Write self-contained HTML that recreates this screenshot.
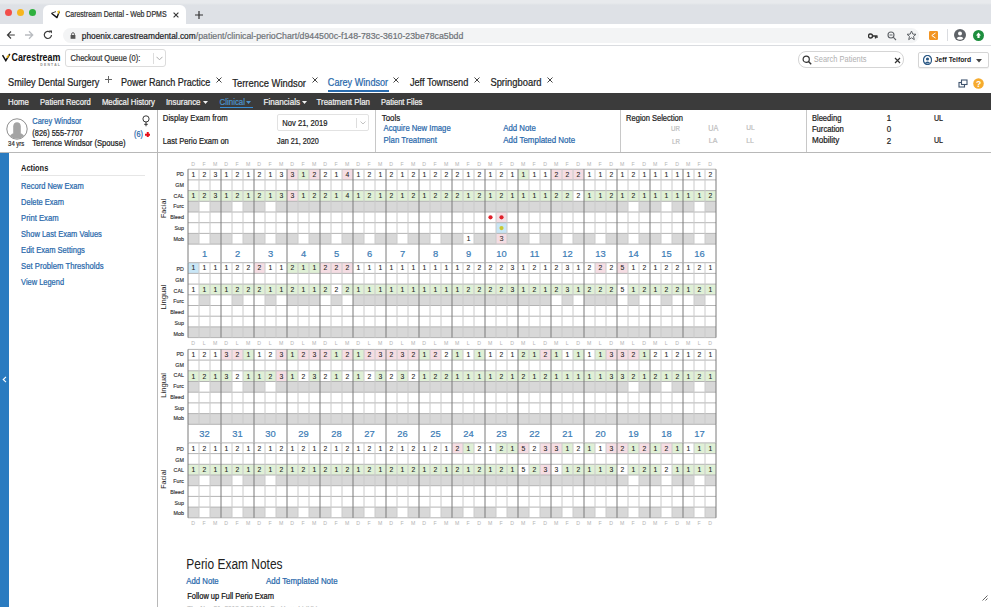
<!DOCTYPE html>
<html><head><meta charset="utf-8">
<style>
*{box-sizing:border-box;margin:0;padding:0}
html,body{width:991px;height:607px;overflow:hidden;background:#fff;font-family:"Liberation Sans",sans-serif;color:#333}
.a{position:absolute;white-space:nowrap}
.t{position:absolute;white-space:nowrap;line-height:1;transform-origin:0 0}
.grid{position:absolute;left:0;top:0}
#tabstrip{position:absolute;left:0;top:0;width:991px;height:24px;background:linear-gradient(#e8eaed 0,#e8eaed 3px,#dee1e6 5px)}
.tl{position:absolute;top:8.5px;width:7px;height:7px;border-radius:50%}
#tab{position:absolute;left:43px;top:5px;width:143px;height:19px;background:#fff;border-radius:6px 6px 0 0}
#toolbar{position:absolute;left:0;top:24px;width:991px;height:22px;background:#fff;border-bottom:1px solid #dadce0}
#omni{position:absolute;left:62.5px;top:3.5px;width:856px;height:15px;background:#f3f4f5;border-radius:7.5px}
#nav{position:absolute;left:0;top:93px;width:991px;height:17px;background:#3b3b3b}
</style></head><body>
<div id="tabstrip">
  <div class="tl" style="left:5px;background:#f24e4a"></div>
  <div class="tl" style="left:16.5px;background:#f6b51e"></div>
  <div class="tl" style="left:28.5px;background:#2eb03e"></div>
  <div id="tab">
    <svg class="a" style="left:7px;top:3.5px" width="11" height="11" viewBox="0 0 11 11"><path d="M1.5 4.2L7 8.6L9.3 2.5" fill="none" stroke="#111" stroke-width="1.4" stroke-linejoin="round"/><path d="M1.5 4.2L6 2.6" fill="none" stroke="#333" stroke-width="0.9"/><path d="M7.2 2.2L9.6 1.2L8.6 5.5z" fill="#f4c20d"/></svg>
    <svg class="a" style="left:129.5px;top:6.5px" width="6" height="6" viewBox="0 0 6 6"><path d="M0.6 0.6L5.4 5.4M5.4 0.6L0.6 5.4" stroke="#333" stroke-width="1.1"/></svg>
  </div>
  <svg class="a" style="left:195px;top:10.5px" width="8" height="8" viewBox="0 0 8 8"><path d="M4 0V8M0 4H8" stroke="#333" stroke-width="1.2"/></svg>
</div>
<div id="toolbar">
  <svg class="a" style="left:5.6px;top:6px" width="10" height="10" viewBox="0 0 10 10"><path d="M8.8 5H1.8M5 1.5L1.5 5L5 8.5" fill="none" stroke="#3c3c3c" stroke-width="1.2"/></svg>
  <svg class="a" style="left:24px;top:6px" width="10" height="10" viewBox="0 0 10 10"><path d="M1 5H8.5M5 1.3L8.7 5L5 8.7" fill="none" stroke="#b9bcc0" stroke-width="1.3"/></svg>
  <svg class="a" style="left:43px;top:6px" width="10" height="10" viewBox="0 0 10 10"><path d="M8.5 5A3.6 3.6 0 1 1 7.4 2.3" fill="none" stroke="#3c3c3c" stroke-width="1.2"/><path d="M6 0.5H9V3.5z" fill="#3c3c3c"/></svg>
  <div id="omni">
    <svg class="a" style="left:7.5px;top:4px" width="6" height="7" viewBox="0 0 6 7"><rect x="0.6" y="3" width="4.8" height="3.8" fill="#555"/><path d="M1.6 3.2V2.1A1.4 1.4 0 0 1 4.4 2.1V3.2" fill="none" stroke="#555" stroke-width="0.9"/></svg>
    <svg class="a" style="left:805px;top:4px" width="10" height="8" viewBox="0 0 10 8"><circle cx="2.5" cy="4" r="2" fill="none" stroke="#333" stroke-width="1.4"/><path d="M4.5 4H9.5M7.5 4V6.5M9 4V6" stroke="#333" stroke-width="1.3" fill="none"/></svg>
    <svg class="a" style="left:824px;top:3px" width="10" height="10" viewBox="0 0 10 10"><circle cx="4" cy="4" r="3" fill="none" stroke="#5f6368" stroke-width="1.1"/><path d="M6.2 6.2L9 9M2.5 4H5.5" stroke="#5f6368" stroke-width="1.1"/></svg>
    <svg class="a" style="left:843px;top:2.5px" width="11" height="11" viewBox="0 0 11 11"><path d="M5.5 1L6.8 4.1L10 4.3L7.5 6.4L8.3 9.6L5.5 7.8L2.7 9.6L3.5 6.4L1 4.3L4.2 4.1z" fill="none" stroke="#5f6368" stroke-width="1"/></svg>
  </div>
  <svg class="a" style="left:929px;top:6.5px" width="9" height="9" viewBox="0 0 9 9"><rect width="9" height="9" rx="1.2" fill="#f29422"/><path d="M6.5 2L2.8 4.5L6.5 7" fill="none" stroke="#fff" stroke-width="1"/></svg>
  <div class="a" style="left:947px;top:5px;width:1px;height:12px;background:#dadce0"></div>
  <svg class="a" style="left:954px;top:5px" width="12" height="12" viewBox="0 0 12 12"><circle cx="6" cy="6" r="6" fill="#5f6368"/><circle cx="6" cy="4.6" r="2" fill="#fff"/><path d="M2.6 9.2A4 3 0 0 1 9.4 9.2A4.6 4.6 0 0 1 2.6 9.2z" fill="#fff"/></svg>
  <svg class="a" style="left:972.5px;top:5.5px" width="11" height="11" viewBox="0 0 11 11"><circle cx="5.5" cy="5.5" r="5.5" fill="#1e8e3e"/><path d="M5.5 2.5L8 5.5H6.6V8H4.4V5.5H3z" fill="#fff"/></svg>
</div>

<!-- app header shapes -->
<svg class="a" style="left:2px;top:53px" width="9" height="9" viewBox="0 0 9 9"><path d="M0.5 2.2L3.8 7.6L7.8 1" fill="none" stroke="#111" stroke-width="1.5"/><path d="M4.5 3.2L7.6 1.6L5.7 5.5z" fill="#f2b400"/></svg>
<div class="a" style="left:64.8px;top:48.8px;width:101.2px;height:17.8px;border:1px solid #dcdcdc;border-radius:3px;background:#fff">
  <div class="a" style="left:87px;top:3px;width:1px;height:11px;background:#ddd"></div>
  <svg class="a" style="left:90px;top:6.3px" width="7" height="5" viewBox="0 0 7 5"><path d="M0.5 0.8L3.5 3.8L6.5 0.8" fill="none" stroke="#aaa" stroke-width="1"/></svg>
</div>
<div class="a" style="left:798px;top:51px;width:106px;height:16.5px;border:1px solid #d5d5d5;border-radius:8px;background:#fff">
  <svg class="a" style="left:3px;top:2.5px" width="10" height="10" viewBox="0 0 10 10"><circle cx="4.2" cy="4.2" r="3.1" fill="none" stroke="#333" stroke-width="1.2"/><path d="M6.5 6.5L9.2 9.2" stroke="#333" stroke-width="1.4"/></svg>
  <svg class="a" style="left:94.5px;top:4.5px" width="7" height="7" viewBox="0 0 7 7"><path d="M1 1L6 6M6 1L1 6" stroke="#333" stroke-width="1.2"/></svg>
</div>
<div class="a" style="left:917.5px;top:51.5px;width:71px;height:16px;border:1px solid #d5d5d5;border-radius:2px;background:#fff;box-shadow:0 1px 1px rgba(0,0,0,.06)">
  <svg class="a" style="left:4px;top:2.5px" width="9" height="10" viewBox="0 0 9 10"><ellipse cx="4.5" cy="5" rx="4" ry="4.6" fill="none" stroke="#2d5a86" stroke-width="1.2"/><circle cx="4.5" cy="4" r="1.6" fill="#2d5a86"/><path d="M1.8 8.6A2.8 2.8 0 0 1 7.2 8.6z" fill="#2d5a86"/></svg>
  <svg class="a" style="left:57px;top:6px" width="6" height="4" viewBox="0 0 6 4"><path d="M0 0H6L3 3.5z" fill="#444"/></svg>
</div>

<!-- patient tabs shapes -->
<svg class="a" style="left:105px;top:75.5px" width="7" height="7" viewBox="0 0 7 7"><path d="M3.5 0V7M0 3.5H7" stroke="#666" stroke-width="1"/></svg>
<svg class="a" style="left:216px;top:76.5px" width="6" height="6" viewBox="0 0 6 6"><path d="M0.5 0.5L5.5 5.5M5.5 0.5L0.5 5.5" stroke="#444" stroke-width="1"/></svg>
<svg class="a" style="left:311.5px;top:76.5px" width="6" height="6" viewBox="0 0 6 6"><path d="M0.5 0.5L5.5 5.5M5.5 0.5L0.5 5.5" stroke="#444" stroke-width="1"/></svg>
<svg class="a" style="left:393px;top:76.5px" width="6" height="6" viewBox="0 0 6 6"><path d="M0.5 0.5L5.5 5.5M5.5 0.5L0.5 5.5" stroke="#444" stroke-width="1"/></svg>
<svg class="a" style="left:474px;top:76.5px" width="6" height="6" viewBox="0 0 6 6"><path d="M0.5 0.5L5.5 5.5M5.5 0.5L0.5 5.5" stroke="#444" stroke-width="1"/></svg>
<svg class="a" style="left:547px;top:76.5px" width="6" height="6" viewBox="0 0 6 6"><path d="M0.5 0.5L5.5 5.5M5.5 0.5L0.5 5.5" stroke="#444" stroke-width="1"/></svg>
<div class="a" style="left:327.8px;top:90px;width:61px;height:1.5px;background:#2a6db0"></div>
<svg class="a" style="left:958px;top:79px" width="10" height="9" viewBox="0 0 10 9"><rect x="1" y="3.5" width="5.5" height="4.5" fill="none" stroke="#3f546e" stroke-width="1.1"/><rect x="3.5" y="1" width="5.5" height="4.5" fill="#fff" stroke="#3f546e" stroke-width="1.1"/></svg>
<svg class="a" style="left:973px;top:78px" width="11" height="11" viewBox="0 0 11 11"><circle cx="5.5" cy="5.5" r="5.3" fill="#f6ab2e"/><text x="5.5" y="8.6" font-size="8.5" font-weight="bold" fill="#fff" text-anchor="middle" font-family="Liberation Sans">?</text></svg>

<!-- nav -->
<div id="nav">
  <svg class="a" style="left:202.5px;top:8px" width="5" height="3" viewBox="0 0 5 3"><path d="M0 0H5L2.5 3z" fill="#f2f2f2"/></svg>
  <svg class="a" style="left:246px;top:8px" width="5" height="3" viewBox="0 0 5 3"><path d="M0 0H5L2.5 3z" fill="#4d93cc"/></svg>
  <svg class="a" style="left:301.5px;top:8px" width="5" height="3" viewBox="0 0 5 3"><path d="M0 0H5L2.5 3z" fill="#f2f2f2"/></svg>
  <div class="a" style="left:219.6px;top:13.5px;width:33.5px;height:1.5px;background:#3a8fd6"></div>
</div>

<!-- patient header -->
<div class="a" style="left:0;top:152px;width:991px;height:1px;background:#b8b8b8"></div>
<div class="a" style="left:157px;top:110px;width:1px;height:497px;background:#b8b8b8"></div>
<div class="a" style="left:375px;top:110px;width:1px;height:42px;background:#c8c8c8"></div>
<div class="a" style="left:620px;top:110px;width:1px;height:42px;background:#c8c8c8"></div>
<div class="a" style="left:806px;top:110px;width:1px;height:42px;background:#c8c8c8"></div>

<svg class="a" style="left:5.5px;top:117.8px" width="22" height="22" viewBox="0 0 22 22"><defs><clipPath id="cc"><circle cx="11" cy="11" r="9.8"/></clipPath></defs><circle cx="11" cy="11" r="10.2" fill="#fff" stroke="#8e8e8e" stroke-width="1"/><g clip-path="url(#cc)" fill="#a4a4a4"><path d="M7.2 15.2V8.5C7.2 5.6 8.8 4.2 11 4.2C13.2 4.2 14.8 5.6 14.8 8.5V15.2z"/><path d="M3 22C3 17.5 5.5 15.6 9 14.8H13C16.5 15.6 19 17.5 19 22z"/></g></svg>
<svg class="a" style="left:141.6px;top:115px" width="8" height="12" viewBox="0 0 8 12"><circle cx="4" cy="3.9" r="3.1" fill="none" stroke="#222" stroke-width="0.9"/><path d="M4 7V11.3M2.2 9.3H5.8" stroke="#222" stroke-width="0.9"/></svg>
<svg class="a" style="left:144.6px;top:131.5px" width="5.5" height="5.5" viewBox="0 0 6 6"><path d="M3 0.3V5.7M0.3 3H5.7" stroke="#e8101a" stroke-width="2.2" stroke-linecap="round"/></svg>

<div class="a" style="left:277.2px;top:114.2px;width:91.6px;height:17.2px;border:1px solid #e2e2e2;border-radius:2px;background:#fff">
  <div class="a" style="left:78.3px;top:3px;width:1px;height:9.5px;background:#ddd"></div>
  <svg class="a" style="left:82px;top:6px" width="6" height="4" viewBox="0 0 6 4"><path d="M0.5 0.5L3 3L5.5 0.5" fill="none" stroke="#bbb" stroke-width="0.9"/></svg>
</div>

<!-- left sidebar -->
<div class="a" style="left:0;top:152.5px;width:9.2px;height:455px;background:#2a7bc0"></div>
<svg class="a" style="left:2px;top:376px" width="5" height="7" viewBox="0 0 5 7"><path d="M4 0.8L1.2 3.5L4 6.2" fill="none" stroke="#fff" stroke-width="1.1"/></svg>
<div class="a" style="left:21px;top:175px;width:124px;height:1px;background:#e6e6e6"></div>

<svg class="grid" width="991" height="607" viewBox="0 0 991 607" font-family="Liberation Sans, sans-serif"><text x="193.10" y="165.90" font-size="5.2" fill="#b4b4b4" text-anchor="middle" font-weight="normal" >D</text><text x="204.10" y="165.90" font-size="5.2" fill="#b4b4b4" text-anchor="middle" font-weight="normal" >F</text><text x="215.10" y="165.90" font-size="5.2" fill="#b4b4b4" text-anchor="middle" font-weight="normal" >M</text><text x="226.10" y="165.90" font-size="5.2" fill="#b4b4b4" text-anchor="middle" font-weight="normal" >D</text><text x="237.10" y="165.90" font-size="5.2" fill="#b4b4b4" text-anchor="middle" font-weight="normal" >F</text><text x="248.10" y="165.90" font-size="5.2" fill="#b4b4b4" text-anchor="middle" font-weight="normal" >M</text><text x="259.10" y="165.90" font-size="5.2" fill="#b4b4b4" text-anchor="middle" font-weight="normal" >D</text><text x="270.10" y="165.90" font-size="5.2" fill="#b4b4b4" text-anchor="middle" font-weight="normal" >F</text><text x="281.10" y="165.90" font-size="5.2" fill="#b4b4b4" text-anchor="middle" font-weight="normal" >M</text><text x="292.10" y="165.90" font-size="5.2" fill="#b4b4b4" text-anchor="middle" font-weight="normal" >D</text><text x="303.10" y="165.90" font-size="5.2" fill="#b4b4b4" text-anchor="middle" font-weight="normal" >F</text><text x="314.10" y="165.90" font-size="5.2" fill="#b4b4b4" text-anchor="middle" font-weight="normal" >M</text><text x="325.10" y="165.90" font-size="5.2" fill="#b4b4b4" text-anchor="middle" font-weight="normal" >D</text><text x="336.10" y="165.90" font-size="5.2" fill="#b4b4b4" text-anchor="middle" font-weight="normal" >F</text><text x="347.10" y="165.90" font-size="5.2" fill="#b4b4b4" text-anchor="middle" font-weight="normal" >M</text><text x="358.10" y="165.90" font-size="5.2" fill="#b4b4b4" text-anchor="middle" font-weight="normal" >D</text><text x="369.10" y="165.90" font-size="5.2" fill="#b4b4b4" text-anchor="middle" font-weight="normal" >F</text><text x="380.10" y="165.90" font-size="5.2" fill="#b4b4b4" text-anchor="middle" font-weight="normal" >M</text><text x="391.10" y="165.90" font-size="5.2" fill="#b4b4b4" text-anchor="middle" font-weight="normal" >D</text><text x="402.10" y="165.90" font-size="5.2" fill="#b4b4b4" text-anchor="middle" font-weight="normal" >F</text><text x="413.10" y="165.90" font-size="5.2" fill="#b4b4b4" text-anchor="middle" font-weight="normal" >M</text><text x="424.10" y="165.90" font-size="5.2" fill="#b4b4b4" text-anchor="middle" font-weight="normal" >D</text><text x="435.10" y="165.90" font-size="5.2" fill="#b4b4b4" text-anchor="middle" font-weight="normal" >F</text><text x="446.10" y="165.90" font-size="5.2" fill="#b4b4b4" text-anchor="middle" font-weight="normal" >M</text><text x="457.10" y="165.90" font-size="5.2" fill="#b4b4b4" text-anchor="middle" font-weight="normal" >M</text><text x="468.10" y="165.90" font-size="5.2" fill="#b4b4b4" text-anchor="middle" font-weight="normal" >F</text><text x="479.10" y="165.90" font-size="5.2" fill="#b4b4b4" text-anchor="middle" font-weight="normal" >D</text><text x="490.10" y="165.90" font-size="5.2" fill="#b4b4b4" text-anchor="middle" font-weight="normal" >M</text><text x="501.10" y="165.90" font-size="5.2" fill="#b4b4b4" text-anchor="middle" font-weight="normal" >F</text><text x="512.10" y="165.90" font-size="5.2" fill="#b4b4b4" text-anchor="middle" font-weight="normal" >D</text><text x="523.10" y="165.90" font-size="5.2" fill="#b4b4b4" text-anchor="middle" font-weight="normal" >M</text><text x="534.10" y="165.90" font-size="5.2" fill="#b4b4b4" text-anchor="middle" font-weight="normal" >F</text><text x="545.10" y="165.90" font-size="5.2" fill="#b4b4b4" text-anchor="middle" font-weight="normal" >D</text><text x="556.10" y="165.90" font-size="5.2" fill="#b4b4b4" text-anchor="middle" font-weight="normal" >M</text><text x="567.10" y="165.90" font-size="5.2" fill="#b4b4b4" text-anchor="middle" font-weight="normal" >F</text><text x="578.10" y="165.90" font-size="5.2" fill="#b4b4b4" text-anchor="middle" font-weight="normal" >D</text><text x="589.10" y="165.90" font-size="5.2" fill="#b4b4b4" text-anchor="middle" font-weight="normal" >M</text><text x="600.10" y="165.90" font-size="5.2" fill="#b4b4b4" text-anchor="middle" font-weight="normal" >F</text><text x="611.10" y="165.90" font-size="5.2" fill="#b4b4b4" text-anchor="middle" font-weight="normal" >D</text><text x="622.10" y="165.90" font-size="5.2" fill="#b4b4b4" text-anchor="middle" font-weight="normal" >M</text><text x="633.10" y="165.90" font-size="5.2" fill="#b4b4b4" text-anchor="middle" font-weight="normal" >F</text><text x="644.10" y="165.90" font-size="5.2" fill="#b4b4b4" text-anchor="middle" font-weight="normal" >D</text><text x="655.10" y="165.90" font-size="5.2" fill="#b4b4b4" text-anchor="middle" font-weight="normal" >M</text><text x="666.10" y="165.90" font-size="5.2" fill="#b4b4b4" text-anchor="middle" font-weight="normal" >F</text><text x="677.10" y="165.90" font-size="5.2" fill="#b4b4b4" text-anchor="middle" font-weight="normal" >D</text><text x="688.10" y="165.90" font-size="5.2" fill="#b4b4b4" text-anchor="middle" font-weight="normal" >M</text><text x="699.10" y="165.90" font-size="5.2" fill="#b4b4b4" text-anchor="middle" font-weight="normal" >F</text><text x="710.10" y="165.90" font-size="5.2" fill="#b4b4b4" text-anchor="middle" font-weight="normal" >D</text><rect x="188.00" y="169.20" width="11.00" height="10.70" fill="#ffffff"/><rect x="188.00" y="190.60" width="11.00" height="10.70" fill="#e0f0d6"/><rect x="188.00" y="201.30" width="11.00" height="10.70" fill="#d8d8d8"/><rect x="188.00" y="233.40" width="11.00" height="10.70" fill="#d8d8d8"/><rect x="199.00" y="169.20" width="11.00" height="10.70" fill="#ffffff"/><rect x="199.00" y="190.60" width="11.00" height="10.70" fill="#e0f0d6"/><rect x="210.00" y="169.20" width="11.00" height="10.70" fill="#ffffff"/><rect x="210.00" y="190.60" width="11.00" height="10.70" fill="#e0f0d6"/><rect x="210.00" y="201.30" width="11.00" height="10.70" fill="#d8d8d8"/><rect x="210.00" y="233.40" width="11.00" height="10.70" fill="#d8d8d8"/><rect x="221.00" y="169.20" width="11.00" height="10.70" fill="#ffffff"/><rect x="221.00" y="190.60" width="11.00" height="10.70" fill="#e0f0d6"/><rect x="221.00" y="201.30" width="11.00" height="10.70" fill="#d8d8d8"/><rect x="221.00" y="233.40" width="11.00" height="10.70" fill="#d8d8d8"/><rect x="232.00" y="169.20" width="11.00" height="10.70" fill="#ffffff"/><rect x="232.00" y="190.60" width="11.00" height="10.70" fill="#e0f0d6"/><rect x="243.00" y="169.20" width="11.00" height="10.70" fill="#ffffff"/><rect x="243.00" y="190.60" width="11.00" height="10.70" fill="#e0f0d6"/><rect x="243.00" y="201.30" width="11.00" height="10.70" fill="#d8d8d8"/><rect x="243.00" y="233.40" width="11.00" height="10.70" fill="#d8d8d8"/><rect x="254.00" y="169.20" width="11.00" height="10.70" fill="#ffffff"/><rect x="254.00" y="190.60" width="11.00" height="10.70" fill="#e0f0d6"/><rect x="254.00" y="201.30" width="11.00" height="10.70" fill="#d8d8d8"/><rect x="254.00" y="233.40" width="11.00" height="10.70" fill="#d8d8d8"/><rect x="265.00" y="169.20" width="11.00" height="10.70" fill="#ffffff"/><rect x="265.00" y="190.60" width="11.00" height="10.70" fill="#e0f0d6"/><rect x="276.00" y="169.20" width="11.00" height="10.70" fill="#ffffff"/><rect x="276.00" y="190.60" width="11.00" height="10.70" fill="#e0f0d6"/><rect x="276.00" y="201.30" width="11.00" height="10.70" fill="#d8d8d8"/><rect x="276.00" y="233.40" width="11.00" height="10.70" fill="#d8d8d8"/><rect x="287.00" y="169.20" width="11.00" height="10.70" fill="#f5dde3"/><rect x="287.00" y="190.60" width="11.00" height="10.70" fill="#f5dde3"/><rect x="287.00" y="201.30" width="11.00" height="10.70" fill="#d8d8d8"/><rect x="287.00" y="233.40" width="11.00" height="10.70" fill="#d8d8d8"/><rect x="298.00" y="169.20" width="11.00" height="10.70" fill="#e0f0d6"/><rect x="298.00" y="190.60" width="11.00" height="10.70" fill="#e0f0d6"/><rect x="298.00" y="201.30" width="11.00" height="10.70" fill="#d8d8d8"/><rect x="309.00" y="169.20" width="11.00" height="10.70" fill="#f5dde3"/><rect x="309.00" y="190.60" width="11.00" height="10.70" fill="#e0f0d6"/><rect x="309.00" y="201.30" width="11.00" height="10.70" fill="#d8d8d8"/><rect x="309.00" y="233.40" width="11.00" height="10.70" fill="#d8d8d8"/><rect x="320.00" y="169.20" width="11.00" height="10.70" fill="#ffffff"/><rect x="320.00" y="190.60" width="11.00" height="10.70" fill="#e0f0d6"/><rect x="320.00" y="201.30" width="11.00" height="10.70" fill="#d8d8d8"/><rect x="320.00" y="233.40" width="11.00" height="10.70" fill="#d8d8d8"/><rect x="331.00" y="169.20" width="11.00" height="10.70" fill="#ffffff"/><rect x="331.00" y="190.60" width="11.00" height="10.70" fill="#e0f0d6"/><rect x="331.00" y="201.30" width="11.00" height="10.70" fill="#d8d8d8"/><rect x="342.00" y="169.20" width="11.00" height="10.70" fill="#f5dde3"/><rect x="342.00" y="190.60" width="11.00" height="10.70" fill="#e0f0d6"/><rect x="342.00" y="201.30" width="11.00" height="10.70" fill="#d8d8d8"/><rect x="342.00" y="233.40" width="11.00" height="10.70" fill="#d8d8d8"/><rect x="353.00" y="169.20" width="11.00" height="10.70" fill="#ffffff"/><rect x="353.00" y="190.60" width="11.00" height="10.70" fill="#e0f0d6"/><rect x="353.00" y="201.30" width="11.00" height="10.70" fill="#d8d8d8"/><rect x="353.00" y="233.40" width="11.00" height="10.70" fill="#d8d8d8"/><rect x="364.00" y="169.20" width="11.00" height="10.70" fill="#ffffff"/><rect x="364.00" y="190.60" width="11.00" height="10.70" fill="#e0f0d6"/><rect x="364.00" y="201.30" width="11.00" height="10.70" fill="#d8d8d8"/><rect x="375.00" y="169.20" width="11.00" height="10.70" fill="#ffffff"/><rect x="375.00" y="190.60" width="11.00" height="10.70" fill="#e0f0d6"/><rect x="375.00" y="201.30" width="11.00" height="10.70" fill="#d8d8d8"/><rect x="375.00" y="233.40" width="11.00" height="10.70" fill="#d8d8d8"/><rect x="386.00" y="169.20" width="11.00" height="10.70" fill="#ffffff"/><rect x="386.00" y="190.60" width="11.00" height="10.70" fill="#e0f0d6"/><rect x="386.00" y="201.30" width="11.00" height="10.70" fill="#d8d8d8"/><rect x="386.00" y="233.40" width="11.00" height="10.70" fill="#d8d8d8"/><rect x="397.00" y="169.20" width="11.00" height="10.70" fill="#ffffff"/><rect x="397.00" y="190.60" width="11.00" height="10.70" fill="#e0f0d6"/><rect x="397.00" y="201.30" width="11.00" height="10.70" fill="#d8d8d8"/><rect x="408.00" y="169.20" width="11.00" height="10.70" fill="#ffffff"/><rect x="408.00" y="190.60" width="11.00" height="10.70" fill="#e0f0d6"/><rect x="408.00" y="201.30" width="11.00" height="10.70" fill="#d8d8d8"/><rect x="408.00" y="233.40" width="11.00" height="10.70" fill="#d8d8d8"/><rect x="419.00" y="169.20" width="11.00" height="10.70" fill="#ffffff"/><rect x="419.00" y="190.60" width="11.00" height="10.70" fill="#e0f0d6"/><rect x="419.00" y="201.30" width="11.00" height="10.70" fill="#d8d8d8"/><rect x="419.00" y="233.40" width="11.00" height="10.70" fill="#d8d8d8"/><rect x="430.00" y="169.20" width="11.00" height="10.70" fill="#ffffff"/><rect x="430.00" y="190.60" width="11.00" height="10.70" fill="#e0f0d6"/><rect x="430.00" y="201.30" width="11.00" height="10.70" fill="#d8d8d8"/><rect x="441.00" y="169.20" width="11.00" height="10.70" fill="#ffffff"/><rect x="441.00" y="190.60" width="11.00" height="10.70" fill="#e0f0d6"/><rect x="441.00" y="201.30" width="11.00" height="10.70" fill="#d8d8d8"/><rect x="441.00" y="233.40" width="11.00" height="10.70" fill="#d8d8d8"/><rect x="452.00" y="169.20" width="11.00" height="10.70" fill="#ffffff"/><rect x="452.00" y="190.60" width="11.00" height="10.70" fill="#e0f0d6"/><rect x="452.00" y="201.30" width="11.00" height="10.70" fill="#d8d8d8"/><rect x="452.00" y="233.40" width="11.00" height="10.70" fill="#d8d8d8"/><rect x="463.00" y="169.20" width="11.00" height="10.70" fill="#ffffff"/><rect x="463.00" y="190.60" width="11.00" height="10.70" fill="#e0f0d6"/><rect x="463.00" y="201.30" width="11.00" height="10.70" fill="#d8d8d8"/><rect x="474.00" y="169.20" width="11.00" height="10.70" fill="#ffffff"/><rect x="474.00" y="190.60" width="11.00" height="10.70" fill="#e0f0d6"/><rect x="474.00" y="201.30" width="11.00" height="10.70" fill="#d8d8d8"/><rect x="474.00" y="233.40" width="11.00" height="10.70" fill="#d8d8d8"/><rect x="485.00" y="169.20" width="11.00" height="10.70" fill="#ffffff"/><rect x="485.00" y="190.60" width="11.00" height="10.70" fill="#e0f0d6"/><rect x="485.00" y="201.30" width="11.00" height="10.70" fill="#d8d8d8"/><rect x="485.00" y="233.40" width="11.00" height="10.70" fill="#d8d8d8"/><rect x="496.00" y="169.20" width="11.00" height="10.70" fill="#ffffff"/><rect x="496.00" y="190.60" width="11.00" height="10.70" fill="#e0f0d6"/><rect x="496.00" y="201.30" width="11.00" height="10.70" fill="#d8d8d8"/><rect x="507.00" y="169.20" width="11.00" height="10.70" fill="#ffffff"/><rect x="507.00" y="190.60" width="11.00" height="10.70" fill="#e0f0d6"/><rect x="507.00" y="201.30" width="11.00" height="10.70" fill="#d8d8d8"/><rect x="507.00" y="233.40" width="11.00" height="10.70" fill="#d8d8d8"/><rect x="518.00" y="169.20" width="11.00" height="10.70" fill="#e0f0d6"/><rect x="518.00" y="190.60" width="11.00" height="10.70" fill="#e0f0d6"/><rect x="518.00" y="201.30" width="11.00" height="10.70" fill="#d8d8d8"/><rect x="518.00" y="233.40" width="11.00" height="10.70" fill="#d8d8d8"/><rect x="529.00" y="169.20" width="11.00" height="10.70" fill="#ffffff"/><rect x="529.00" y="190.60" width="11.00" height="10.70" fill="#e0f0d6"/><rect x="529.00" y="201.30" width="11.00" height="10.70" fill="#d8d8d8"/><rect x="540.00" y="169.20" width="11.00" height="10.70" fill="#ffffff"/><rect x="540.00" y="190.60" width="11.00" height="10.70" fill="#e0f0d6"/><rect x="540.00" y="201.30" width="11.00" height="10.70" fill="#d8d8d8"/><rect x="540.00" y="233.40" width="11.00" height="10.70" fill="#d8d8d8"/><rect x="551.00" y="169.20" width="11.00" height="10.70" fill="#f5dde3"/><rect x="551.00" y="190.60" width="11.00" height="10.70" fill="#e0f0d6"/><rect x="551.00" y="201.30" width="11.00" height="10.70" fill="#d8d8d8"/><rect x="551.00" y="233.40" width="11.00" height="10.70" fill="#d8d8d8"/><rect x="562.00" y="169.20" width="11.00" height="10.70" fill="#f5dde3"/><rect x="562.00" y="190.60" width="11.00" height="10.70" fill="#e0f0d6"/><rect x="562.00" y="201.30" width="11.00" height="10.70" fill="#d8d8d8"/><rect x="573.00" y="169.20" width="11.00" height="10.70" fill="#f5dde3"/><rect x="573.00" y="190.60" width="11.00" height="10.70" fill="#ffffff"/><rect x="573.00" y="201.30" width="11.00" height="10.70" fill="#d8d8d8"/><rect x="573.00" y="233.40" width="11.00" height="10.70" fill="#d8d8d8"/><rect x="584.00" y="169.20" width="11.00" height="10.70" fill="#ffffff"/><rect x="584.00" y="190.60" width="11.00" height="10.70" fill="#e0f0d6"/><rect x="584.00" y="201.30" width="11.00" height="10.70" fill="#d8d8d8"/><rect x="584.00" y="233.40" width="11.00" height="10.70" fill="#d8d8d8"/><rect x="595.00" y="169.20" width="11.00" height="10.70" fill="#ffffff"/><rect x="595.00" y="190.60" width="11.00" height="10.70" fill="#e0f0d6"/><rect x="595.00" y="201.30" width="11.00" height="10.70" fill="#d8d8d8"/><rect x="606.00" y="169.20" width="11.00" height="10.70" fill="#ffffff"/><rect x="606.00" y="190.60" width="11.00" height="10.70" fill="#e0f0d6"/><rect x="606.00" y="201.30" width="11.00" height="10.70" fill="#d8d8d8"/><rect x="606.00" y="233.40" width="11.00" height="10.70" fill="#d8d8d8"/><rect x="617.00" y="169.20" width="11.00" height="10.70" fill="#ffffff"/><rect x="617.00" y="190.60" width="11.00" height="10.70" fill="#e0f0d6"/><rect x="617.00" y="201.30" width="11.00" height="10.70" fill="#d8d8d8"/><rect x="617.00" y="233.40" width="11.00" height="10.70" fill="#d8d8d8"/><rect x="628.00" y="169.20" width="11.00" height="10.70" fill="#ffffff"/><rect x="628.00" y="190.60" width="11.00" height="10.70" fill="#e0f0d6"/><rect x="639.00" y="169.20" width="11.00" height="10.70" fill="#ffffff"/><rect x="639.00" y="190.60" width="11.00" height="10.70" fill="#e0f0d6"/><rect x="639.00" y="201.30" width="11.00" height="10.70" fill="#d8d8d8"/><rect x="639.00" y="233.40" width="11.00" height="10.70" fill="#d8d8d8"/><rect x="650.00" y="169.20" width="11.00" height="10.70" fill="#ffffff"/><rect x="650.00" y="190.60" width="11.00" height="10.70" fill="#e0f0d6"/><rect x="650.00" y="201.30" width="11.00" height="10.70" fill="#d8d8d8"/><rect x="650.00" y="233.40" width="11.00" height="10.70" fill="#d8d8d8"/><rect x="661.00" y="169.20" width="11.00" height="10.70" fill="#ffffff"/><rect x="661.00" y="190.60" width="11.00" height="10.70" fill="#e0f0d6"/><rect x="672.00" y="169.20" width="11.00" height="10.70" fill="#ffffff"/><rect x="672.00" y="190.60" width="11.00" height="10.70" fill="#e0f0d6"/><rect x="672.00" y="201.30" width="11.00" height="10.70" fill="#d8d8d8"/><rect x="672.00" y="233.40" width="11.00" height="10.70" fill="#d8d8d8"/><rect x="683.00" y="169.20" width="11.00" height="10.70" fill="#ffffff"/><rect x="683.00" y="190.60" width="11.00" height="10.70" fill="#e0f0d6"/><rect x="683.00" y="201.30" width="11.00" height="10.70" fill="#d8d8d8"/><rect x="683.00" y="233.40" width="11.00" height="10.70" fill="#d8d8d8"/><rect x="694.00" y="169.20" width="11.00" height="10.70" fill="#ffffff"/><rect x="694.00" y="190.60" width="11.00" height="10.70" fill="#e0f0d6"/><rect x="705.00" y="169.20" width="11.00" height="10.70" fill="#ffffff"/><rect x="705.00" y="190.60" width="11.00" height="10.70" fill="#e0f0d6"/><rect x="705.00" y="201.30" width="11.00" height="10.70" fill="#d8d8d8"/><rect x="705.00" y="233.40" width="11.00" height="10.70" fill="#d8d8d8"/><rect x="496.00" y="212.00" width="11.00" height="10.70" fill="#f5dde3"/><rect x="496.00" y="222.70" width="11.00" height="10.70" fill="#c9e6f6"/><rect x="496.00" y="233.40" width="11.00" height="10.70" fill="#f5dde3"/><line x1="188.00" y1="169.20" x2="716.00" y2="169.20" stroke="#b4b4b4" stroke-width="1"/><line x1="188.00" y1="179.90" x2="716.00" y2="179.90" stroke="#b4b4b4" stroke-width="1"/><line x1="188.00" y1="190.60" x2="716.00" y2="190.60" stroke="#b4b4b4" stroke-width="1"/><line x1="188.00" y1="201.30" x2="716.00" y2="201.30" stroke="#b4b4b4" stroke-width="1"/><line x1="188.00" y1="212.00" x2="716.00" y2="212.00" stroke="#b4b4b4" stroke-width="1"/><line x1="188.00" y1="222.70" x2="716.00" y2="222.70" stroke="#b4b4b4" stroke-width="1"/><line x1="188.00" y1="233.40" x2="716.00" y2="233.40" stroke="#b4b4b4" stroke-width="1"/><line x1="188.00" y1="244.10" x2="716.00" y2="244.10" stroke="#b4b4b4" stroke-width="1"/><line x1="188.00" y1="169.20" x2="188.00" y2="244.10" stroke="#7a7a7a" stroke-width="1"/><line x1="199.00" y1="169.20" x2="199.00" y2="244.10" stroke="#cacaca" stroke-width="1"/><line x1="210.00" y1="169.20" x2="210.00" y2="244.10" stroke="#cacaca" stroke-width="1"/><line x1="221.00" y1="169.20" x2="221.00" y2="244.10" stroke="#7a7a7a" stroke-width="1"/><line x1="232.00" y1="169.20" x2="232.00" y2="244.10" stroke="#cacaca" stroke-width="1"/><line x1="243.00" y1="169.20" x2="243.00" y2="244.10" stroke="#cacaca" stroke-width="1"/><line x1="254.00" y1="169.20" x2="254.00" y2="244.10" stroke="#7a7a7a" stroke-width="1"/><line x1="265.00" y1="169.20" x2="265.00" y2="244.10" stroke="#cacaca" stroke-width="1"/><line x1="276.00" y1="169.20" x2="276.00" y2="244.10" stroke="#cacaca" stroke-width="1"/><line x1="287.00" y1="169.20" x2="287.00" y2="244.10" stroke="#7a7a7a" stroke-width="1"/><line x1="298.00" y1="169.20" x2="298.00" y2="244.10" stroke="#cacaca" stroke-width="1"/><line x1="309.00" y1="169.20" x2="309.00" y2="244.10" stroke="#cacaca" stroke-width="1"/><line x1="320.00" y1="169.20" x2="320.00" y2="244.10" stroke="#7a7a7a" stroke-width="1"/><line x1="331.00" y1="169.20" x2="331.00" y2="244.10" stroke="#cacaca" stroke-width="1"/><line x1="342.00" y1="169.20" x2="342.00" y2="244.10" stroke="#cacaca" stroke-width="1"/><line x1="353.00" y1="169.20" x2="353.00" y2="244.10" stroke="#7a7a7a" stroke-width="1"/><line x1="364.00" y1="169.20" x2="364.00" y2="244.10" stroke="#cacaca" stroke-width="1"/><line x1="375.00" y1="169.20" x2="375.00" y2="244.10" stroke="#cacaca" stroke-width="1"/><line x1="386.00" y1="169.20" x2="386.00" y2="244.10" stroke="#7a7a7a" stroke-width="1"/><line x1="397.00" y1="169.20" x2="397.00" y2="244.10" stroke="#cacaca" stroke-width="1"/><line x1="408.00" y1="169.20" x2="408.00" y2="244.10" stroke="#cacaca" stroke-width="1"/><line x1="419.00" y1="169.20" x2="419.00" y2="244.10" stroke="#7a7a7a" stroke-width="1"/><line x1="430.00" y1="169.20" x2="430.00" y2="244.10" stroke="#cacaca" stroke-width="1"/><line x1="441.00" y1="169.20" x2="441.00" y2="244.10" stroke="#cacaca" stroke-width="1"/><line x1="452.00" y1="169.20" x2="452.00" y2="244.10" stroke="#7a7a7a" stroke-width="1"/><line x1="463.00" y1="169.20" x2="463.00" y2="244.10" stroke="#cacaca" stroke-width="1"/><line x1="474.00" y1="169.20" x2="474.00" y2="244.10" stroke="#cacaca" stroke-width="1"/><line x1="485.00" y1="169.20" x2="485.00" y2="244.10" stroke="#7a7a7a" stroke-width="1"/><line x1="496.00" y1="169.20" x2="496.00" y2="244.10" stroke="#cacaca" stroke-width="1"/><line x1="507.00" y1="169.20" x2="507.00" y2="244.10" stroke="#cacaca" stroke-width="1"/><line x1="518.00" y1="169.20" x2="518.00" y2="244.10" stroke="#7a7a7a" stroke-width="1"/><line x1="529.00" y1="169.20" x2="529.00" y2="244.10" stroke="#cacaca" stroke-width="1"/><line x1="540.00" y1="169.20" x2="540.00" y2="244.10" stroke="#cacaca" stroke-width="1"/><line x1="551.00" y1="169.20" x2="551.00" y2="244.10" stroke="#7a7a7a" stroke-width="1"/><line x1="562.00" y1="169.20" x2="562.00" y2="244.10" stroke="#cacaca" stroke-width="1"/><line x1="573.00" y1="169.20" x2="573.00" y2="244.10" stroke="#cacaca" stroke-width="1"/><line x1="584.00" y1="169.20" x2="584.00" y2="244.10" stroke="#7a7a7a" stroke-width="1"/><line x1="595.00" y1="169.20" x2="595.00" y2="244.10" stroke="#cacaca" stroke-width="1"/><line x1="606.00" y1="169.20" x2="606.00" y2="244.10" stroke="#cacaca" stroke-width="1"/><line x1="617.00" y1="169.20" x2="617.00" y2="244.10" stroke="#7a7a7a" stroke-width="1"/><line x1="628.00" y1="169.20" x2="628.00" y2="244.10" stroke="#cacaca" stroke-width="1"/><line x1="639.00" y1="169.20" x2="639.00" y2="244.10" stroke="#cacaca" stroke-width="1"/><line x1="650.00" y1="169.20" x2="650.00" y2="244.10" stroke="#7a7a7a" stroke-width="1"/><line x1="661.00" y1="169.20" x2="661.00" y2="244.10" stroke="#cacaca" stroke-width="1"/><line x1="672.00" y1="169.20" x2="672.00" y2="244.10" stroke="#cacaca" stroke-width="1"/><line x1="683.00" y1="169.20" x2="683.00" y2="244.10" stroke="#7a7a7a" stroke-width="1"/><line x1="694.00" y1="169.20" x2="694.00" y2="244.10" stroke="#cacaca" stroke-width="1"/><line x1="705.00" y1="169.20" x2="705.00" y2="244.10" stroke="#cacaca" stroke-width="1"/><line x1="716.00" y1="169.20" x2="716.00" y2="244.10" stroke="#7a7a7a" stroke-width="1"/><text x="193.30" y="176.95" font-size="6.8" fill="#222" text-anchor="middle" font-weight="normal" stroke="#222" stroke-width="0.08">1</text><text x="193.30" y="198.35" font-size="6.8" fill="#222" text-anchor="middle" font-weight="normal" stroke="#222" stroke-width="0.08">1</text><text x="204.30" y="176.95" font-size="6.8" fill="#222" text-anchor="middle" font-weight="normal" stroke="#222" stroke-width="0.08">2</text><text x="204.30" y="198.35" font-size="6.8" fill="#222" text-anchor="middle" font-weight="normal" stroke="#222" stroke-width="0.08">2</text><text x="215.30" y="176.95" font-size="6.8" fill="#222" text-anchor="middle" font-weight="normal" stroke="#222" stroke-width="0.08">3</text><text x="215.30" y="198.35" font-size="6.8" fill="#222" text-anchor="middle" font-weight="normal" stroke="#222" stroke-width="0.08">3</text><text x="226.30" y="176.95" font-size="6.8" fill="#222" text-anchor="middle" font-weight="normal" stroke="#222" stroke-width="0.08">1</text><text x="226.30" y="198.35" font-size="6.8" fill="#222" text-anchor="middle" font-weight="normal" stroke="#222" stroke-width="0.08">1</text><text x="237.30" y="176.95" font-size="6.8" fill="#222" text-anchor="middle" font-weight="normal" stroke="#222" stroke-width="0.08">2</text><text x="237.30" y="198.35" font-size="6.8" fill="#222" text-anchor="middle" font-weight="normal" stroke="#222" stroke-width="0.08">2</text><text x="248.30" y="176.95" font-size="6.8" fill="#222" text-anchor="middle" font-weight="normal" stroke="#222" stroke-width="0.08">1</text><text x="248.30" y="198.35" font-size="6.8" fill="#222" text-anchor="middle" font-weight="normal" stroke="#222" stroke-width="0.08">1</text><text x="259.30" y="176.95" font-size="6.8" fill="#222" text-anchor="middle" font-weight="normal" stroke="#222" stroke-width="0.08">2</text><text x="259.30" y="198.35" font-size="6.8" fill="#222" text-anchor="middle" font-weight="normal" stroke="#222" stroke-width="0.08">2</text><text x="270.30" y="176.95" font-size="6.8" fill="#222" text-anchor="middle" font-weight="normal" stroke="#222" stroke-width="0.08">1</text><text x="270.30" y="198.35" font-size="6.8" fill="#222" text-anchor="middle" font-weight="normal" stroke="#222" stroke-width="0.08">1</text><text x="281.30" y="176.95" font-size="6.8" fill="#222" text-anchor="middle" font-weight="normal" stroke="#222" stroke-width="0.08">3</text><text x="281.30" y="198.35" font-size="6.8" fill="#222" text-anchor="middle" font-weight="normal" stroke="#222" stroke-width="0.08">3</text><text x="292.30" y="176.95" font-size="6.8" fill="#222" text-anchor="middle" font-weight="normal" stroke="#222" stroke-width="0.08">3</text><text x="292.30" y="198.35" font-size="6.8" fill="#222" text-anchor="middle" font-weight="normal" stroke="#222" stroke-width="0.08">3</text><text x="303.30" y="176.95" font-size="6.8" fill="#222" text-anchor="middle" font-weight="normal" stroke="#222" stroke-width="0.08">1</text><text x="303.30" y="198.35" font-size="6.8" fill="#222" text-anchor="middle" font-weight="normal" stroke="#222" stroke-width="0.08">1</text><text x="314.30" y="176.95" font-size="6.8" fill="#222" text-anchor="middle" font-weight="normal" stroke="#222" stroke-width="0.08">2</text><text x="314.30" y="198.35" font-size="6.8" fill="#222" text-anchor="middle" font-weight="normal" stroke="#222" stroke-width="0.08">2</text><text x="325.30" y="176.95" font-size="6.8" fill="#222" text-anchor="middle" font-weight="normal" stroke="#222" stroke-width="0.08">2</text><text x="325.30" y="198.35" font-size="6.8" fill="#222" text-anchor="middle" font-weight="normal" stroke="#222" stroke-width="0.08">2</text><text x="336.30" y="176.95" font-size="6.8" fill="#222" text-anchor="middle" font-weight="normal" stroke="#222" stroke-width="0.08">1</text><text x="336.30" y="198.35" font-size="6.8" fill="#222" text-anchor="middle" font-weight="normal" stroke="#222" stroke-width="0.08">1</text><text x="347.30" y="176.95" font-size="6.8" fill="#222" text-anchor="middle" font-weight="normal" stroke="#222" stroke-width="0.08">4</text><text x="347.30" y="198.35" font-size="6.8" fill="#222" text-anchor="middle" font-weight="normal" stroke="#222" stroke-width="0.08">4</text><text x="358.30" y="176.95" font-size="6.8" fill="#222" text-anchor="middle" font-weight="normal" stroke="#222" stroke-width="0.08">1</text><text x="358.30" y="198.35" font-size="6.8" fill="#222" text-anchor="middle" font-weight="normal" stroke="#222" stroke-width="0.08">1</text><text x="369.30" y="176.95" font-size="6.8" fill="#222" text-anchor="middle" font-weight="normal" stroke="#222" stroke-width="0.08">2</text><text x="369.30" y="198.35" font-size="6.8" fill="#222" text-anchor="middle" font-weight="normal" stroke="#222" stroke-width="0.08">2</text><text x="380.30" y="176.95" font-size="6.8" fill="#222" text-anchor="middle" font-weight="normal" stroke="#222" stroke-width="0.08">1</text><text x="380.30" y="198.35" font-size="6.8" fill="#222" text-anchor="middle" font-weight="normal" stroke="#222" stroke-width="0.08">1</text><text x="391.30" y="176.95" font-size="6.8" fill="#222" text-anchor="middle" font-weight="normal" stroke="#222" stroke-width="0.08">2</text><text x="391.30" y="198.35" font-size="6.8" fill="#222" text-anchor="middle" font-weight="normal" stroke="#222" stroke-width="0.08">2</text><text x="402.30" y="176.95" font-size="6.8" fill="#222" text-anchor="middle" font-weight="normal" stroke="#222" stroke-width="0.08">1</text><text x="402.30" y="198.35" font-size="6.8" fill="#222" text-anchor="middle" font-weight="normal" stroke="#222" stroke-width="0.08">1</text><text x="413.30" y="176.95" font-size="6.8" fill="#222" text-anchor="middle" font-weight="normal" stroke="#222" stroke-width="0.08">2</text><text x="413.30" y="198.35" font-size="6.8" fill="#222" text-anchor="middle" font-weight="normal" stroke="#222" stroke-width="0.08">2</text><text x="424.30" y="176.95" font-size="6.8" fill="#222" text-anchor="middle" font-weight="normal" stroke="#222" stroke-width="0.08">1</text><text x="424.30" y="198.35" font-size="6.8" fill="#222" text-anchor="middle" font-weight="normal" stroke="#222" stroke-width="0.08">1</text><text x="435.30" y="176.95" font-size="6.8" fill="#222" text-anchor="middle" font-weight="normal" stroke="#222" stroke-width="0.08">2</text><text x="435.30" y="198.35" font-size="6.8" fill="#222" text-anchor="middle" font-weight="normal" stroke="#222" stroke-width="0.08">2</text><text x="446.30" y="176.95" font-size="6.8" fill="#222" text-anchor="middle" font-weight="normal" stroke="#222" stroke-width="0.08">2</text><text x="446.30" y="198.35" font-size="6.8" fill="#222" text-anchor="middle" font-weight="normal" stroke="#222" stroke-width="0.08">2</text><text x="457.30" y="176.95" font-size="6.8" fill="#222" text-anchor="middle" font-weight="normal" stroke="#222" stroke-width="0.08">2</text><text x="457.30" y="198.35" font-size="6.8" fill="#222" text-anchor="middle" font-weight="normal" stroke="#222" stroke-width="0.08">2</text><text x="468.30" y="176.95" font-size="6.8" fill="#222" text-anchor="middle" font-weight="normal" stroke="#222" stroke-width="0.08">1</text><text x="468.30" y="198.35" font-size="6.8" fill="#222" text-anchor="middle" font-weight="normal" stroke="#222" stroke-width="0.08">1</text><text x="479.30" y="176.95" font-size="6.8" fill="#222" text-anchor="middle" font-weight="normal" stroke="#222" stroke-width="0.08">2</text><text x="479.30" y="198.35" font-size="6.8" fill="#222" text-anchor="middle" font-weight="normal" stroke="#222" stroke-width="0.08">2</text><text x="490.30" y="176.95" font-size="6.8" fill="#222" text-anchor="middle" font-weight="normal" stroke="#222" stroke-width="0.08">1</text><text x="490.30" y="198.35" font-size="6.8" fill="#222" text-anchor="middle" font-weight="normal" stroke="#222" stroke-width="0.08">1</text><text x="501.30" y="176.95" font-size="6.8" fill="#222" text-anchor="middle" font-weight="normal" stroke="#222" stroke-width="0.08">2</text><text x="501.30" y="198.35" font-size="6.8" fill="#222" text-anchor="middle" font-weight="normal" stroke="#222" stroke-width="0.08">2</text><text x="512.30" y="176.95" font-size="6.8" fill="#222" text-anchor="middle" font-weight="normal" stroke="#222" stroke-width="0.08">1</text><text x="512.30" y="198.35" font-size="6.8" fill="#222" text-anchor="middle" font-weight="normal" stroke="#222" stroke-width="0.08">1</text><text x="523.30" y="176.95" font-size="6.8" fill="#222" text-anchor="middle" font-weight="normal" stroke="#222" stroke-width="0.08">1</text><text x="523.30" y="198.35" font-size="6.8" fill="#222" text-anchor="middle" font-weight="normal" stroke="#222" stroke-width="0.08">1</text><text x="534.30" y="176.95" font-size="6.8" fill="#222" text-anchor="middle" font-weight="normal" stroke="#222" stroke-width="0.08">1</text><text x="534.30" y="198.35" font-size="6.8" fill="#222" text-anchor="middle" font-weight="normal" stroke="#222" stroke-width="0.08">1</text><text x="545.30" y="176.95" font-size="6.8" fill="#222" text-anchor="middle" font-weight="normal" stroke="#222" stroke-width="0.08">1</text><text x="545.30" y="198.35" font-size="6.8" fill="#222" text-anchor="middle" font-weight="normal" stroke="#222" stroke-width="0.08">1</text><text x="556.30" y="176.95" font-size="6.8" fill="#222" text-anchor="middle" font-weight="normal" stroke="#222" stroke-width="0.08">2</text><text x="556.30" y="198.35" font-size="6.8" fill="#222" text-anchor="middle" font-weight="normal" stroke="#222" stroke-width="0.08">2</text><text x="567.30" y="176.95" font-size="6.8" fill="#222" text-anchor="middle" font-weight="normal" stroke="#222" stroke-width="0.08">2</text><text x="567.30" y="198.35" font-size="6.8" fill="#222" text-anchor="middle" font-weight="normal" stroke="#222" stroke-width="0.08">2</text><text x="578.30" y="176.95" font-size="6.8" fill="#222" text-anchor="middle" font-weight="normal" stroke="#222" stroke-width="0.08">2</text><text x="578.30" y="198.35" font-size="6.8" fill="#222" text-anchor="middle" font-weight="normal" stroke="#222" stroke-width="0.08">2</text><text x="589.30" y="176.95" font-size="6.8" fill="#222" text-anchor="middle" font-weight="normal" stroke="#222" stroke-width="0.08">1</text><text x="589.30" y="198.35" font-size="6.8" fill="#222" text-anchor="middle" font-weight="normal" stroke="#222" stroke-width="0.08">1</text><text x="600.30" y="176.95" font-size="6.8" fill="#222" text-anchor="middle" font-weight="normal" stroke="#222" stroke-width="0.08">1</text><text x="600.30" y="198.35" font-size="6.8" fill="#222" text-anchor="middle" font-weight="normal" stroke="#222" stroke-width="0.08">1</text><text x="611.30" y="176.95" font-size="6.8" fill="#222" text-anchor="middle" font-weight="normal" stroke="#222" stroke-width="0.08">2</text><text x="611.30" y="198.35" font-size="6.8" fill="#222" text-anchor="middle" font-weight="normal" stroke="#222" stroke-width="0.08">2</text><text x="622.30" y="176.95" font-size="6.8" fill="#222" text-anchor="middle" font-weight="normal" stroke="#222" stroke-width="0.08">1</text><text x="622.30" y="198.35" font-size="6.8" fill="#222" text-anchor="middle" font-weight="normal" stroke="#222" stroke-width="0.08">1</text><text x="633.30" y="176.95" font-size="6.8" fill="#222" text-anchor="middle" font-weight="normal" stroke="#222" stroke-width="0.08">2</text><text x="633.30" y="198.35" font-size="6.8" fill="#222" text-anchor="middle" font-weight="normal" stroke="#222" stroke-width="0.08">2</text><text x="644.30" y="176.95" font-size="6.8" fill="#222" text-anchor="middle" font-weight="normal" stroke="#222" stroke-width="0.08">1</text><text x="644.30" y="198.35" font-size="6.8" fill="#222" text-anchor="middle" font-weight="normal" stroke="#222" stroke-width="0.08">1</text><text x="655.30" y="176.95" font-size="6.8" fill="#222" text-anchor="middle" font-weight="normal" stroke="#222" stroke-width="0.08">1</text><text x="655.30" y="198.35" font-size="6.8" fill="#222" text-anchor="middle" font-weight="normal" stroke="#222" stroke-width="0.08">1</text><text x="666.30" y="176.95" font-size="6.8" fill="#222" text-anchor="middle" font-weight="normal" stroke="#222" stroke-width="0.08">1</text><text x="666.30" y="198.35" font-size="6.8" fill="#222" text-anchor="middle" font-weight="normal" stroke="#222" stroke-width="0.08">1</text><text x="677.30" y="176.95" font-size="6.8" fill="#222" text-anchor="middle" font-weight="normal" stroke="#222" stroke-width="0.08">1</text><text x="677.30" y="198.35" font-size="6.8" fill="#222" text-anchor="middle" font-weight="normal" stroke="#222" stroke-width="0.08">1</text><text x="688.30" y="176.95" font-size="6.8" fill="#222" text-anchor="middle" font-weight="normal" stroke="#222" stroke-width="0.08">1</text><text x="688.30" y="198.35" font-size="6.8" fill="#222" text-anchor="middle" font-weight="normal" stroke="#222" stroke-width="0.08">1</text><text x="699.30" y="176.95" font-size="6.8" fill="#222" text-anchor="middle" font-weight="normal" stroke="#222" stroke-width="0.08">1</text><text x="699.30" y="198.35" font-size="6.8" fill="#222" text-anchor="middle" font-weight="normal" stroke="#222" stroke-width="0.08">1</text><text x="710.30" y="176.95" font-size="6.8" fill="#222" text-anchor="middle" font-weight="normal" stroke="#222" stroke-width="0.08">2</text><text x="710.30" y="198.35" font-size="6.8" fill="#222" text-anchor="middle" font-weight="normal" stroke="#222" stroke-width="0.08">2</text><text x="183.90" y="176.35" font-size="5.3" fill="#333" text-anchor="end" font-weight="normal" stroke="#333" stroke-width="0.15">PD</text><text x="183.90" y="187.05" font-size="5.3" fill="#333" text-anchor="end" font-weight="normal" stroke="#333" stroke-width="0.15">GM</text><text x="183.90" y="197.75" font-size="5.3" fill="#333" text-anchor="end" font-weight="normal" stroke="#333" stroke-width="0.15">CAL</text><text x="183.90" y="208.45" font-size="5.3" fill="#333" text-anchor="end" font-weight="normal" stroke="#333" stroke-width="0.15">Furc</text><text x="183.90" y="219.15" font-size="5.3" fill="#333" text-anchor="end" font-weight="normal" stroke="#333" stroke-width="0.15">Bleed</text><text x="183.90" y="229.85" font-size="5.3" fill="#333" text-anchor="end" font-weight="normal" stroke="#333" stroke-width="0.15">Sup</text><text x="183.90" y="240.55" font-size="5.3" fill="#333" text-anchor="end" font-weight="normal" stroke="#333" stroke-width="0.15">Mob</text><line x1="188.00" y1="244.10" x2="188.00" y2="262.70" stroke="#7a7a7a" stroke-width="1"/><line x1="221.00" y1="244.10" x2="221.00" y2="262.70" stroke="#7a7a7a" stroke-width="1"/><text x="204.50" y="256.80" font-size="9.4" fill="#3a7bb5" text-anchor="middle" font-weight="normal" stroke="#3a7bb5" stroke-width="0.2">1</text><line x1="254.00" y1="244.10" x2="254.00" y2="262.70" stroke="#7a7a7a" stroke-width="1"/><text x="237.50" y="256.80" font-size="9.4" fill="#3a7bb5" text-anchor="middle" font-weight="normal" stroke="#3a7bb5" stroke-width="0.2">2</text><line x1="287.00" y1="244.10" x2="287.00" y2="262.70" stroke="#7a7a7a" stroke-width="1"/><text x="270.50" y="256.80" font-size="9.4" fill="#3a7bb5" text-anchor="middle" font-weight="normal" stroke="#3a7bb5" stroke-width="0.2">3</text><line x1="320.00" y1="244.10" x2="320.00" y2="262.70" stroke="#7a7a7a" stroke-width="1"/><text x="303.50" y="256.80" font-size="9.4" fill="#3a7bb5" text-anchor="middle" font-weight="normal" stroke="#3a7bb5" stroke-width="0.2">4</text><line x1="353.00" y1="244.10" x2="353.00" y2="262.70" stroke="#7a7a7a" stroke-width="1"/><text x="336.50" y="256.80" font-size="9.4" fill="#3a7bb5" text-anchor="middle" font-weight="normal" stroke="#3a7bb5" stroke-width="0.2">5</text><line x1="386.00" y1="244.10" x2="386.00" y2="262.70" stroke="#7a7a7a" stroke-width="1"/><text x="369.50" y="256.80" font-size="9.4" fill="#3a7bb5" text-anchor="middle" font-weight="normal" stroke="#3a7bb5" stroke-width="0.2">6</text><line x1="419.00" y1="244.10" x2="419.00" y2="262.70" stroke="#7a7a7a" stroke-width="1"/><text x="402.50" y="256.80" font-size="9.4" fill="#3a7bb5" text-anchor="middle" font-weight="normal" stroke="#3a7bb5" stroke-width="0.2">7</text><line x1="452.00" y1="244.10" x2="452.00" y2="262.70" stroke="#7a7a7a" stroke-width="1"/><text x="435.50" y="256.80" font-size="9.4" fill="#3a7bb5" text-anchor="middle" font-weight="normal" stroke="#3a7bb5" stroke-width="0.2">8</text><line x1="485.00" y1="244.10" x2="485.00" y2="262.70" stroke="#7a7a7a" stroke-width="1"/><text x="468.50" y="256.80" font-size="9.4" fill="#3a7bb5" text-anchor="middle" font-weight="normal" stroke="#3a7bb5" stroke-width="0.2">9</text><line x1="518.00" y1="244.10" x2="518.00" y2="262.70" stroke="#7a7a7a" stroke-width="1"/><text x="501.50" y="256.80" font-size="9.4" fill="#3a7bb5" text-anchor="middle" font-weight="normal" stroke="#3a7bb5" stroke-width="0.2">10</text><line x1="551.00" y1="244.10" x2="551.00" y2="262.70" stroke="#7a7a7a" stroke-width="1"/><text x="534.50" y="256.80" font-size="9.4" fill="#3a7bb5" text-anchor="middle" font-weight="normal" stroke="#3a7bb5" stroke-width="0.2">11</text><line x1="584.00" y1="244.10" x2="584.00" y2="262.70" stroke="#7a7a7a" stroke-width="1"/><text x="567.50" y="256.80" font-size="9.4" fill="#3a7bb5" text-anchor="middle" font-weight="normal" stroke="#3a7bb5" stroke-width="0.2">12</text><line x1="617.00" y1="244.10" x2="617.00" y2="262.70" stroke="#7a7a7a" stroke-width="1"/><text x="600.50" y="256.80" font-size="9.4" fill="#3a7bb5" text-anchor="middle" font-weight="normal" stroke="#3a7bb5" stroke-width="0.2">13</text><line x1="650.00" y1="244.10" x2="650.00" y2="262.70" stroke="#7a7a7a" stroke-width="1"/><text x="633.50" y="256.80" font-size="9.4" fill="#3a7bb5" text-anchor="middle" font-weight="normal" stroke="#3a7bb5" stroke-width="0.2">14</text><line x1="683.00" y1="244.10" x2="683.00" y2="262.70" stroke="#7a7a7a" stroke-width="1"/><text x="666.50" y="256.80" font-size="9.4" fill="#3a7bb5" text-anchor="middle" font-weight="normal" stroke="#3a7bb5" stroke-width="0.2">15</text><line x1="716.00" y1="244.10" x2="716.00" y2="262.70" stroke="#7a7a7a" stroke-width="1"/><text x="699.50" y="256.80" font-size="9.4" fill="#3a7bb5" text-anchor="middle" font-weight="normal" stroke="#3a7bb5" stroke-width="0.2">16</text><rect x="188.00" y="262.70" width="11.00" height="10.70" fill="#c9e6f6"/><rect x="188.00" y="284.10" width="11.00" height="10.70" fill="#ffffff"/><rect x="188.00" y="326.90" width="11.00" height="10.70" fill="#d8d8d8"/><rect x="199.00" y="262.70" width="11.00" height="10.70" fill="#ffffff"/><rect x="199.00" y="284.10" width="11.00" height="10.70" fill="#e0f0d6"/><rect x="199.00" y="294.80" width="11.00" height="10.70" fill="#d8d8d8"/><rect x="199.00" y="326.90" width="11.00" height="10.70" fill="#d8d8d8"/><rect x="210.00" y="262.70" width="11.00" height="10.70" fill="#ffffff"/><rect x="210.00" y="284.10" width="11.00" height="10.70" fill="#e0f0d6"/><rect x="210.00" y="326.90" width="11.00" height="10.70" fill="#d8d8d8"/><rect x="221.00" y="262.70" width="11.00" height="10.70" fill="#ffffff"/><rect x="221.00" y="284.10" width="11.00" height="10.70" fill="#e0f0d6"/><rect x="221.00" y="326.90" width="11.00" height="10.70" fill="#d8d8d8"/><rect x="232.00" y="262.70" width="11.00" height="10.70" fill="#ffffff"/><rect x="232.00" y="284.10" width="11.00" height="10.70" fill="#e0f0d6"/><rect x="232.00" y="294.80" width="11.00" height="10.70" fill="#d8d8d8"/><rect x="232.00" y="326.90" width="11.00" height="10.70" fill="#d8d8d8"/><rect x="243.00" y="262.70" width="11.00" height="10.70" fill="#ffffff"/><rect x="243.00" y="284.10" width="11.00" height="10.70" fill="#e0f0d6"/><rect x="243.00" y="326.90" width="11.00" height="10.70" fill="#d8d8d8"/><rect x="254.00" y="262.70" width="11.00" height="10.70" fill="#f5dde3"/><rect x="254.00" y="284.10" width="11.00" height="10.70" fill="#e0f0d6"/><rect x="254.00" y="326.90" width="11.00" height="10.70" fill="#d8d8d8"/><rect x="265.00" y="262.70" width="11.00" height="10.70" fill="#ffffff"/><rect x="265.00" y="284.10" width="11.00" height="10.70" fill="#e0f0d6"/><rect x="265.00" y="294.80" width="11.00" height="10.70" fill="#d8d8d8"/><rect x="265.00" y="326.90" width="11.00" height="10.70" fill="#d8d8d8"/><rect x="276.00" y="262.70" width="11.00" height="10.70" fill="#ffffff"/><rect x="276.00" y="284.10" width="11.00" height="10.70" fill="#e0f0d6"/><rect x="276.00" y="326.90" width="11.00" height="10.70" fill="#d8d8d8"/><rect x="287.00" y="262.70" width="11.00" height="10.70" fill="#e0f0d6"/><rect x="287.00" y="284.10" width="11.00" height="10.70" fill="#e0f0d6"/><rect x="287.00" y="294.80" width="11.00" height="10.70" fill="#d8d8d8"/><rect x="287.00" y="326.90" width="11.00" height="10.70" fill="#d8d8d8"/><rect x="298.00" y="262.70" width="11.00" height="10.70" fill="#e0f0d6"/><rect x="298.00" y="284.10" width="11.00" height="10.70" fill="#e0f0d6"/><rect x="298.00" y="294.80" width="11.00" height="10.70" fill="#d8d8d8"/><rect x="298.00" y="326.90" width="11.00" height="10.70" fill="#d8d8d8"/><rect x="309.00" y="262.70" width="11.00" height="10.70" fill="#e0f0d6"/><rect x="309.00" y="284.10" width="11.00" height="10.70" fill="#e0f0d6"/><rect x="309.00" y="294.80" width="11.00" height="10.70" fill="#d8d8d8"/><rect x="309.00" y="326.90" width="11.00" height="10.70" fill="#d8d8d8"/><rect x="320.00" y="262.70" width="11.00" height="10.70" fill="#f5dde3"/><rect x="320.00" y="284.10" width="11.00" height="10.70" fill="#e0f0d6"/><rect x="320.00" y="326.90" width="11.00" height="10.70" fill="#d8d8d8"/><rect x="331.00" y="262.70" width="11.00" height="10.70" fill="#f5dde3"/><rect x="331.00" y="284.10" width="11.00" height="10.70" fill="#ffffff"/><rect x="331.00" y="294.80" width="11.00" height="10.70" fill="#d8d8d8"/><rect x="331.00" y="326.90" width="11.00" height="10.70" fill="#d8d8d8"/><rect x="342.00" y="262.70" width="11.00" height="10.70" fill="#f5dde3"/><rect x="342.00" y="284.10" width="11.00" height="10.70" fill="#e0f0d6"/><rect x="342.00" y="326.90" width="11.00" height="10.70" fill="#d8d8d8"/><rect x="353.00" y="262.70" width="11.00" height="10.70" fill="#ffffff"/><rect x="353.00" y="284.10" width="11.00" height="10.70" fill="#e0f0d6"/><rect x="353.00" y="294.80" width="11.00" height="10.70" fill="#d8d8d8"/><rect x="353.00" y="326.90" width="11.00" height="10.70" fill="#d8d8d8"/><rect x="364.00" y="262.70" width="11.00" height="10.70" fill="#ffffff"/><rect x="364.00" y="284.10" width="11.00" height="10.70" fill="#e0f0d6"/><rect x="364.00" y="294.80" width="11.00" height="10.70" fill="#d8d8d8"/><rect x="364.00" y="326.90" width="11.00" height="10.70" fill="#d8d8d8"/><rect x="375.00" y="262.70" width="11.00" height="10.70" fill="#ffffff"/><rect x="375.00" y="284.10" width="11.00" height="10.70" fill="#e0f0d6"/><rect x="375.00" y="294.80" width="11.00" height="10.70" fill="#d8d8d8"/><rect x="375.00" y="326.90" width="11.00" height="10.70" fill="#d8d8d8"/><rect x="386.00" y="262.70" width="11.00" height="10.70" fill="#ffffff"/><rect x="386.00" y="284.10" width="11.00" height="10.70" fill="#e0f0d6"/><rect x="386.00" y="294.80" width="11.00" height="10.70" fill="#d8d8d8"/><rect x="386.00" y="326.90" width="11.00" height="10.70" fill="#d8d8d8"/><rect x="397.00" y="262.70" width="11.00" height="10.70" fill="#ffffff"/><rect x="397.00" y="284.10" width="11.00" height="10.70" fill="#e0f0d6"/><rect x="397.00" y="294.80" width="11.00" height="10.70" fill="#d8d8d8"/><rect x="397.00" y="326.90" width="11.00" height="10.70" fill="#d8d8d8"/><rect x="408.00" y="262.70" width="11.00" height="10.70" fill="#ffffff"/><rect x="408.00" y="284.10" width="11.00" height="10.70" fill="#e0f0d6"/><rect x="408.00" y="294.80" width="11.00" height="10.70" fill="#d8d8d8"/><rect x="408.00" y="326.90" width="11.00" height="10.70" fill="#d8d8d8"/><rect x="419.00" y="262.70" width="11.00" height="10.70" fill="#ffffff"/><rect x="419.00" y="284.10" width="11.00" height="10.70" fill="#e0f0d6"/><rect x="419.00" y="294.80" width="11.00" height="10.70" fill="#d8d8d8"/><rect x="419.00" y="326.90" width="11.00" height="10.70" fill="#d8d8d8"/><rect x="430.00" y="262.70" width="11.00" height="10.70" fill="#ffffff"/><rect x="430.00" y="284.10" width="11.00" height="10.70" fill="#e0f0d6"/><rect x="430.00" y="294.80" width="11.00" height="10.70" fill="#d8d8d8"/><rect x="430.00" y="326.90" width="11.00" height="10.70" fill="#d8d8d8"/><rect x="441.00" y="262.70" width="11.00" height="10.70" fill="#ffffff"/><rect x="441.00" y="284.10" width="11.00" height="10.70" fill="#e0f0d6"/><rect x="441.00" y="294.80" width="11.00" height="10.70" fill="#d8d8d8"/><rect x="441.00" y="326.90" width="11.00" height="10.70" fill="#d8d8d8"/><rect x="452.00" y="262.70" width="11.00" height="10.70" fill="#ffffff"/><rect x="452.00" y="284.10" width="11.00" height="10.70" fill="#e0f0d6"/><rect x="452.00" y="294.80" width="11.00" height="10.70" fill="#d8d8d8"/><rect x="452.00" y="326.90" width="11.00" height="10.70" fill="#d8d8d8"/><rect x="463.00" y="262.70" width="11.00" height="10.70" fill="#ffffff"/><rect x="463.00" y="284.10" width="11.00" height="10.70" fill="#e0f0d6"/><rect x="463.00" y="294.80" width="11.00" height="10.70" fill="#d8d8d8"/><rect x="463.00" y="326.90" width="11.00" height="10.70" fill="#d8d8d8"/><rect x="474.00" y="262.70" width="11.00" height="10.70" fill="#ffffff"/><rect x="474.00" y="284.10" width="11.00" height="10.70" fill="#e0f0d6"/><rect x="474.00" y="294.80" width="11.00" height="10.70" fill="#d8d8d8"/><rect x="474.00" y="326.90" width="11.00" height="10.70" fill="#d8d8d8"/><rect x="485.00" y="262.70" width="11.00" height="10.70" fill="#ffffff"/><rect x="485.00" y="284.10" width="11.00" height="10.70" fill="#e0f0d6"/><rect x="485.00" y="294.80" width="11.00" height="10.70" fill="#d8d8d8"/><rect x="485.00" y="326.90" width="11.00" height="10.70" fill="#d8d8d8"/><rect x="496.00" y="262.70" width="11.00" height="10.70" fill="#ffffff"/><rect x="496.00" y="284.10" width="11.00" height="10.70" fill="#e0f0d6"/><rect x="496.00" y="294.80" width="11.00" height="10.70" fill="#d8d8d8"/><rect x="496.00" y="326.90" width="11.00" height="10.70" fill="#d8d8d8"/><rect x="507.00" y="262.70" width="11.00" height="10.70" fill="#ffffff"/><rect x="507.00" y="284.10" width="11.00" height="10.70" fill="#e0f0d6"/><rect x="507.00" y="294.80" width="11.00" height="10.70" fill="#d8d8d8"/><rect x="507.00" y="326.90" width="11.00" height="10.70" fill="#d8d8d8"/><rect x="518.00" y="262.70" width="11.00" height="10.70" fill="#ffffff"/><rect x="518.00" y="284.10" width="11.00" height="10.70" fill="#e0f0d6"/><rect x="518.00" y="294.80" width="11.00" height="10.70" fill="#d8d8d8"/><rect x="518.00" y="326.90" width="11.00" height="10.70" fill="#d8d8d8"/><rect x="529.00" y="262.70" width="11.00" height="10.70" fill="#ffffff"/><rect x="529.00" y="284.10" width="11.00" height="10.70" fill="#e0f0d6"/><rect x="529.00" y="294.80" width="11.00" height="10.70" fill="#d8d8d8"/><rect x="529.00" y="326.90" width="11.00" height="10.70" fill="#d8d8d8"/><rect x="540.00" y="262.70" width="11.00" height="10.70" fill="#ffffff"/><rect x="540.00" y="284.10" width="11.00" height="10.70" fill="#e0f0d6"/><rect x="540.00" y="294.80" width="11.00" height="10.70" fill="#d8d8d8"/><rect x="540.00" y="326.90" width="11.00" height="10.70" fill="#d8d8d8"/><rect x="551.00" y="262.70" width="11.00" height="10.70" fill="#ffffff"/><rect x="551.00" y="284.10" width="11.00" height="10.70" fill="#e0f0d6"/><rect x="551.00" y="326.90" width="11.00" height="10.70" fill="#d8d8d8"/><rect x="562.00" y="262.70" width="11.00" height="10.70" fill="#ffffff"/><rect x="562.00" y="284.10" width="11.00" height="10.70" fill="#e0f0d6"/><rect x="562.00" y="294.80" width="11.00" height="10.70" fill="#d8d8d8"/><rect x="562.00" y="326.90" width="11.00" height="10.70" fill="#d8d8d8"/><rect x="573.00" y="262.70" width="11.00" height="10.70" fill="#ffffff"/><rect x="573.00" y="284.10" width="11.00" height="10.70" fill="#e0f0d6"/><rect x="573.00" y="326.90" width="11.00" height="10.70" fill="#d8d8d8"/><rect x="584.00" y="262.70" width="11.00" height="10.70" fill="#ffffff"/><rect x="584.00" y="284.10" width="11.00" height="10.70" fill="#e0f0d6"/><rect x="584.00" y="294.80" width="11.00" height="10.70" fill="#d8d8d8"/><rect x="584.00" y="326.90" width="11.00" height="10.70" fill="#d8d8d8"/><rect x="595.00" y="262.70" width="11.00" height="10.70" fill="#f5dde3"/><rect x="595.00" y="284.10" width="11.00" height="10.70" fill="#e0f0d6"/><rect x="595.00" y="294.80" width="11.00" height="10.70" fill="#d8d8d8"/><rect x="595.00" y="326.90" width="11.00" height="10.70" fill="#d8d8d8"/><rect x="606.00" y="262.70" width="11.00" height="10.70" fill="#ffffff"/><rect x="606.00" y="284.10" width="11.00" height="10.70" fill="#e0f0d6"/><rect x="606.00" y="294.80" width="11.00" height="10.70" fill="#d8d8d8"/><rect x="606.00" y="326.90" width="11.00" height="10.70" fill="#d8d8d8"/><rect x="617.00" y="262.70" width="11.00" height="10.70" fill="#f5dde3"/><rect x="617.00" y="284.10" width="11.00" height="10.70" fill="#ffffff"/><rect x="617.00" y="326.90" width="11.00" height="10.70" fill="#d8d8d8"/><rect x="628.00" y="262.70" width="11.00" height="10.70" fill="#ffffff"/><rect x="628.00" y="284.10" width="11.00" height="10.70" fill="#e0f0d6"/><rect x="628.00" y="294.80" width="11.00" height="10.70" fill="#d8d8d8"/><rect x="628.00" y="326.90" width="11.00" height="10.70" fill="#d8d8d8"/><rect x="639.00" y="262.70" width="11.00" height="10.70" fill="#ffffff"/><rect x="639.00" y="284.10" width="11.00" height="10.70" fill="#e0f0d6"/><rect x="639.00" y="326.90" width="11.00" height="10.70" fill="#d8d8d8"/><rect x="650.00" y="262.70" width="11.00" height="10.70" fill="#ffffff"/><rect x="650.00" y="284.10" width="11.00" height="10.70" fill="#e0f0d6"/><rect x="650.00" y="326.90" width="11.00" height="10.70" fill="#d8d8d8"/><rect x="661.00" y="262.70" width="11.00" height="10.70" fill="#ffffff"/><rect x="661.00" y="284.10" width="11.00" height="10.70" fill="#e0f0d6"/><rect x="661.00" y="294.80" width="11.00" height="10.70" fill="#d8d8d8"/><rect x="661.00" y="326.90" width="11.00" height="10.70" fill="#d8d8d8"/><rect x="672.00" y="262.70" width="11.00" height="10.70" fill="#ffffff"/><rect x="672.00" y="284.10" width="11.00" height="10.70" fill="#e0f0d6"/><rect x="672.00" y="326.90" width="11.00" height="10.70" fill="#d8d8d8"/><rect x="683.00" y="262.70" width="11.00" height="10.70" fill="#ffffff"/><rect x="683.00" y="284.10" width="11.00" height="10.70" fill="#e0f0d6"/><rect x="683.00" y="326.90" width="11.00" height="10.70" fill="#d8d8d8"/><rect x="694.00" y="262.70" width="11.00" height="10.70" fill="#ffffff"/><rect x="694.00" y="284.10" width="11.00" height="10.70" fill="#e0f0d6"/><rect x="694.00" y="294.80" width="11.00" height="10.70" fill="#d8d8d8"/><rect x="694.00" y="326.90" width="11.00" height="10.70" fill="#d8d8d8"/><rect x="705.00" y="262.70" width="11.00" height="10.70" fill="#ffffff"/><rect x="705.00" y="284.10" width="11.00" height="10.70" fill="#e0f0d6"/><rect x="705.00" y="326.90" width="11.00" height="10.70" fill="#d8d8d8"/><line x1="188.00" y1="262.70" x2="716.00" y2="262.70" stroke="#b4b4b4" stroke-width="1"/><line x1="188.00" y1="273.40" x2="716.00" y2="273.40" stroke="#b4b4b4" stroke-width="1"/><line x1="188.00" y1="284.10" x2="716.00" y2="284.10" stroke="#b4b4b4" stroke-width="1"/><line x1="188.00" y1="294.80" x2="716.00" y2="294.80" stroke="#b4b4b4" stroke-width="1"/><line x1="188.00" y1="305.50" x2="716.00" y2="305.50" stroke="#b4b4b4" stroke-width="1"/><line x1="188.00" y1="316.20" x2="716.00" y2="316.20" stroke="#b4b4b4" stroke-width="1"/><line x1="188.00" y1="326.90" x2="716.00" y2="326.90" stroke="#b4b4b4" stroke-width="1"/><line x1="188.00" y1="337.60" x2="716.00" y2="337.60" stroke="#b4b4b4" stroke-width="1"/><line x1="188.00" y1="262.70" x2="188.00" y2="337.60" stroke="#7a7a7a" stroke-width="1"/><line x1="199.00" y1="262.70" x2="199.00" y2="337.60" stroke="#cacaca" stroke-width="1"/><line x1="210.00" y1="262.70" x2="210.00" y2="337.60" stroke="#cacaca" stroke-width="1"/><line x1="221.00" y1="262.70" x2="221.00" y2="337.60" stroke="#7a7a7a" stroke-width="1"/><line x1="232.00" y1="262.70" x2="232.00" y2="337.60" stroke="#cacaca" stroke-width="1"/><line x1="243.00" y1="262.70" x2="243.00" y2="337.60" stroke="#cacaca" stroke-width="1"/><line x1="254.00" y1="262.70" x2="254.00" y2="337.60" stroke="#7a7a7a" stroke-width="1"/><line x1="265.00" y1="262.70" x2="265.00" y2="337.60" stroke="#cacaca" stroke-width="1"/><line x1="276.00" y1="262.70" x2="276.00" y2="337.60" stroke="#cacaca" stroke-width="1"/><line x1="287.00" y1="262.70" x2="287.00" y2="337.60" stroke="#7a7a7a" stroke-width="1"/><line x1="298.00" y1="262.70" x2="298.00" y2="337.60" stroke="#cacaca" stroke-width="1"/><line x1="309.00" y1="262.70" x2="309.00" y2="337.60" stroke="#cacaca" stroke-width="1"/><line x1="320.00" y1="262.70" x2="320.00" y2="337.60" stroke="#7a7a7a" stroke-width="1"/><line x1="331.00" y1="262.70" x2="331.00" y2="337.60" stroke="#cacaca" stroke-width="1"/><line x1="342.00" y1="262.70" x2="342.00" y2="337.60" stroke="#cacaca" stroke-width="1"/><line x1="353.00" y1="262.70" x2="353.00" y2="337.60" stroke="#7a7a7a" stroke-width="1"/><line x1="364.00" y1="262.70" x2="364.00" y2="337.60" stroke="#cacaca" stroke-width="1"/><line x1="375.00" y1="262.70" x2="375.00" y2="337.60" stroke="#cacaca" stroke-width="1"/><line x1="386.00" y1="262.70" x2="386.00" y2="337.60" stroke="#7a7a7a" stroke-width="1"/><line x1="397.00" y1="262.70" x2="397.00" y2="337.60" stroke="#cacaca" stroke-width="1"/><line x1="408.00" y1="262.70" x2="408.00" y2="337.60" stroke="#cacaca" stroke-width="1"/><line x1="419.00" y1="262.70" x2="419.00" y2="337.60" stroke="#7a7a7a" stroke-width="1"/><line x1="430.00" y1="262.70" x2="430.00" y2="337.60" stroke="#cacaca" stroke-width="1"/><line x1="441.00" y1="262.70" x2="441.00" y2="337.60" stroke="#cacaca" stroke-width="1"/><line x1="452.00" y1="262.70" x2="452.00" y2="337.60" stroke="#7a7a7a" stroke-width="1"/><line x1="463.00" y1="262.70" x2="463.00" y2="337.60" stroke="#cacaca" stroke-width="1"/><line x1="474.00" y1="262.70" x2="474.00" y2="337.60" stroke="#cacaca" stroke-width="1"/><line x1="485.00" y1="262.70" x2="485.00" y2="337.60" stroke="#7a7a7a" stroke-width="1"/><line x1="496.00" y1="262.70" x2="496.00" y2="337.60" stroke="#cacaca" stroke-width="1"/><line x1="507.00" y1="262.70" x2="507.00" y2="337.60" stroke="#cacaca" stroke-width="1"/><line x1="518.00" y1="262.70" x2="518.00" y2="337.60" stroke="#7a7a7a" stroke-width="1"/><line x1="529.00" y1="262.70" x2="529.00" y2="337.60" stroke="#cacaca" stroke-width="1"/><line x1="540.00" y1="262.70" x2="540.00" y2="337.60" stroke="#cacaca" stroke-width="1"/><line x1="551.00" y1="262.70" x2="551.00" y2="337.60" stroke="#7a7a7a" stroke-width="1"/><line x1="562.00" y1="262.70" x2="562.00" y2="337.60" stroke="#cacaca" stroke-width="1"/><line x1="573.00" y1="262.70" x2="573.00" y2="337.60" stroke="#cacaca" stroke-width="1"/><line x1="584.00" y1="262.70" x2="584.00" y2="337.60" stroke="#7a7a7a" stroke-width="1"/><line x1="595.00" y1="262.70" x2="595.00" y2="337.60" stroke="#cacaca" stroke-width="1"/><line x1="606.00" y1="262.70" x2="606.00" y2="337.60" stroke="#cacaca" stroke-width="1"/><line x1="617.00" y1="262.70" x2="617.00" y2="337.60" stroke="#7a7a7a" stroke-width="1"/><line x1="628.00" y1="262.70" x2="628.00" y2="337.60" stroke="#cacaca" stroke-width="1"/><line x1="639.00" y1="262.70" x2="639.00" y2="337.60" stroke="#cacaca" stroke-width="1"/><line x1="650.00" y1="262.70" x2="650.00" y2="337.60" stroke="#7a7a7a" stroke-width="1"/><line x1="661.00" y1="262.70" x2="661.00" y2="337.60" stroke="#cacaca" stroke-width="1"/><line x1="672.00" y1="262.70" x2="672.00" y2="337.60" stroke="#cacaca" stroke-width="1"/><line x1="683.00" y1="262.70" x2="683.00" y2="337.60" stroke="#7a7a7a" stroke-width="1"/><line x1="694.00" y1="262.70" x2="694.00" y2="337.60" stroke="#cacaca" stroke-width="1"/><line x1="705.00" y1="262.70" x2="705.00" y2="337.60" stroke="#cacaca" stroke-width="1"/><line x1="716.00" y1="262.70" x2="716.00" y2="337.60" stroke="#7a7a7a" stroke-width="1"/><text x="193.30" y="270.45" font-size="6.8" fill="#222" text-anchor="middle" font-weight="normal" stroke="#222" stroke-width="0.08">1</text><text x="193.30" y="291.85" font-size="6.8" fill="#222" text-anchor="middle" font-weight="normal" stroke="#222" stroke-width="0.08">1</text><text x="204.30" y="270.45" font-size="6.8" fill="#222" text-anchor="middle" font-weight="normal" stroke="#222" stroke-width="0.08">1</text><text x="204.30" y="291.85" font-size="6.8" fill="#222" text-anchor="middle" font-weight="normal" stroke="#222" stroke-width="0.08">1</text><text x="215.30" y="270.45" font-size="6.8" fill="#222" text-anchor="middle" font-weight="normal" stroke="#222" stroke-width="0.08">1</text><text x="215.30" y="291.85" font-size="6.8" fill="#222" text-anchor="middle" font-weight="normal" stroke="#222" stroke-width="0.08">1</text><text x="226.30" y="270.45" font-size="6.8" fill="#222" text-anchor="middle" font-weight="normal" stroke="#222" stroke-width="0.08">1</text><text x="226.30" y="291.85" font-size="6.8" fill="#222" text-anchor="middle" font-weight="normal" stroke="#222" stroke-width="0.08">1</text><text x="237.30" y="270.45" font-size="6.8" fill="#222" text-anchor="middle" font-weight="normal" stroke="#222" stroke-width="0.08">2</text><text x="237.30" y="291.85" font-size="6.8" fill="#222" text-anchor="middle" font-weight="normal" stroke="#222" stroke-width="0.08">2</text><text x="248.30" y="270.45" font-size="6.8" fill="#222" text-anchor="middle" font-weight="normal" stroke="#222" stroke-width="0.08">2</text><text x="248.30" y="291.85" font-size="6.8" fill="#222" text-anchor="middle" font-weight="normal" stroke="#222" stroke-width="0.08">2</text><text x="259.30" y="270.45" font-size="6.8" fill="#222" text-anchor="middle" font-weight="normal" stroke="#222" stroke-width="0.08">2</text><text x="259.30" y="291.85" font-size="6.8" fill="#222" text-anchor="middle" font-weight="normal" stroke="#222" stroke-width="0.08">2</text><text x="270.30" y="270.45" font-size="6.8" fill="#222" text-anchor="middle" font-weight="normal" stroke="#222" stroke-width="0.08">1</text><text x="270.30" y="291.85" font-size="6.8" fill="#222" text-anchor="middle" font-weight="normal" stroke="#222" stroke-width="0.08">1</text><text x="281.30" y="270.45" font-size="6.8" fill="#222" text-anchor="middle" font-weight="normal" stroke="#222" stroke-width="0.08">1</text><text x="281.30" y="291.85" font-size="6.8" fill="#222" text-anchor="middle" font-weight="normal" stroke="#222" stroke-width="0.08">1</text><text x="292.30" y="270.45" font-size="6.8" fill="#222" text-anchor="middle" font-weight="normal" stroke="#222" stroke-width="0.08">2</text><text x="292.30" y="291.85" font-size="6.8" fill="#222" text-anchor="middle" font-weight="normal" stroke="#222" stroke-width="0.08">2</text><text x="303.30" y="270.45" font-size="6.8" fill="#222" text-anchor="middle" font-weight="normal" stroke="#222" stroke-width="0.08">1</text><text x="303.30" y="291.85" font-size="6.8" fill="#222" text-anchor="middle" font-weight="normal" stroke="#222" stroke-width="0.08">1</text><text x="314.30" y="270.45" font-size="6.8" fill="#222" text-anchor="middle" font-weight="normal" stroke="#222" stroke-width="0.08">1</text><text x="314.30" y="291.85" font-size="6.8" fill="#222" text-anchor="middle" font-weight="normal" stroke="#222" stroke-width="0.08">1</text><text x="325.30" y="270.45" font-size="6.8" fill="#222" text-anchor="middle" font-weight="normal" stroke="#222" stroke-width="0.08">2</text><text x="325.30" y="291.85" font-size="6.8" fill="#222" text-anchor="middle" font-weight="normal" stroke="#222" stroke-width="0.08">2</text><text x="336.30" y="270.45" font-size="6.8" fill="#222" text-anchor="middle" font-weight="normal" stroke="#222" stroke-width="0.08">2</text><text x="336.30" y="291.85" font-size="6.8" fill="#222" text-anchor="middle" font-weight="normal" stroke="#222" stroke-width="0.08">2</text><text x="347.30" y="270.45" font-size="6.8" fill="#222" text-anchor="middle" font-weight="normal" stroke="#222" stroke-width="0.08">2</text><text x="347.30" y="291.85" font-size="6.8" fill="#222" text-anchor="middle" font-weight="normal" stroke="#222" stroke-width="0.08">2</text><text x="358.30" y="270.45" font-size="6.8" fill="#222" text-anchor="middle" font-weight="normal" stroke="#222" stroke-width="0.08">1</text><text x="358.30" y="291.85" font-size="6.8" fill="#222" text-anchor="middle" font-weight="normal" stroke="#222" stroke-width="0.08">1</text><text x="369.30" y="270.45" font-size="6.8" fill="#222" text-anchor="middle" font-weight="normal" stroke="#222" stroke-width="0.08">1</text><text x="369.30" y="291.85" font-size="6.8" fill="#222" text-anchor="middle" font-weight="normal" stroke="#222" stroke-width="0.08">1</text><text x="380.30" y="270.45" font-size="6.8" fill="#222" text-anchor="middle" font-weight="normal" stroke="#222" stroke-width="0.08">1</text><text x="380.30" y="291.85" font-size="6.8" fill="#222" text-anchor="middle" font-weight="normal" stroke="#222" stroke-width="0.08">1</text><text x="391.30" y="270.45" font-size="6.8" fill="#222" text-anchor="middle" font-weight="normal" stroke="#222" stroke-width="0.08">1</text><text x="391.30" y="291.85" font-size="6.8" fill="#222" text-anchor="middle" font-weight="normal" stroke="#222" stroke-width="0.08">1</text><text x="402.30" y="270.45" font-size="6.8" fill="#222" text-anchor="middle" font-weight="normal" stroke="#222" stroke-width="0.08">1</text><text x="402.30" y="291.85" font-size="6.8" fill="#222" text-anchor="middle" font-weight="normal" stroke="#222" stroke-width="0.08">1</text><text x="413.30" y="270.45" font-size="6.8" fill="#222" text-anchor="middle" font-weight="normal" stroke="#222" stroke-width="0.08">1</text><text x="413.30" y="291.85" font-size="6.8" fill="#222" text-anchor="middle" font-weight="normal" stroke="#222" stroke-width="0.08">1</text><text x="424.30" y="270.45" font-size="6.8" fill="#222" text-anchor="middle" font-weight="normal" stroke="#222" stroke-width="0.08">1</text><text x="424.30" y="291.85" font-size="6.8" fill="#222" text-anchor="middle" font-weight="normal" stroke="#222" stroke-width="0.08">1</text><text x="435.30" y="270.45" font-size="6.8" fill="#222" text-anchor="middle" font-weight="normal" stroke="#222" stroke-width="0.08">1</text><text x="435.30" y="291.85" font-size="6.8" fill="#222" text-anchor="middle" font-weight="normal" stroke="#222" stroke-width="0.08">1</text><text x="446.30" y="270.45" font-size="6.8" fill="#222" text-anchor="middle" font-weight="normal" stroke="#222" stroke-width="0.08">1</text><text x="446.30" y="291.85" font-size="6.8" fill="#222" text-anchor="middle" font-weight="normal" stroke="#222" stroke-width="0.08">1</text><text x="457.30" y="270.45" font-size="6.8" fill="#222" text-anchor="middle" font-weight="normal" stroke="#222" stroke-width="0.08">1</text><text x="457.30" y="291.85" font-size="6.8" fill="#222" text-anchor="middle" font-weight="normal" stroke="#222" stroke-width="0.08">1</text><text x="468.30" y="270.45" font-size="6.8" fill="#222" text-anchor="middle" font-weight="normal" stroke="#222" stroke-width="0.08">2</text><text x="468.30" y="291.85" font-size="6.8" fill="#222" text-anchor="middle" font-weight="normal" stroke="#222" stroke-width="0.08">2</text><text x="479.30" y="270.45" font-size="6.8" fill="#222" text-anchor="middle" font-weight="normal" stroke="#222" stroke-width="0.08">2</text><text x="479.30" y="291.85" font-size="6.8" fill="#222" text-anchor="middle" font-weight="normal" stroke="#222" stroke-width="0.08">2</text><text x="490.30" y="270.45" font-size="6.8" fill="#222" text-anchor="middle" font-weight="normal" stroke="#222" stroke-width="0.08">2</text><text x="490.30" y="291.85" font-size="6.8" fill="#222" text-anchor="middle" font-weight="normal" stroke="#222" stroke-width="0.08">2</text><text x="501.30" y="270.45" font-size="6.8" fill="#222" text-anchor="middle" font-weight="normal" stroke="#222" stroke-width="0.08">2</text><text x="501.30" y="291.85" font-size="6.8" fill="#222" text-anchor="middle" font-weight="normal" stroke="#222" stroke-width="0.08">2</text><text x="512.30" y="270.45" font-size="6.8" fill="#222" text-anchor="middle" font-weight="normal" stroke="#222" stroke-width="0.08">3</text><text x="512.30" y="291.85" font-size="6.8" fill="#222" text-anchor="middle" font-weight="normal" stroke="#222" stroke-width="0.08">3</text><text x="523.30" y="270.45" font-size="6.8" fill="#222" text-anchor="middle" font-weight="normal" stroke="#222" stroke-width="0.08">1</text><text x="523.30" y="291.85" font-size="6.8" fill="#222" text-anchor="middle" font-weight="normal" stroke="#222" stroke-width="0.08">1</text><text x="534.30" y="270.45" font-size="6.8" fill="#222" text-anchor="middle" font-weight="normal" stroke="#222" stroke-width="0.08">2</text><text x="534.30" y="291.85" font-size="6.8" fill="#222" text-anchor="middle" font-weight="normal" stroke="#222" stroke-width="0.08">2</text><text x="545.30" y="270.45" font-size="6.8" fill="#222" text-anchor="middle" font-weight="normal" stroke="#222" stroke-width="0.08">1</text><text x="545.30" y="291.85" font-size="6.8" fill="#222" text-anchor="middle" font-weight="normal" stroke="#222" stroke-width="0.08">1</text><text x="556.30" y="270.45" font-size="6.8" fill="#222" text-anchor="middle" font-weight="normal" stroke="#222" stroke-width="0.08">2</text><text x="556.30" y="291.85" font-size="6.8" fill="#222" text-anchor="middle" font-weight="normal" stroke="#222" stroke-width="0.08">2</text><text x="567.30" y="270.45" font-size="6.8" fill="#222" text-anchor="middle" font-weight="normal" stroke="#222" stroke-width="0.08">3</text><text x="567.30" y="291.85" font-size="6.8" fill="#222" text-anchor="middle" font-weight="normal" stroke="#222" stroke-width="0.08">3</text><text x="578.30" y="270.45" font-size="6.8" fill="#222" text-anchor="middle" font-weight="normal" stroke="#222" stroke-width="0.08">1</text><text x="578.30" y="291.85" font-size="6.8" fill="#222" text-anchor="middle" font-weight="normal" stroke="#222" stroke-width="0.08">1</text><text x="589.30" y="270.45" font-size="6.8" fill="#222" text-anchor="middle" font-weight="normal" stroke="#222" stroke-width="0.08">2</text><text x="589.30" y="291.85" font-size="6.8" fill="#222" text-anchor="middle" font-weight="normal" stroke="#222" stroke-width="0.08">2</text><text x="600.30" y="270.45" font-size="6.8" fill="#222" text-anchor="middle" font-weight="normal" stroke="#222" stroke-width="0.08">2</text><text x="600.30" y="291.85" font-size="6.8" fill="#222" text-anchor="middle" font-weight="normal" stroke="#222" stroke-width="0.08">2</text><text x="611.30" y="270.45" font-size="6.8" fill="#222" text-anchor="middle" font-weight="normal" stroke="#222" stroke-width="0.08">2</text><text x="611.30" y="291.85" font-size="6.8" fill="#222" text-anchor="middle" font-weight="normal" stroke="#222" stroke-width="0.08">2</text><text x="622.30" y="270.45" font-size="6.8" fill="#222" text-anchor="middle" font-weight="normal" stroke="#222" stroke-width="0.08">5</text><text x="622.30" y="291.85" font-size="6.8" fill="#222" text-anchor="middle" font-weight="normal" stroke="#222" stroke-width="0.08">5</text><text x="633.30" y="270.45" font-size="6.8" fill="#222" text-anchor="middle" font-weight="normal" stroke="#222" stroke-width="0.08">1</text><text x="633.30" y="291.85" font-size="6.8" fill="#222" text-anchor="middle" font-weight="normal" stroke="#222" stroke-width="0.08">1</text><text x="644.30" y="270.45" font-size="6.8" fill="#222" text-anchor="middle" font-weight="normal" stroke="#222" stroke-width="0.08">2</text><text x="644.30" y="291.85" font-size="6.8" fill="#222" text-anchor="middle" font-weight="normal" stroke="#222" stroke-width="0.08">2</text><text x="655.30" y="270.45" font-size="6.8" fill="#222" text-anchor="middle" font-weight="normal" stroke="#222" stroke-width="0.08">1</text><text x="655.30" y="291.85" font-size="6.8" fill="#222" text-anchor="middle" font-weight="normal" stroke="#222" stroke-width="0.08">1</text><text x="666.30" y="270.45" font-size="6.8" fill="#222" text-anchor="middle" font-weight="normal" stroke="#222" stroke-width="0.08">2</text><text x="666.30" y="291.85" font-size="6.8" fill="#222" text-anchor="middle" font-weight="normal" stroke="#222" stroke-width="0.08">2</text><text x="677.30" y="270.45" font-size="6.8" fill="#222" text-anchor="middle" font-weight="normal" stroke="#222" stroke-width="0.08">2</text><text x="677.30" y="291.85" font-size="6.8" fill="#222" text-anchor="middle" font-weight="normal" stroke="#222" stroke-width="0.08">2</text><text x="688.30" y="270.45" font-size="6.8" fill="#222" text-anchor="middle" font-weight="normal" stroke="#222" stroke-width="0.08">1</text><text x="688.30" y="291.85" font-size="6.8" fill="#222" text-anchor="middle" font-weight="normal" stroke="#222" stroke-width="0.08">1</text><text x="699.30" y="270.45" font-size="6.8" fill="#222" text-anchor="middle" font-weight="normal" stroke="#222" stroke-width="0.08">2</text><text x="699.30" y="291.85" font-size="6.8" fill="#222" text-anchor="middle" font-weight="normal" stroke="#222" stroke-width="0.08">2</text><text x="710.30" y="270.45" font-size="6.8" fill="#222" text-anchor="middle" font-weight="normal" stroke="#222" stroke-width="0.08">1</text><text x="710.30" y="291.85" font-size="6.8" fill="#222" text-anchor="middle" font-weight="normal" stroke="#222" stroke-width="0.08">1</text><text x="183.90" y="271.35" font-size="5.3" fill="#333" text-anchor="end" font-weight="normal" stroke="#333" stroke-width="0.15">PD</text><text x="183.90" y="282.05" font-size="5.3" fill="#333" text-anchor="end" font-weight="normal" stroke="#333" stroke-width="0.15">GM</text><text x="183.90" y="292.75" font-size="5.3" fill="#333" text-anchor="end" font-weight="normal" stroke="#333" stroke-width="0.15">CAL</text><text x="183.90" y="303.45" font-size="5.3" fill="#333" text-anchor="end" font-weight="normal" stroke="#333" stroke-width="0.15">Furc</text><text x="183.90" y="314.15" font-size="5.3" fill="#333" text-anchor="end" font-weight="normal" stroke="#333" stroke-width="0.15">Bleed</text><text x="183.90" y="324.85" font-size="5.3" fill="#333" text-anchor="end" font-weight="normal" stroke="#333" stroke-width="0.15">Sup</text><text x="183.90" y="335.55" font-size="5.3" fill="#333" text-anchor="end" font-weight="normal" stroke="#333" stroke-width="0.15">Mob</text><text x="193.10" y="345.10" font-size="5.2" fill="#b4b4b4" text-anchor="middle" font-weight="normal" >D</text><text x="204.10" y="345.10" font-size="5.2" fill="#b4b4b4" text-anchor="middle" font-weight="normal" >L</text><text x="215.10" y="345.10" font-size="5.2" fill="#b4b4b4" text-anchor="middle" font-weight="normal" >M</text><text x="226.10" y="345.10" font-size="5.2" fill="#b4b4b4" text-anchor="middle" font-weight="normal" >D</text><text x="237.10" y="345.10" font-size="5.2" fill="#b4b4b4" text-anchor="middle" font-weight="normal" >L</text><text x="248.10" y="345.10" font-size="5.2" fill="#b4b4b4" text-anchor="middle" font-weight="normal" >M</text><text x="259.10" y="345.10" font-size="5.2" fill="#b4b4b4" text-anchor="middle" font-weight="normal" >D</text><text x="270.10" y="345.10" font-size="5.2" fill="#b4b4b4" text-anchor="middle" font-weight="normal" >L</text><text x="281.10" y="345.10" font-size="5.2" fill="#b4b4b4" text-anchor="middle" font-weight="normal" >M</text><text x="292.10" y="345.10" font-size="5.2" fill="#b4b4b4" text-anchor="middle" font-weight="normal" >D</text><text x="303.10" y="345.10" font-size="5.2" fill="#b4b4b4" text-anchor="middle" font-weight="normal" >L</text><text x="314.10" y="345.10" font-size="5.2" fill="#b4b4b4" text-anchor="middle" font-weight="normal" >M</text><text x="325.10" y="345.10" font-size="5.2" fill="#b4b4b4" text-anchor="middle" font-weight="normal" >D</text><text x="336.10" y="345.10" font-size="5.2" fill="#b4b4b4" text-anchor="middle" font-weight="normal" >L</text><text x="347.10" y="345.10" font-size="5.2" fill="#b4b4b4" text-anchor="middle" font-weight="normal" >M</text><text x="358.10" y="345.10" font-size="5.2" fill="#b4b4b4" text-anchor="middle" font-weight="normal" >D</text><text x="369.10" y="345.10" font-size="5.2" fill="#b4b4b4" text-anchor="middle" font-weight="normal" >L</text><text x="380.10" y="345.10" font-size="5.2" fill="#b4b4b4" text-anchor="middle" font-weight="normal" >M</text><text x="391.10" y="345.10" font-size="5.2" fill="#b4b4b4" text-anchor="middle" font-weight="normal" >D</text><text x="402.10" y="345.10" font-size="5.2" fill="#b4b4b4" text-anchor="middle" font-weight="normal" >L</text><text x="413.10" y="345.10" font-size="5.2" fill="#b4b4b4" text-anchor="middle" font-weight="normal" >M</text><text x="424.10" y="345.10" font-size="5.2" fill="#b4b4b4" text-anchor="middle" font-weight="normal" >D</text><text x="435.10" y="345.10" font-size="5.2" fill="#b4b4b4" text-anchor="middle" font-weight="normal" >L</text><text x="446.10" y="345.10" font-size="5.2" fill="#b4b4b4" text-anchor="middle" font-weight="normal" >M</text><text x="457.10" y="345.10" font-size="5.2" fill="#b4b4b4" text-anchor="middle" font-weight="normal" >M</text><text x="468.10" y="345.10" font-size="5.2" fill="#b4b4b4" text-anchor="middle" font-weight="normal" >L</text><text x="479.10" y="345.10" font-size="5.2" fill="#b4b4b4" text-anchor="middle" font-weight="normal" >D</text><text x="490.10" y="345.10" font-size="5.2" fill="#b4b4b4" text-anchor="middle" font-weight="normal" >M</text><text x="501.10" y="345.10" font-size="5.2" fill="#b4b4b4" text-anchor="middle" font-weight="normal" >L</text><text x="512.10" y="345.10" font-size="5.2" fill="#b4b4b4" text-anchor="middle" font-weight="normal" >D</text><text x="523.10" y="345.10" font-size="5.2" fill="#b4b4b4" text-anchor="middle" font-weight="normal" >M</text><text x="534.10" y="345.10" font-size="5.2" fill="#b4b4b4" text-anchor="middle" font-weight="normal" >L</text><text x="545.10" y="345.10" font-size="5.2" fill="#b4b4b4" text-anchor="middle" font-weight="normal" >D</text><text x="556.10" y="345.10" font-size="5.2" fill="#b4b4b4" text-anchor="middle" font-weight="normal" >M</text><text x="567.10" y="345.10" font-size="5.2" fill="#b4b4b4" text-anchor="middle" font-weight="normal" >L</text><text x="578.10" y="345.10" font-size="5.2" fill="#b4b4b4" text-anchor="middle" font-weight="normal" >D</text><text x="589.10" y="345.10" font-size="5.2" fill="#b4b4b4" text-anchor="middle" font-weight="normal" >M</text><text x="600.10" y="345.10" font-size="5.2" fill="#b4b4b4" text-anchor="middle" font-weight="normal" >L</text><text x="611.10" y="345.10" font-size="5.2" fill="#b4b4b4" text-anchor="middle" font-weight="normal" >D</text><text x="622.10" y="345.10" font-size="5.2" fill="#b4b4b4" text-anchor="middle" font-weight="normal" >M</text><text x="633.10" y="345.10" font-size="5.2" fill="#b4b4b4" text-anchor="middle" font-weight="normal" >L</text><text x="644.10" y="345.10" font-size="5.2" fill="#b4b4b4" text-anchor="middle" font-weight="normal" >D</text><text x="655.10" y="345.10" font-size="5.2" fill="#b4b4b4" text-anchor="middle" font-weight="normal" >M</text><text x="666.10" y="345.10" font-size="5.2" fill="#b4b4b4" text-anchor="middle" font-weight="normal" >L</text><text x="677.10" y="345.10" font-size="5.2" fill="#b4b4b4" text-anchor="middle" font-weight="normal" >D</text><text x="688.10" y="345.10" font-size="5.2" fill="#b4b4b4" text-anchor="middle" font-weight="normal" >M</text><text x="699.10" y="345.10" font-size="5.2" fill="#b4b4b4" text-anchor="middle" font-weight="normal" >L</text><text x="710.10" y="345.10" font-size="5.2" fill="#b4b4b4" text-anchor="middle" font-weight="normal" >D</text><rect x="188.00" y="349.40" width="11.00" height="10.70" fill="#ffffff"/><rect x="188.00" y="370.80" width="11.00" height="10.70" fill="#e0f0d6"/><rect x="188.00" y="381.50" width="11.00" height="10.70" fill="#d8d8d8"/><rect x="188.00" y="413.60" width="11.00" height="10.70" fill="#d8d8d8"/><rect x="199.00" y="349.40" width="11.00" height="10.70" fill="#ffffff"/><rect x="199.00" y="370.80" width="11.00" height="10.70" fill="#e0f0d6"/><rect x="199.00" y="413.60" width="11.00" height="10.70" fill="#d8d8d8"/><rect x="210.00" y="349.40" width="11.00" height="10.70" fill="#ffffff"/><rect x="210.00" y="370.80" width="11.00" height="10.70" fill="#e0f0d6"/><rect x="210.00" y="381.50" width="11.00" height="10.70" fill="#d8d8d8"/><rect x="210.00" y="413.60" width="11.00" height="10.70" fill="#d8d8d8"/><rect x="221.00" y="349.40" width="11.00" height="10.70" fill="#f5dde3"/><rect x="221.00" y="370.80" width="11.00" height="10.70" fill="#e0f0d6"/><rect x="221.00" y="381.50" width="11.00" height="10.70" fill="#d8d8d8"/><rect x="221.00" y="413.60" width="11.00" height="10.70" fill="#d8d8d8"/><rect x="232.00" y="349.40" width="11.00" height="10.70" fill="#f5dde3"/><rect x="232.00" y="370.80" width="11.00" height="10.70" fill="#ffffff"/><rect x="232.00" y="413.60" width="11.00" height="10.70" fill="#d8d8d8"/><rect x="243.00" y="349.40" width="11.00" height="10.70" fill="#e0f0d6"/><rect x="243.00" y="370.80" width="11.00" height="10.70" fill="#e0f0d6"/><rect x="243.00" y="381.50" width="11.00" height="10.70" fill="#d8d8d8"/><rect x="243.00" y="413.60" width="11.00" height="10.70" fill="#d8d8d8"/><rect x="254.00" y="349.40" width="11.00" height="10.70" fill="#ffffff"/><rect x="254.00" y="370.80" width="11.00" height="10.70" fill="#e0f0d6"/><rect x="254.00" y="381.50" width="11.00" height="10.70" fill="#d8d8d8"/><rect x="254.00" y="413.60" width="11.00" height="10.70" fill="#d8d8d8"/><rect x="265.00" y="349.40" width="11.00" height="10.70" fill="#ffffff"/><rect x="265.00" y="370.80" width="11.00" height="10.70" fill="#e0f0d6"/><rect x="265.00" y="413.60" width="11.00" height="10.70" fill="#d8d8d8"/><rect x="276.00" y="349.40" width="11.00" height="10.70" fill="#f5dde3"/><rect x="276.00" y="370.80" width="11.00" height="10.70" fill="#f5dde3"/><rect x="276.00" y="381.50" width="11.00" height="10.70" fill="#d8d8d8"/><rect x="276.00" y="413.60" width="11.00" height="10.70" fill="#d8d8d8"/><rect x="287.00" y="349.40" width="11.00" height="10.70" fill="#e0f0d6"/><rect x="287.00" y="370.80" width="11.00" height="10.70" fill="#e0f0d6"/><rect x="287.00" y="381.50" width="11.00" height="10.70" fill="#d8d8d8"/><rect x="287.00" y="413.60" width="11.00" height="10.70" fill="#d8d8d8"/><rect x="298.00" y="349.40" width="11.00" height="10.70" fill="#f5dde3"/><rect x="298.00" y="370.80" width="11.00" height="10.70" fill="#ffffff"/><rect x="298.00" y="381.50" width="11.00" height="10.70" fill="#d8d8d8"/><rect x="298.00" y="413.60" width="11.00" height="10.70" fill="#d8d8d8"/><rect x="309.00" y="349.40" width="11.00" height="10.70" fill="#f5dde3"/><rect x="309.00" y="370.80" width="11.00" height="10.70" fill="#e0f0d6"/><rect x="309.00" y="381.50" width="11.00" height="10.70" fill="#d8d8d8"/><rect x="309.00" y="413.60" width="11.00" height="10.70" fill="#d8d8d8"/><rect x="320.00" y="349.40" width="11.00" height="10.70" fill="#f5dde3"/><rect x="320.00" y="370.80" width="11.00" height="10.70" fill="#ffffff"/><rect x="320.00" y="381.50" width="11.00" height="10.70" fill="#d8d8d8"/><rect x="320.00" y="413.60" width="11.00" height="10.70" fill="#d8d8d8"/><rect x="331.00" y="349.40" width="11.00" height="10.70" fill="#e0f0d6"/><rect x="331.00" y="370.80" width="11.00" height="10.70" fill="#e0f0d6"/><rect x="331.00" y="381.50" width="11.00" height="10.70" fill="#d8d8d8"/><rect x="331.00" y="413.60" width="11.00" height="10.70" fill="#d8d8d8"/><rect x="342.00" y="349.40" width="11.00" height="10.70" fill="#f5dde3"/><rect x="342.00" y="370.80" width="11.00" height="10.70" fill="#ffffff"/><rect x="342.00" y="381.50" width="11.00" height="10.70" fill="#d8d8d8"/><rect x="342.00" y="413.60" width="11.00" height="10.70" fill="#d8d8d8"/><rect x="353.00" y="349.40" width="11.00" height="10.70" fill="#e0f0d6"/><rect x="353.00" y="370.80" width="11.00" height="10.70" fill="#e0f0d6"/><rect x="353.00" y="381.50" width="11.00" height="10.70" fill="#d8d8d8"/><rect x="353.00" y="413.60" width="11.00" height="10.70" fill="#d8d8d8"/><rect x="364.00" y="349.40" width="11.00" height="10.70" fill="#f5dde3"/><rect x="364.00" y="370.80" width="11.00" height="10.70" fill="#ffffff"/><rect x="364.00" y="381.50" width="11.00" height="10.70" fill="#d8d8d8"/><rect x="364.00" y="413.60" width="11.00" height="10.70" fill="#d8d8d8"/><rect x="375.00" y="349.40" width="11.00" height="10.70" fill="#f5dde3"/><rect x="375.00" y="370.80" width="11.00" height="10.70" fill="#e0f0d6"/><rect x="375.00" y="381.50" width="11.00" height="10.70" fill="#d8d8d8"/><rect x="375.00" y="413.60" width="11.00" height="10.70" fill="#d8d8d8"/><rect x="386.00" y="349.40" width="11.00" height="10.70" fill="#f5dde3"/><rect x="386.00" y="370.80" width="11.00" height="10.70" fill="#ffffff"/><rect x="386.00" y="381.50" width="11.00" height="10.70" fill="#d8d8d8"/><rect x="386.00" y="413.60" width="11.00" height="10.70" fill="#d8d8d8"/><rect x="397.00" y="349.40" width="11.00" height="10.70" fill="#f5dde3"/><rect x="397.00" y="370.80" width="11.00" height="10.70" fill="#e0f0d6"/><rect x="397.00" y="381.50" width="11.00" height="10.70" fill="#d8d8d8"/><rect x="397.00" y="413.60" width="11.00" height="10.70" fill="#d8d8d8"/><rect x="408.00" y="349.40" width="11.00" height="10.70" fill="#f5dde3"/><rect x="408.00" y="370.80" width="11.00" height="10.70" fill="#ffffff"/><rect x="408.00" y="381.50" width="11.00" height="10.70" fill="#d8d8d8"/><rect x="408.00" y="413.60" width="11.00" height="10.70" fill="#d8d8d8"/><rect x="419.00" y="349.40" width="11.00" height="10.70" fill="#e0f0d6"/><rect x="419.00" y="370.80" width="11.00" height="10.70" fill="#e0f0d6"/><rect x="419.00" y="381.50" width="11.00" height="10.70" fill="#d8d8d8"/><rect x="419.00" y="413.60" width="11.00" height="10.70" fill="#d8d8d8"/><rect x="430.00" y="349.40" width="11.00" height="10.70" fill="#f5dde3"/><rect x="430.00" y="370.80" width="11.00" height="10.70" fill="#e0f0d6"/><rect x="430.00" y="381.50" width="11.00" height="10.70" fill="#d8d8d8"/><rect x="430.00" y="413.60" width="11.00" height="10.70" fill="#d8d8d8"/><rect x="441.00" y="349.40" width="11.00" height="10.70" fill="#ffffff"/><rect x="441.00" y="370.80" width="11.00" height="10.70" fill="#e0f0d6"/><rect x="441.00" y="381.50" width="11.00" height="10.70" fill="#d8d8d8"/><rect x="441.00" y="413.60" width="11.00" height="10.70" fill="#d8d8d8"/><rect x="452.00" y="349.40" width="11.00" height="10.70" fill="#e0f0d6"/><rect x="452.00" y="370.80" width="11.00" height="10.70" fill="#e0f0d6"/><rect x="452.00" y="381.50" width="11.00" height="10.70" fill="#d8d8d8"/><rect x="452.00" y="413.60" width="11.00" height="10.70" fill="#d8d8d8"/><rect x="463.00" y="349.40" width="11.00" height="10.70" fill="#ffffff"/><rect x="463.00" y="370.80" width="11.00" height="10.70" fill="#e0f0d6"/><rect x="463.00" y="381.50" width="11.00" height="10.70" fill="#d8d8d8"/><rect x="463.00" y="413.60" width="11.00" height="10.70" fill="#d8d8d8"/><rect x="474.00" y="349.40" width="11.00" height="10.70" fill="#e0f0d6"/><rect x="474.00" y="370.80" width="11.00" height="10.70" fill="#e0f0d6"/><rect x="474.00" y="381.50" width="11.00" height="10.70" fill="#d8d8d8"/><rect x="474.00" y="413.60" width="11.00" height="10.70" fill="#d8d8d8"/><rect x="485.00" y="349.40" width="11.00" height="10.70" fill="#ffffff"/><rect x="485.00" y="370.80" width="11.00" height="10.70" fill="#e0f0d6"/><rect x="485.00" y="381.50" width="11.00" height="10.70" fill="#d8d8d8"/><rect x="485.00" y="413.60" width="11.00" height="10.70" fill="#d8d8d8"/><rect x="496.00" y="349.40" width="11.00" height="10.70" fill="#ffffff"/><rect x="496.00" y="370.80" width="11.00" height="10.70" fill="#e0f0d6"/><rect x="496.00" y="381.50" width="11.00" height="10.70" fill="#d8d8d8"/><rect x="496.00" y="413.60" width="11.00" height="10.70" fill="#d8d8d8"/><rect x="507.00" y="349.40" width="11.00" height="10.70" fill="#ffffff"/><rect x="507.00" y="370.80" width="11.00" height="10.70" fill="#e0f0d6"/><rect x="507.00" y="381.50" width="11.00" height="10.70" fill="#d8d8d8"/><rect x="507.00" y="413.60" width="11.00" height="10.70" fill="#d8d8d8"/><rect x="518.00" y="349.40" width="11.00" height="10.70" fill="#e0f0d6"/><rect x="518.00" y="370.80" width="11.00" height="10.70" fill="#e0f0d6"/><rect x="518.00" y="381.50" width="11.00" height="10.70" fill="#d8d8d8"/><rect x="518.00" y="413.60" width="11.00" height="10.70" fill="#d8d8d8"/><rect x="529.00" y="349.40" width="11.00" height="10.70" fill="#e0f0d6"/><rect x="529.00" y="370.80" width="11.00" height="10.70" fill="#e0f0d6"/><rect x="529.00" y="381.50" width="11.00" height="10.70" fill="#d8d8d8"/><rect x="529.00" y="413.60" width="11.00" height="10.70" fill="#d8d8d8"/><rect x="540.00" y="349.40" width="11.00" height="10.70" fill="#f5dde3"/><rect x="540.00" y="370.80" width="11.00" height="10.70" fill="#e0f0d6"/><rect x="540.00" y="381.50" width="11.00" height="10.70" fill="#d8d8d8"/><rect x="540.00" y="413.60" width="11.00" height="10.70" fill="#d8d8d8"/><rect x="551.00" y="349.40" width="11.00" height="10.70" fill="#e0f0d6"/><rect x="551.00" y="370.80" width="11.00" height="10.70" fill="#e0f0d6"/><rect x="551.00" y="381.50" width="11.00" height="10.70" fill="#d8d8d8"/><rect x="551.00" y="413.60" width="11.00" height="10.70" fill="#d8d8d8"/><rect x="562.00" y="349.40" width="11.00" height="10.70" fill="#ffffff"/><rect x="562.00" y="370.80" width="11.00" height="10.70" fill="#e0f0d6"/><rect x="562.00" y="381.50" width="11.00" height="10.70" fill="#d8d8d8"/><rect x="562.00" y="413.60" width="11.00" height="10.70" fill="#d8d8d8"/><rect x="573.00" y="349.40" width="11.00" height="10.70" fill="#e0f0d6"/><rect x="573.00" y="370.80" width="11.00" height="10.70" fill="#e0f0d6"/><rect x="573.00" y="381.50" width="11.00" height="10.70" fill="#d8d8d8"/><rect x="573.00" y="413.60" width="11.00" height="10.70" fill="#d8d8d8"/><rect x="584.00" y="349.40" width="11.00" height="10.70" fill="#ffffff"/><rect x="584.00" y="370.80" width="11.00" height="10.70" fill="#e0f0d6"/><rect x="584.00" y="381.50" width="11.00" height="10.70" fill="#d8d8d8"/><rect x="584.00" y="413.60" width="11.00" height="10.70" fill="#d8d8d8"/><rect x="595.00" y="349.40" width="11.00" height="10.70" fill="#e0f0d6"/><rect x="595.00" y="370.80" width="11.00" height="10.70" fill="#e0f0d6"/><rect x="595.00" y="381.50" width="11.00" height="10.70" fill="#d8d8d8"/><rect x="595.00" y="413.60" width="11.00" height="10.70" fill="#d8d8d8"/><rect x="606.00" y="349.40" width="11.00" height="10.70" fill="#f5dde3"/><rect x="606.00" y="370.80" width="11.00" height="10.70" fill="#e0f0d6"/><rect x="606.00" y="381.50" width="11.00" height="10.70" fill="#d8d8d8"/><rect x="606.00" y="413.60" width="11.00" height="10.70" fill="#d8d8d8"/><rect x="617.00" y="349.40" width="11.00" height="10.70" fill="#f5dde3"/><rect x="617.00" y="370.80" width="11.00" height="10.70" fill="#e0f0d6"/><rect x="617.00" y="381.50" width="11.00" height="10.70" fill="#d8d8d8"/><rect x="617.00" y="413.60" width="11.00" height="10.70" fill="#d8d8d8"/><rect x="628.00" y="349.40" width="11.00" height="10.70" fill="#f5dde3"/><rect x="628.00" y="370.80" width="11.00" height="10.70" fill="#e0f0d6"/><rect x="628.00" y="413.60" width="11.00" height="10.70" fill="#d8d8d8"/><rect x="639.00" y="349.40" width="11.00" height="10.70" fill="#e0f0d6"/><rect x="639.00" y="370.80" width="11.00" height="10.70" fill="#e0f0d6"/><rect x="639.00" y="381.50" width="11.00" height="10.70" fill="#d8d8d8"/><rect x="639.00" y="413.60" width="11.00" height="10.70" fill="#d8d8d8"/><rect x="650.00" y="349.40" width="11.00" height="10.70" fill="#ffffff"/><rect x="650.00" y="370.80" width="11.00" height="10.70" fill="#e0f0d6"/><rect x="650.00" y="381.50" width="11.00" height="10.70" fill="#d8d8d8"/><rect x="650.00" y="413.60" width="11.00" height="10.70" fill="#d8d8d8"/><rect x="661.00" y="349.40" width="11.00" height="10.70" fill="#ffffff"/><rect x="661.00" y="370.80" width="11.00" height="10.70" fill="#e0f0d6"/><rect x="661.00" y="413.60" width="11.00" height="10.70" fill="#d8d8d8"/><rect x="672.00" y="349.40" width="11.00" height="10.70" fill="#ffffff"/><rect x="672.00" y="370.80" width="11.00" height="10.70" fill="#e0f0d6"/><rect x="672.00" y="381.50" width="11.00" height="10.70" fill="#d8d8d8"/><rect x="672.00" y="413.60" width="11.00" height="10.70" fill="#d8d8d8"/><rect x="683.00" y="349.40" width="11.00" height="10.70" fill="#ffffff"/><rect x="683.00" y="370.80" width="11.00" height="10.70" fill="#e0f0d6"/><rect x="683.00" y="381.50" width="11.00" height="10.70" fill="#d8d8d8"/><rect x="683.00" y="413.60" width="11.00" height="10.70" fill="#d8d8d8"/><rect x="694.00" y="349.40" width="11.00" height="10.70" fill="#ffffff"/><rect x="694.00" y="370.80" width="11.00" height="10.70" fill="#e0f0d6"/><rect x="694.00" y="413.60" width="11.00" height="10.70" fill="#d8d8d8"/><rect x="705.00" y="349.40" width="11.00" height="10.70" fill="#ffffff"/><rect x="705.00" y="370.80" width="11.00" height="10.70" fill="#e0f0d6"/><rect x="705.00" y="381.50" width="11.00" height="10.70" fill="#d8d8d8"/><rect x="705.00" y="413.60" width="11.00" height="10.70" fill="#d8d8d8"/><line x1="188.00" y1="349.40" x2="716.00" y2="349.40" stroke="#b4b4b4" stroke-width="1"/><line x1="188.00" y1="360.10" x2="716.00" y2="360.10" stroke="#b4b4b4" stroke-width="1"/><line x1="188.00" y1="370.80" x2="716.00" y2="370.80" stroke="#b4b4b4" stroke-width="1"/><line x1="188.00" y1="381.50" x2="716.00" y2="381.50" stroke="#b4b4b4" stroke-width="1"/><line x1="188.00" y1="392.20" x2="716.00" y2="392.20" stroke="#b4b4b4" stroke-width="1"/><line x1="188.00" y1="402.90" x2="716.00" y2="402.90" stroke="#b4b4b4" stroke-width="1"/><line x1="188.00" y1="413.60" x2="716.00" y2="413.60" stroke="#b4b4b4" stroke-width="1"/><line x1="188.00" y1="424.30" x2="716.00" y2="424.30" stroke="#b4b4b4" stroke-width="1"/><line x1="188.00" y1="349.40" x2="188.00" y2="424.30" stroke="#7a7a7a" stroke-width="1"/><line x1="199.00" y1="349.40" x2="199.00" y2="424.30" stroke="#cacaca" stroke-width="1"/><line x1="210.00" y1="349.40" x2="210.00" y2="424.30" stroke="#cacaca" stroke-width="1"/><line x1="221.00" y1="349.40" x2="221.00" y2="424.30" stroke="#7a7a7a" stroke-width="1"/><line x1="232.00" y1="349.40" x2="232.00" y2="424.30" stroke="#cacaca" stroke-width="1"/><line x1="243.00" y1="349.40" x2="243.00" y2="424.30" stroke="#cacaca" stroke-width="1"/><line x1="254.00" y1="349.40" x2="254.00" y2="424.30" stroke="#7a7a7a" stroke-width="1"/><line x1="265.00" y1="349.40" x2="265.00" y2="424.30" stroke="#cacaca" stroke-width="1"/><line x1="276.00" y1="349.40" x2="276.00" y2="424.30" stroke="#cacaca" stroke-width="1"/><line x1="287.00" y1="349.40" x2="287.00" y2="424.30" stroke="#7a7a7a" stroke-width="1"/><line x1="298.00" y1="349.40" x2="298.00" y2="424.30" stroke="#cacaca" stroke-width="1"/><line x1="309.00" y1="349.40" x2="309.00" y2="424.30" stroke="#cacaca" stroke-width="1"/><line x1="320.00" y1="349.40" x2="320.00" y2="424.30" stroke="#7a7a7a" stroke-width="1"/><line x1="331.00" y1="349.40" x2="331.00" y2="424.30" stroke="#cacaca" stroke-width="1"/><line x1="342.00" y1="349.40" x2="342.00" y2="424.30" stroke="#cacaca" stroke-width="1"/><line x1="353.00" y1="349.40" x2="353.00" y2="424.30" stroke="#7a7a7a" stroke-width="1"/><line x1="364.00" y1="349.40" x2="364.00" y2="424.30" stroke="#cacaca" stroke-width="1"/><line x1="375.00" y1="349.40" x2="375.00" y2="424.30" stroke="#cacaca" stroke-width="1"/><line x1="386.00" y1="349.40" x2="386.00" y2="424.30" stroke="#7a7a7a" stroke-width="1"/><line x1="397.00" y1="349.40" x2="397.00" y2="424.30" stroke="#cacaca" stroke-width="1"/><line x1="408.00" y1="349.40" x2="408.00" y2="424.30" stroke="#cacaca" stroke-width="1"/><line x1="419.00" y1="349.40" x2="419.00" y2="424.30" stroke="#7a7a7a" stroke-width="1"/><line x1="430.00" y1="349.40" x2="430.00" y2="424.30" stroke="#cacaca" stroke-width="1"/><line x1="441.00" y1="349.40" x2="441.00" y2="424.30" stroke="#cacaca" stroke-width="1"/><line x1="452.00" y1="349.40" x2="452.00" y2="424.30" stroke="#7a7a7a" stroke-width="1"/><line x1="463.00" y1="349.40" x2="463.00" y2="424.30" stroke="#cacaca" stroke-width="1"/><line x1="474.00" y1="349.40" x2="474.00" y2="424.30" stroke="#cacaca" stroke-width="1"/><line x1="485.00" y1="349.40" x2="485.00" y2="424.30" stroke="#7a7a7a" stroke-width="1"/><line x1="496.00" y1="349.40" x2="496.00" y2="424.30" stroke="#cacaca" stroke-width="1"/><line x1="507.00" y1="349.40" x2="507.00" y2="424.30" stroke="#cacaca" stroke-width="1"/><line x1="518.00" y1="349.40" x2="518.00" y2="424.30" stroke="#7a7a7a" stroke-width="1"/><line x1="529.00" y1="349.40" x2="529.00" y2="424.30" stroke="#cacaca" stroke-width="1"/><line x1="540.00" y1="349.40" x2="540.00" y2="424.30" stroke="#cacaca" stroke-width="1"/><line x1="551.00" y1="349.40" x2="551.00" y2="424.30" stroke="#7a7a7a" stroke-width="1"/><line x1="562.00" y1="349.40" x2="562.00" y2="424.30" stroke="#cacaca" stroke-width="1"/><line x1="573.00" y1="349.40" x2="573.00" y2="424.30" stroke="#cacaca" stroke-width="1"/><line x1="584.00" y1="349.40" x2="584.00" y2="424.30" stroke="#7a7a7a" stroke-width="1"/><line x1="595.00" y1="349.40" x2="595.00" y2="424.30" stroke="#cacaca" stroke-width="1"/><line x1="606.00" y1="349.40" x2="606.00" y2="424.30" stroke="#cacaca" stroke-width="1"/><line x1="617.00" y1="349.40" x2="617.00" y2="424.30" stroke="#7a7a7a" stroke-width="1"/><line x1="628.00" y1="349.40" x2="628.00" y2="424.30" stroke="#cacaca" stroke-width="1"/><line x1="639.00" y1="349.40" x2="639.00" y2="424.30" stroke="#cacaca" stroke-width="1"/><line x1="650.00" y1="349.40" x2="650.00" y2="424.30" stroke="#7a7a7a" stroke-width="1"/><line x1="661.00" y1="349.40" x2="661.00" y2="424.30" stroke="#cacaca" stroke-width="1"/><line x1="672.00" y1="349.40" x2="672.00" y2="424.30" stroke="#cacaca" stroke-width="1"/><line x1="683.00" y1="349.40" x2="683.00" y2="424.30" stroke="#7a7a7a" stroke-width="1"/><line x1="694.00" y1="349.40" x2="694.00" y2="424.30" stroke="#cacaca" stroke-width="1"/><line x1="705.00" y1="349.40" x2="705.00" y2="424.30" stroke="#cacaca" stroke-width="1"/><line x1="716.00" y1="349.40" x2="716.00" y2="424.30" stroke="#7a7a7a" stroke-width="1"/><text x="193.30" y="357.15" font-size="6.8" fill="#222" text-anchor="middle" font-weight="normal" stroke="#222" stroke-width="0.08">1</text><text x="193.30" y="378.55" font-size="6.8" fill="#222" text-anchor="middle" font-weight="normal" stroke="#222" stroke-width="0.08">1</text><text x="204.30" y="357.15" font-size="6.8" fill="#222" text-anchor="middle" font-weight="normal" stroke="#222" stroke-width="0.08">2</text><text x="204.30" y="378.55" font-size="6.8" fill="#222" text-anchor="middle" font-weight="normal" stroke="#222" stroke-width="0.08">2</text><text x="215.30" y="357.15" font-size="6.8" fill="#222" text-anchor="middle" font-weight="normal" stroke="#222" stroke-width="0.08">1</text><text x="215.30" y="378.55" font-size="6.8" fill="#222" text-anchor="middle" font-weight="normal" stroke="#222" stroke-width="0.08">1</text><text x="226.30" y="357.15" font-size="6.8" fill="#222" text-anchor="middle" font-weight="normal" stroke="#222" stroke-width="0.08">3</text><text x="226.30" y="378.55" font-size="6.8" fill="#222" text-anchor="middle" font-weight="normal" stroke="#222" stroke-width="0.08">3</text><text x="237.30" y="357.15" font-size="6.8" fill="#222" text-anchor="middle" font-weight="normal" stroke="#222" stroke-width="0.08">2</text><text x="237.30" y="378.55" font-size="6.8" fill="#222" text-anchor="middle" font-weight="normal" stroke="#222" stroke-width="0.08">2</text><text x="248.30" y="357.15" font-size="6.8" fill="#222" text-anchor="middle" font-weight="normal" stroke="#222" stroke-width="0.08">1</text><text x="248.30" y="378.55" font-size="6.8" fill="#222" text-anchor="middle" font-weight="normal" stroke="#222" stroke-width="0.08">1</text><text x="259.30" y="357.15" font-size="6.8" fill="#222" text-anchor="middle" font-weight="normal" stroke="#222" stroke-width="0.08">1</text><text x="259.30" y="378.55" font-size="6.8" fill="#222" text-anchor="middle" font-weight="normal" stroke="#222" stroke-width="0.08">1</text><text x="270.30" y="357.15" font-size="6.8" fill="#222" text-anchor="middle" font-weight="normal" stroke="#222" stroke-width="0.08">2</text><text x="270.30" y="378.55" font-size="6.8" fill="#222" text-anchor="middle" font-weight="normal" stroke="#222" stroke-width="0.08">2</text><text x="281.30" y="357.15" font-size="6.8" fill="#222" text-anchor="middle" font-weight="normal" stroke="#222" stroke-width="0.08">3</text><text x="281.30" y="378.55" font-size="6.8" fill="#222" text-anchor="middle" font-weight="normal" stroke="#222" stroke-width="0.08">3</text><text x="292.30" y="357.15" font-size="6.8" fill="#222" text-anchor="middle" font-weight="normal" stroke="#222" stroke-width="0.08">1</text><text x="292.30" y="378.55" font-size="6.8" fill="#222" text-anchor="middle" font-weight="normal" stroke="#222" stroke-width="0.08">1</text><text x="303.30" y="357.15" font-size="6.8" fill="#222" text-anchor="middle" font-weight="normal" stroke="#222" stroke-width="0.08">2</text><text x="303.30" y="378.55" font-size="6.8" fill="#222" text-anchor="middle" font-weight="normal" stroke="#222" stroke-width="0.08">2</text><text x="314.30" y="357.15" font-size="6.8" fill="#222" text-anchor="middle" font-weight="normal" stroke="#222" stroke-width="0.08">3</text><text x="314.30" y="378.55" font-size="6.8" fill="#222" text-anchor="middle" font-weight="normal" stroke="#222" stroke-width="0.08">3</text><text x="325.30" y="357.15" font-size="6.8" fill="#222" text-anchor="middle" font-weight="normal" stroke="#222" stroke-width="0.08">2</text><text x="325.30" y="378.55" font-size="6.8" fill="#222" text-anchor="middle" font-weight="normal" stroke="#222" stroke-width="0.08">2</text><text x="336.30" y="357.15" font-size="6.8" fill="#222" text-anchor="middle" font-weight="normal" stroke="#222" stroke-width="0.08">1</text><text x="336.30" y="378.55" font-size="6.8" fill="#222" text-anchor="middle" font-weight="normal" stroke="#222" stroke-width="0.08">1</text><text x="347.30" y="357.15" font-size="6.8" fill="#222" text-anchor="middle" font-weight="normal" stroke="#222" stroke-width="0.08">2</text><text x="347.30" y="378.55" font-size="6.8" fill="#222" text-anchor="middle" font-weight="normal" stroke="#222" stroke-width="0.08">2</text><text x="358.30" y="357.15" font-size="6.8" fill="#222" text-anchor="middle" font-weight="normal" stroke="#222" stroke-width="0.08">1</text><text x="358.30" y="378.55" font-size="6.8" fill="#222" text-anchor="middle" font-weight="normal" stroke="#222" stroke-width="0.08">1</text><text x="369.30" y="357.15" font-size="6.8" fill="#222" text-anchor="middle" font-weight="normal" stroke="#222" stroke-width="0.08">2</text><text x="369.30" y="378.55" font-size="6.8" fill="#222" text-anchor="middle" font-weight="normal" stroke="#222" stroke-width="0.08">2</text><text x="380.30" y="357.15" font-size="6.8" fill="#222" text-anchor="middle" font-weight="normal" stroke="#222" stroke-width="0.08">3</text><text x="380.30" y="378.55" font-size="6.8" fill="#222" text-anchor="middle" font-weight="normal" stroke="#222" stroke-width="0.08">3</text><text x="391.30" y="357.15" font-size="6.8" fill="#222" text-anchor="middle" font-weight="normal" stroke="#222" stroke-width="0.08">2</text><text x="391.30" y="378.55" font-size="6.8" fill="#222" text-anchor="middle" font-weight="normal" stroke="#222" stroke-width="0.08">2</text><text x="402.30" y="357.15" font-size="6.8" fill="#222" text-anchor="middle" font-weight="normal" stroke="#222" stroke-width="0.08">3</text><text x="402.30" y="378.55" font-size="6.8" fill="#222" text-anchor="middle" font-weight="normal" stroke="#222" stroke-width="0.08">3</text><text x="413.30" y="357.15" font-size="6.8" fill="#222" text-anchor="middle" font-weight="normal" stroke="#222" stroke-width="0.08">2</text><text x="413.30" y="378.55" font-size="6.8" fill="#222" text-anchor="middle" font-weight="normal" stroke="#222" stroke-width="0.08">2</text><text x="424.30" y="357.15" font-size="6.8" fill="#222" text-anchor="middle" font-weight="normal" stroke="#222" stroke-width="0.08">1</text><text x="424.30" y="378.55" font-size="6.8" fill="#222" text-anchor="middle" font-weight="normal" stroke="#222" stroke-width="0.08">1</text><text x="435.30" y="357.15" font-size="6.8" fill="#222" text-anchor="middle" font-weight="normal" stroke="#222" stroke-width="0.08">2</text><text x="435.30" y="378.55" font-size="6.8" fill="#222" text-anchor="middle" font-weight="normal" stroke="#222" stroke-width="0.08">2</text><text x="446.30" y="357.15" font-size="6.8" fill="#222" text-anchor="middle" font-weight="normal" stroke="#222" stroke-width="0.08">2</text><text x="446.30" y="378.55" font-size="6.8" fill="#222" text-anchor="middle" font-weight="normal" stroke="#222" stroke-width="0.08">2</text><text x="457.30" y="357.15" font-size="6.8" fill="#222" text-anchor="middle" font-weight="normal" stroke="#222" stroke-width="0.08">1</text><text x="457.30" y="378.55" font-size="6.8" fill="#222" text-anchor="middle" font-weight="normal" stroke="#222" stroke-width="0.08">1</text><text x="468.30" y="357.15" font-size="6.8" fill="#222" text-anchor="middle" font-weight="normal" stroke="#222" stroke-width="0.08">1</text><text x="468.30" y="378.55" font-size="6.8" fill="#222" text-anchor="middle" font-weight="normal" stroke="#222" stroke-width="0.08">1</text><text x="479.30" y="357.15" font-size="6.8" fill="#222" text-anchor="middle" font-weight="normal" stroke="#222" stroke-width="0.08">1</text><text x="479.30" y="378.55" font-size="6.8" fill="#222" text-anchor="middle" font-weight="normal" stroke="#222" stroke-width="0.08">1</text><text x="490.30" y="357.15" font-size="6.8" fill="#222" text-anchor="middle" font-weight="normal" stroke="#222" stroke-width="0.08">1</text><text x="490.30" y="378.55" font-size="6.8" fill="#222" text-anchor="middle" font-weight="normal" stroke="#222" stroke-width="0.08">1</text><text x="501.30" y="357.15" font-size="6.8" fill="#222" text-anchor="middle" font-weight="normal" stroke="#222" stroke-width="0.08">2</text><text x="501.30" y="378.55" font-size="6.8" fill="#222" text-anchor="middle" font-weight="normal" stroke="#222" stroke-width="0.08">2</text><text x="512.30" y="357.15" font-size="6.8" fill="#222" text-anchor="middle" font-weight="normal" stroke="#222" stroke-width="0.08">1</text><text x="512.30" y="378.55" font-size="6.8" fill="#222" text-anchor="middle" font-weight="normal" stroke="#222" stroke-width="0.08">1</text><text x="523.30" y="357.15" font-size="6.8" fill="#222" text-anchor="middle" font-weight="normal" stroke="#222" stroke-width="0.08">2</text><text x="523.30" y="378.55" font-size="6.8" fill="#222" text-anchor="middle" font-weight="normal" stroke="#222" stroke-width="0.08">2</text><text x="534.30" y="357.15" font-size="6.8" fill="#222" text-anchor="middle" font-weight="normal" stroke="#222" stroke-width="0.08">1</text><text x="534.30" y="378.55" font-size="6.8" fill="#222" text-anchor="middle" font-weight="normal" stroke="#222" stroke-width="0.08">1</text><text x="545.30" y="357.15" font-size="6.8" fill="#222" text-anchor="middle" font-weight="normal" stroke="#222" stroke-width="0.08">2</text><text x="545.30" y="378.55" font-size="6.8" fill="#222" text-anchor="middle" font-weight="normal" stroke="#222" stroke-width="0.08">2</text><text x="556.30" y="357.15" font-size="6.8" fill="#222" text-anchor="middle" font-weight="normal" stroke="#222" stroke-width="0.08">1</text><text x="556.30" y="378.55" font-size="6.8" fill="#222" text-anchor="middle" font-weight="normal" stroke="#222" stroke-width="0.08">1</text><text x="567.30" y="357.15" font-size="6.8" fill="#222" text-anchor="middle" font-weight="normal" stroke="#222" stroke-width="0.08">1</text><text x="567.30" y="378.55" font-size="6.8" fill="#222" text-anchor="middle" font-weight="normal" stroke="#222" stroke-width="0.08">1</text><text x="578.30" y="357.15" font-size="6.8" fill="#222" text-anchor="middle" font-weight="normal" stroke="#222" stroke-width="0.08">1</text><text x="578.30" y="378.55" font-size="6.8" fill="#222" text-anchor="middle" font-weight="normal" stroke="#222" stroke-width="0.08">1</text><text x="589.30" y="357.15" font-size="6.8" fill="#222" text-anchor="middle" font-weight="normal" stroke="#222" stroke-width="0.08">1</text><text x="589.30" y="378.55" font-size="6.8" fill="#222" text-anchor="middle" font-weight="normal" stroke="#222" stroke-width="0.08">1</text><text x="600.30" y="357.15" font-size="6.8" fill="#222" text-anchor="middle" font-weight="normal" stroke="#222" stroke-width="0.08">1</text><text x="600.30" y="378.55" font-size="6.8" fill="#222" text-anchor="middle" font-weight="normal" stroke="#222" stroke-width="0.08">1</text><text x="611.30" y="357.15" font-size="6.8" fill="#222" text-anchor="middle" font-weight="normal" stroke="#222" stroke-width="0.08">3</text><text x="611.30" y="378.55" font-size="6.8" fill="#222" text-anchor="middle" font-weight="normal" stroke="#222" stroke-width="0.08">3</text><text x="622.30" y="357.15" font-size="6.8" fill="#222" text-anchor="middle" font-weight="normal" stroke="#222" stroke-width="0.08">3</text><text x="622.30" y="378.55" font-size="6.8" fill="#222" text-anchor="middle" font-weight="normal" stroke="#222" stroke-width="0.08">3</text><text x="633.30" y="357.15" font-size="6.8" fill="#222" text-anchor="middle" font-weight="normal" stroke="#222" stroke-width="0.08">2</text><text x="633.30" y="378.55" font-size="6.8" fill="#222" text-anchor="middle" font-weight="normal" stroke="#222" stroke-width="0.08">2</text><text x="644.30" y="357.15" font-size="6.8" fill="#222" text-anchor="middle" font-weight="normal" stroke="#222" stroke-width="0.08">1</text><text x="644.30" y="378.55" font-size="6.8" fill="#222" text-anchor="middle" font-weight="normal" stroke="#222" stroke-width="0.08">1</text><text x="655.30" y="357.15" font-size="6.8" fill="#222" text-anchor="middle" font-weight="normal" stroke="#222" stroke-width="0.08">2</text><text x="655.30" y="378.55" font-size="6.8" fill="#222" text-anchor="middle" font-weight="normal" stroke="#222" stroke-width="0.08">2</text><text x="666.30" y="357.15" font-size="6.8" fill="#222" text-anchor="middle" font-weight="normal" stroke="#222" stroke-width="0.08">1</text><text x="666.30" y="378.55" font-size="6.8" fill="#222" text-anchor="middle" font-weight="normal" stroke="#222" stroke-width="0.08">1</text><text x="677.30" y="357.15" font-size="6.8" fill="#222" text-anchor="middle" font-weight="normal" stroke="#222" stroke-width="0.08">2</text><text x="677.30" y="378.55" font-size="6.8" fill="#222" text-anchor="middle" font-weight="normal" stroke="#222" stroke-width="0.08">2</text><text x="688.30" y="357.15" font-size="6.8" fill="#222" text-anchor="middle" font-weight="normal" stroke="#222" stroke-width="0.08">1</text><text x="688.30" y="378.55" font-size="6.8" fill="#222" text-anchor="middle" font-weight="normal" stroke="#222" stroke-width="0.08">1</text><text x="699.30" y="357.15" font-size="6.8" fill="#222" text-anchor="middle" font-weight="normal" stroke="#222" stroke-width="0.08">2</text><text x="699.30" y="378.55" font-size="6.8" fill="#222" text-anchor="middle" font-weight="normal" stroke="#222" stroke-width="0.08">2</text><text x="710.30" y="357.15" font-size="6.8" fill="#222" text-anchor="middle" font-weight="normal" stroke="#222" stroke-width="0.08">1</text><text x="710.30" y="378.55" font-size="6.8" fill="#222" text-anchor="middle" font-weight="normal" stroke="#222" stroke-width="0.08">1</text><text x="183.90" y="356.05" font-size="5.3" fill="#333" text-anchor="end" font-weight="normal" stroke="#333" stroke-width="0.15">PD</text><text x="183.90" y="366.75" font-size="5.3" fill="#333" text-anchor="end" font-weight="normal" stroke="#333" stroke-width="0.15">GM</text><text x="183.90" y="377.45" font-size="5.3" fill="#333" text-anchor="end" font-weight="normal" stroke="#333" stroke-width="0.15">CAL</text><text x="183.90" y="388.15" font-size="5.3" fill="#333" text-anchor="end" font-weight="normal" stroke="#333" stroke-width="0.15">Furc</text><text x="183.90" y="398.85" font-size="5.3" fill="#333" text-anchor="end" font-weight="normal" stroke="#333" stroke-width="0.15">Bleed</text><text x="183.90" y="409.55" font-size="5.3" fill="#333" text-anchor="end" font-weight="normal" stroke="#333" stroke-width="0.15">Sup</text><text x="183.90" y="420.25" font-size="5.3" fill="#333" text-anchor="end" font-weight="normal" stroke="#333" stroke-width="0.15">Mob</text><line x1="188.00" y1="424.30" x2="188.00" y2="442.90" stroke="#7a7a7a" stroke-width="1"/><line x1="221.00" y1="424.30" x2="221.00" y2="442.90" stroke="#7a7a7a" stroke-width="1"/><text x="204.50" y="437.00" font-size="9.4" fill="#3a7bb5" text-anchor="middle" font-weight="normal" stroke="#3a7bb5" stroke-width="0.2">32</text><line x1="254.00" y1="424.30" x2="254.00" y2="442.90" stroke="#7a7a7a" stroke-width="1"/><text x="237.50" y="437.00" font-size="9.4" fill="#3a7bb5" text-anchor="middle" font-weight="normal" stroke="#3a7bb5" stroke-width="0.2">31</text><line x1="287.00" y1="424.30" x2="287.00" y2="442.90" stroke="#7a7a7a" stroke-width="1"/><text x="270.50" y="437.00" font-size="9.4" fill="#3a7bb5" text-anchor="middle" font-weight="normal" stroke="#3a7bb5" stroke-width="0.2">30</text><line x1="320.00" y1="424.30" x2="320.00" y2="442.90" stroke="#7a7a7a" stroke-width="1"/><text x="303.50" y="437.00" font-size="9.4" fill="#3a7bb5" text-anchor="middle" font-weight="normal" stroke="#3a7bb5" stroke-width="0.2">29</text><line x1="353.00" y1="424.30" x2="353.00" y2="442.90" stroke="#7a7a7a" stroke-width="1"/><text x="336.50" y="437.00" font-size="9.4" fill="#3a7bb5" text-anchor="middle" font-weight="normal" stroke="#3a7bb5" stroke-width="0.2">28</text><line x1="386.00" y1="424.30" x2="386.00" y2="442.90" stroke="#7a7a7a" stroke-width="1"/><text x="369.50" y="437.00" font-size="9.4" fill="#3a7bb5" text-anchor="middle" font-weight="normal" stroke="#3a7bb5" stroke-width="0.2">27</text><line x1="419.00" y1="424.30" x2="419.00" y2="442.90" stroke="#7a7a7a" stroke-width="1"/><text x="402.50" y="437.00" font-size="9.4" fill="#3a7bb5" text-anchor="middle" font-weight="normal" stroke="#3a7bb5" stroke-width="0.2">26</text><line x1="452.00" y1="424.30" x2="452.00" y2="442.90" stroke="#7a7a7a" stroke-width="1"/><text x="435.50" y="437.00" font-size="9.4" fill="#3a7bb5" text-anchor="middle" font-weight="normal" stroke="#3a7bb5" stroke-width="0.2">25</text><line x1="485.00" y1="424.30" x2="485.00" y2="442.90" stroke="#7a7a7a" stroke-width="1"/><text x="468.50" y="437.00" font-size="9.4" fill="#3a7bb5" text-anchor="middle" font-weight="normal" stroke="#3a7bb5" stroke-width="0.2">24</text><line x1="518.00" y1="424.30" x2="518.00" y2="442.90" stroke="#7a7a7a" stroke-width="1"/><text x="501.50" y="437.00" font-size="9.4" fill="#3a7bb5" text-anchor="middle" font-weight="normal" stroke="#3a7bb5" stroke-width="0.2">23</text><line x1="551.00" y1="424.30" x2="551.00" y2="442.90" stroke="#7a7a7a" stroke-width="1"/><text x="534.50" y="437.00" font-size="9.4" fill="#3a7bb5" text-anchor="middle" font-weight="normal" stroke="#3a7bb5" stroke-width="0.2">22</text><line x1="584.00" y1="424.30" x2="584.00" y2="442.90" stroke="#7a7a7a" stroke-width="1"/><text x="567.50" y="437.00" font-size="9.4" fill="#3a7bb5" text-anchor="middle" font-weight="normal" stroke="#3a7bb5" stroke-width="0.2">21</text><line x1="617.00" y1="424.30" x2="617.00" y2="442.90" stroke="#7a7a7a" stroke-width="1"/><text x="600.50" y="437.00" font-size="9.4" fill="#3a7bb5" text-anchor="middle" font-weight="normal" stroke="#3a7bb5" stroke-width="0.2">20</text><line x1="650.00" y1="424.30" x2="650.00" y2="442.90" stroke="#7a7a7a" stroke-width="1"/><text x="633.50" y="437.00" font-size="9.4" fill="#3a7bb5" text-anchor="middle" font-weight="normal" stroke="#3a7bb5" stroke-width="0.2">19</text><line x1="683.00" y1="424.30" x2="683.00" y2="442.90" stroke="#7a7a7a" stroke-width="1"/><text x="666.50" y="437.00" font-size="9.4" fill="#3a7bb5" text-anchor="middle" font-weight="normal" stroke="#3a7bb5" stroke-width="0.2">18</text><line x1="716.00" y1="424.30" x2="716.00" y2="442.90" stroke="#7a7a7a" stroke-width="1"/><text x="699.50" y="437.00" font-size="9.4" fill="#3a7bb5" text-anchor="middle" font-weight="normal" stroke="#3a7bb5" stroke-width="0.2">17</text><rect x="188.00" y="442.90" width="11.00" height="10.70" fill="#ffffff"/><rect x="188.00" y="464.30" width="11.00" height="10.70" fill="#e0f0d6"/><rect x="188.00" y="475.00" width="11.00" height="10.70" fill="#d8d8d8"/><rect x="188.00" y="507.10" width="11.00" height="10.70" fill="#d8d8d8"/><rect x="199.00" y="442.90" width="11.00" height="10.70" fill="#ffffff"/><rect x="199.00" y="464.30" width="11.00" height="10.70" fill="#e0f0d6"/><rect x="210.00" y="442.90" width="11.00" height="10.70" fill="#ffffff"/><rect x="210.00" y="464.30" width="11.00" height="10.70" fill="#e0f0d6"/><rect x="210.00" y="475.00" width="11.00" height="10.70" fill="#d8d8d8"/><rect x="210.00" y="507.10" width="11.00" height="10.70" fill="#d8d8d8"/><rect x="221.00" y="442.90" width="11.00" height="10.70" fill="#ffffff"/><rect x="221.00" y="464.30" width="11.00" height="10.70" fill="#e0f0d6"/><rect x="221.00" y="475.00" width="11.00" height="10.70" fill="#d8d8d8"/><rect x="221.00" y="507.10" width="11.00" height="10.70" fill="#d8d8d8"/><rect x="232.00" y="442.90" width="11.00" height="10.70" fill="#ffffff"/><rect x="232.00" y="464.30" width="11.00" height="10.70" fill="#e0f0d6"/><rect x="243.00" y="442.90" width="11.00" height="10.70" fill="#ffffff"/><rect x="243.00" y="464.30" width="11.00" height="10.70" fill="#e0f0d6"/><rect x="243.00" y="475.00" width="11.00" height="10.70" fill="#d8d8d8"/><rect x="243.00" y="507.10" width="11.00" height="10.70" fill="#d8d8d8"/><rect x="254.00" y="442.90" width="11.00" height="10.70" fill="#ffffff"/><rect x="254.00" y="464.30" width="11.00" height="10.70" fill="#e0f0d6"/><rect x="254.00" y="475.00" width="11.00" height="10.70" fill="#d8d8d8"/><rect x="254.00" y="507.10" width="11.00" height="10.70" fill="#d8d8d8"/><rect x="265.00" y="442.90" width="11.00" height="10.70" fill="#ffffff"/><rect x="265.00" y="464.30" width="11.00" height="10.70" fill="#e0f0d6"/><rect x="276.00" y="442.90" width="11.00" height="10.70" fill="#ffffff"/><rect x="276.00" y="464.30" width="11.00" height="10.70" fill="#e0f0d6"/><rect x="276.00" y="475.00" width="11.00" height="10.70" fill="#d8d8d8"/><rect x="276.00" y="507.10" width="11.00" height="10.70" fill="#d8d8d8"/><rect x="287.00" y="442.90" width="11.00" height="10.70" fill="#ffffff"/><rect x="287.00" y="464.30" width="11.00" height="10.70" fill="#e0f0d6"/><rect x="287.00" y="475.00" width="11.00" height="10.70" fill="#d8d8d8"/><rect x="287.00" y="507.10" width="11.00" height="10.70" fill="#d8d8d8"/><rect x="298.00" y="442.90" width="11.00" height="10.70" fill="#ffffff"/><rect x="298.00" y="464.30" width="11.00" height="10.70" fill="#e0f0d6"/><rect x="298.00" y="475.00" width="11.00" height="10.70" fill="#d8d8d8"/><rect x="309.00" y="442.90" width="11.00" height="10.70" fill="#ffffff"/><rect x="309.00" y="464.30" width="11.00" height="10.70" fill="#e0f0d6"/><rect x="309.00" y="475.00" width="11.00" height="10.70" fill="#d8d8d8"/><rect x="309.00" y="507.10" width="11.00" height="10.70" fill="#d8d8d8"/><rect x="320.00" y="442.90" width="11.00" height="10.70" fill="#ffffff"/><rect x="320.00" y="464.30" width="11.00" height="10.70" fill="#e0f0d6"/><rect x="320.00" y="475.00" width="11.00" height="10.70" fill="#d8d8d8"/><rect x="320.00" y="507.10" width="11.00" height="10.70" fill="#d8d8d8"/><rect x="331.00" y="442.90" width="11.00" height="10.70" fill="#ffffff"/><rect x="331.00" y="464.30" width="11.00" height="10.70" fill="#e0f0d6"/><rect x="331.00" y="475.00" width="11.00" height="10.70" fill="#d8d8d8"/><rect x="342.00" y="442.90" width="11.00" height="10.70" fill="#ffffff"/><rect x="342.00" y="464.30" width="11.00" height="10.70" fill="#e0f0d6"/><rect x="342.00" y="475.00" width="11.00" height="10.70" fill="#d8d8d8"/><rect x="342.00" y="507.10" width="11.00" height="10.70" fill="#d8d8d8"/><rect x="353.00" y="442.90" width="11.00" height="10.70" fill="#ffffff"/><rect x="353.00" y="464.30" width="11.00" height="10.70" fill="#e0f0d6"/><rect x="353.00" y="475.00" width="11.00" height="10.70" fill="#d8d8d8"/><rect x="353.00" y="507.10" width="11.00" height="10.70" fill="#d8d8d8"/><rect x="364.00" y="442.90" width="11.00" height="10.70" fill="#ffffff"/><rect x="364.00" y="464.30" width="11.00" height="10.70" fill="#e0f0d6"/><rect x="364.00" y="475.00" width="11.00" height="10.70" fill="#d8d8d8"/><rect x="375.00" y="442.90" width="11.00" height="10.70" fill="#ffffff"/><rect x="375.00" y="464.30" width="11.00" height="10.70" fill="#e0f0d6"/><rect x="375.00" y="475.00" width="11.00" height="10.70" fill="#d8d8d8"/><rect x="375.00" y="507.10" width="11.00" height="10.70" fill="#d8d8d8"/><rect x="386.00" y="442.90" width="11.00" height="10.70" fill="#ffffff"/><rect x="386.00" y="464.30" width="11.00" height="10.70" fill="#e0f0d6"/><rect x="386.00" y="475.00" width="11.00" height="10.70" fill="#d8d8d8"/><rect x="386.00" y="507.10" width="11.00" height="10.70" fill="#d8d8d8"/><rect x="397.00" y="442.90" width="11.00" height="10.70" fill="#ffffff"/><rect x="397.00" y="464.30" width="11.00" height="10.70" fill="#e0f0d6"/><rect x="397.00" y="475.00" width="11.00" height="10.70" fill="#d8d8d8"/><rect x="408.00" y="442.90" width="11.00" height="10.70" fill="#ffffff"/><rect x="408.00" y="464.30" width="11.00" height="10.70" fill="#e0f0d6"/><rect x="408.00" y="475.00" width="11.00" height="10.70" fill="#d8d8d8"/><rect x="408.00" y="507.10" width="11.00" height="10.70" fill="#d8d8d8"/><rect x="419.00" y="442.90" width="11.00" height="10.70" fill="#ffffff"/><rect x="419.00" y="464.30" width="11.00" height="10.70" fill="#e0f0d6"/><rect x="419.00" y="475.00" width="11.00" height="10.70" fill="#d8d8d8"/><rect x="419.00" y="507.10" width="11.00" height="10.70" fill="#d8d8d8"/><rect x="430.00" y="442.90" width="11.00" height="10.70" fill="#ffffff"/><rect x="430.00" y="464.30" width="11.00" height="10.70" fill="#e0f0d6"/><rect x="430.00" y="475.00" width="11.00" height="10.70" fill="#d8d8d8"/><rect x="441.00" y="442.90" width="11.00" height="10.70" fill="#ffffff"/><rect x="441.00" y="464.30" width="11.00" height="10.70" fill="#e0f0d6"/><rect x="441.00" y="475.00" width="11.00" height="10.70" fill="#d8d8d8"/><rect x="441.00" y="507.10" width="11.00" height="10.70" fill="#d8d8d8"/><rect x="452.00" y="442.90" width="11.00" height="10.70" fill="#f5dde3"/><rect x="452.00" y="464.30" width="11.00" height="10.70" fill="#e0f0d6"/><rect x="452.00" y="475.00" width="11.00" height="10.70" fill="#d8d8d8"/><rect x="452.00" y="507.10" width="11.00" height="10.70" fill="#d8d8d8"/><rect x="463.00" y="442.90" width="11.00" height="10.70" fill="#e0f0d6"/><rect x="463.00" y="464.30" width="11.00" height="10.70" fill="#e0f0d6"/><rect x="463.00" y="475.00" width="11.00" height="10.70" fill="#d8d8d8"/><rect x="474.00" y="442.90" width="11.00" height="10.70" fill="#ffffff"/><rect x="474.00" y="464.30" width="11.00" height="10.70" fill="#e0f0d6"/><rect x="474.00" y="475.00" width="11.00" height="10.70" fill="#d8d8d8"/><rect x="474.00" y="507.10" width="11.00" height="10.70" fill="#d8d8d8"/><rect x="485.00" y="442.90" width="11.00" height="10.70" fill="#ffffff"/><rect x="485.00" y="464.30" width="11.00" height="10.70" fill="#e0f0d6"/><rect x="485.00" y="475.00" width="11.00" height="10.70" fill="#d8d8d8"/><rect x="485.00" y="507.10" width="11.00" height="10.70" fill="#d8d8d8"/><rect x="496.00" y="442.90" width="11.00" height="10.70" fill="#e0f0d6"/><rect x="496.00" y="464.30" width="11.00" height="10.70" fill="#e0f0d6"/><rect x="496.00" y="475.00" width="11.00" height="10.70" fill="#d8d8d8"/><rect x="507.00" y="442.90" width="11.00" height="10.70" fill="#e0f0d6"/><rect x="507.00" y="464.30" width="11.00" height="10.70" fill="#e0f0d6"/><rect x="507.00" y="475.00" width="11.00" height="10.70" fill="#d8d8d8"/><rect x="507.00" y="507.10" width="11.00" height="10.70" fill="#d8d8d8"/><rect x="518.00" y="442.90" width="11.00" height="10.70" fill="#f5dde3"/><rect x="518.00" y="464.30" width="11.00" height="10.70" fill="#ffffff"/><rect x="518.00" y="475.00" width="11.00" height="10.70" fill="#d8d8d8"/><rect x="518.00" y="507.10" width="11.00" height="10.70" fill="#d8d8d8"/><rect x="529.00" y="442.90" width="11.00" height="10.70" fill="#ffffff"/><rect x="529.00" y="464.30" width="11.00" height="10.70" fill="#e0f0d6"/><rect x="529.00" y="475.00" width="11.00" height="10.70" fill="#d8d8d8"/><rect x="540.00" y="442.90" width="11.00" height="10.70" fill="#f5dde3"/><rect x="540.00" y="464.30" width="11.00" height="10.70" fill="#f5dde3"/><rect x="540.00" y="475.00" width="11.00" height="10.70" fill="#d8d8d8"/><rect x="540.00" y="507.10" width="11.00" height="10.70" fill="#d8d8d8"/><rect x="551.00" y="442.90" width="11.00" height="10.70" fill="#f5dde3"/><rect x="551.00" y="464.30" width="11.00" height="10.70" fill="#ffffff"/><rect x="551.00" y="475.00" width="11.00" height="10.70" fill="#d8d8d8"/><rect x="551.00" y="507.10" width="11.00" height="10.70" fill="#d8d8d8"/><rect x="562.00" y="442.90" width="11.00" height="10.70" fill="#e0f0d6"/><rect x="562.00" y="464.30" width="11.00" height="10.70" fill="#e0f0d6"/><rect x="562.00" y="475.00" width="11.00" height="10.70" fill="#d8d8d8"/><rect x="573.00" y="442.90" width="11.00" height="10.70" fill="#ffffff"/><rect x="573.00" y="464.30" width="11.00" height="10.70" fill="#e0f0d6"/><rect x="573.00" y="475.00" width="11.00" height="10.70" fill="#d8d8d8"/><rect x="573.00" y="507.10" width="11.00" height="10.70" fill="#d8d8d8"/><rect x="584.00" y="442.90" width="11.00" height="10.70" fill="#e0f0d6"/><rect x="584.00" y="464.30" width="11.00" height="10.70" fill="#e0f0d6"/><rect x="584.00" y="475.00" width="11.00" height="10.70" fill="#d8d8d8"/><rect x="584.00" y="507.10" width="11.00" height="10.70" fill="#d8d8d8"/><rect x="595.00" y="442.90" width="11.00" height="10.70" fill="#ffffff"/><rect x="595.00" y="464.30" width="11.00" height="10.70" fill="#e0f0d6"/><rect x="595.00" y="475.00" width="11.00" height="10.70" fill="#d8d8d8"/><rect x="606.00" y="442.90" width="11.00" height="10.70" fill="#f5dde3"/><rect x="606.00" y="464.30" width="11.00" height="10.70" fill="#e0f0d6"/><rect x="606.00" y="475.00" width="11.00" height="10.70" fill="#d8d8d8"/><rect x="606.00" y="507.10" width="11.00" height="10.70" fill="#d8d8d8"/><rect x="617.00" y="442.90" width="11.00" height="10.70" fill="#f5dde3"/><rect x="617.00" y="464.30" width="11.00" height="10.70" fill="#ffffff"/><rect x="617.00" y="475.00" width="11.00" height="10.70" fill="#d8d8d8"/><rect x="617.00" y="507.10" width="11.00" height="10.70" fill="#d8d8d8"/><rect x="628.00" y="442.90" width="11.00" height="10.70" fill="#e0f0d6"/><rect x="628.00" y="464.30" width="11.00" height="10.70" fill="#e0f0d6"/><rect x="639.00" y="442.90" width="11.00" height="10.70" fill="#f5dde3"/><rect x="639.00" y="464.30" width="11.00" height="10.70" fill="#e0f0d6"/><rect x="639.00" y="475.00" width="11.00" height="10.70" fill="#d8d8d8"/><rect x="639.00" y="507.10" width="11.00" height="10.70" fill="#d8d8d8"/><rect x="650.00" y="442.90" width="11.00" height="10.70" fill="#e0f0d6"/><rect x="650.00" y="464.30" width="11.00" height="10.70" fill="#e0f0d6"/><rect x="650.00" y="475.00" width="11.00" height="10.70" fill="#d8d8d8"/><rect x="650.00" y="507.10" width="11.00" height="10.70" fill="#d8d8d8"/><rect x="661.00" y="442.90" width="11.00" height="10.70" fill="#f5dde3"/><rect x="661.00" y="464.30" width="11.00" height="10.70" fill="#ffffff"/><rect x="672.00" y="442.90" width="11.00" height="10.70" fill="#e0f0d6"/><rect x="672.00" y="464.30" width="11.00" height="10.70" fill="#e0f0d6"/><rect x="672.00" y="475.00" width="11.00" height="10.70" fill="#d8d8d8"/><rect x="672.00" y="507.10" width="11.00" height="10.70" fill="#d8d8d8"/><rect x="683.00" y="442.90" width="11.00" height="10.70" fill="#ffffff"/><rect x="683.00" y="464.30" width="11.00" height="10.70" fill="#e0f0d6"/><rect x="683.00" y="475.00" width="11.00" height="10.70" fill="#d8d8d8"/><rect x="683.00" y="507.10" width="11.00" height="10.70" fill="#d8d8d8"/><rect x="694.00" y="442.90" width="11.00" height="10.70" fill="#e0f0d6"/><rect x="694.00" y="464.30" width="11.00" height="10.70" fill="#e0f0d6"/><rect x="705.00" y="442.90" width="11.00" height="10.70" fill="#e0f0d6"/><rect x="705.00" y="464.30" width="11.00" height="10.70" fill="#e0f0d6"/><rect x="705.00" y="475.00" width="11.00" height="10.70" fill="#d8d8d8"/><rect x="705.00" y="507.10" width="11.00" height="10.70" fill="#d8d8d8"/><line x1="188.00" y1="442.90" x2="716.00" y2="442.90" stroke="#b4b4b4" stroke-width="1"/><line x1="188.00" y1="453.60" x2="716.00" y2="453.60" stroke="#b4b4b4" stroke-width="1"/><line x1="188.00" y1="464.30" x2="716.00" y2="464.30" stroke="#b4b4b4" stroke-width="1"/><line x1="188.00" y1="475.00" x2="716.00" y2="475.00" stroke="#b4b4b4" stroke-width="1"/><line x1="188.00" y1="485.70" x2="716.00" y2="485.70" stroke="#b4b4b4" stroke-width="1"/><line x1="188.00" y1="496.40" x2="716.00" y2="496.40" stroke="#b4b4b4" stroke-width="1"/><line x1="188.00" y1="507.10" x2="716.00" y2="507.10" stroke="#b4b4b4" stroke-width="1"/><line x1="188.00" y1="517.80" x2="716.00" y2="517.80" stroke="#b4b4b4" stroke-width="1"/><line x1="188.00" y1="442.90" x2="188.00" y2="517.80" stroke="#7a7a7a" stroke-width="1"/><line x1="199.00" y1="442.90" x2="199.00" y2="517.80" stroke="#cacaca" stroke-width="1"/><line x1="210.00" y1="442.90" x2="210.00" y2="517.80" stroke="#cacaca" stroke-width="1"/><line x1="221.00" y1="442.90" x2="221.00" y2="517.80" stroke="#7a7a7a" stroke-width="1"/><line x1="232.00" y1="442.90" x2="232.00" y2="517.80" stroke="#cacaca" stroke-width="1"/><line x1="243.00" y1="442.90" x2="243.00" y2="517.80" stroke="#cacaca" stroke-width="1"/><line x1="254.00" y1="442.90" x2="254.00" y2="517.80" stroke="#7a7a7a" stroke-width="1"/><line x1="265.00" y1="442.90" x2="265.00" y2="517.80" stroke="#cacaca" stroke-width="1"/><line x1="276.00" y1="442.90" x2="276.00" y2="517.80" stroke="#cacaca" stroke-width="1"/><line x1="287.00" y1="442.90" x2="287.00" y2="517.80" stroke="#7a7a7a" stroke-width="1"/><line x1="298.00" y1="442.90" x2="298.00" y2="517.80" stroke="#cacaca" stroke-width="1"/><line x1="309.00" y1="442.90" x2="309.00" y2="517.80" stroke="#cacaca" stroke-width="1"/><line x1="320.00" y1="442.90" x2="320.00" y2="517.80" stroke="#7a7a7a" stroke-width="1"/><line x1="331.00" y1="442.90" x2="331.00" y2="517.80" stroke="#cacaca" stroke-width="1"/><line x1="342.00" y1="442.90" x2="342.00" y2="517.80" stroke="#cacaca" stroke-width="1"/><line x1="353.00" y1="442.90" x2="353.00" y2="517.80" stroke="#7a7a7a" stroke-width="1"/><line x1="364.00" y1="442.90" x2="364.00" y2="517.80" stroke="#cacaca" stroke-width="1"/><line x1="375.00" y1="442.90" x2="375.00" y2="517.80" stroke="#cacaca" stroke-width="1"/><line x1="386.00" y1="442.90" x2="386.00" y2="517.80" stroke="#7a7a7a" stroke-width="1"/><line x1="397.00" y1="442.90" x2="397.00" y2="517.80" stroke="#cacaca" stroke-width="1"/><line x1="408.00" y1="442.90" x2="408.00" y2="517.80" stroke="#cacaca" stroke-width="1"/><line x1="419.00" y1="442.90" x2="419.00" y2="517.80" stroke="#7a7a7a" stroke-width="1"/><line x1="430.00" y1="442.90" x2="430.00" y2="517.80" stroke="#cacaca" stroke-width="1"/><line x1="441.00" y1="442.90" x2="441.00" y2="517.80" stroke="#cacaca" stroke-width="1"/><line x1="452.00" y1="442.90" x2="452.00" y2="517.80" stroke="#7a7a7a" stroke-width="1"/><line x1="463.00" y1="442.90" x2="463.00" y2="517.80" stroke="#cacaca" stroke-width="1"/><line x1="474.00" y1="442.90" x2="474.00" y2="517.80" stroke="#cacaca" stroke-width="1"/><line x1="485.00" y1="442.90" x2="485.00" y2="517.80" stroke="#7a7a7a" stroke-width="1"/><line x1="496.00" y1="442.90" x2="496.00" y2="517.80" stroke="#cacaca" stroke-width="1"/><line x1="507.00" y1="442.90" x2="507.00" y2="517.80" stroke="#cacaca" stroke-width="1"/><line x1="518.00" y1="442.90" x2="518.00" y2="517.80" stroke="#7a7a7a" stroke-width="1"/><line x1="529.00" y1="442.90" x2="529.00" y2="517.80" stroke="#cacaca" stroke-width="1"/><line x1="540.00" y1="442.90" x2="540.00" y2="517.80" stroke="#cacaca" stroke-width="1"/><line x1="551.00" y1="442.90" x2="551.00" y2="517.80" stroke="#7a7a7a" stroke-width="1"/><line x1="562.00" y1="442.90" x2="562.00" y2="517.80" stroke="#cacaca" stroke-width="1"/><line x1="573.00" y1="442.90" x2="573.00" y2="517.80" stroke="#cacaca" stroke-width="1"/><line x1="584.00" y1="442.90" x2="584.00" y2="517.80" stroke="#7a7a7a" stroke-width="1"/><line x1="595.00" y1="442.90" x2="595.00" y2="517.80" stroke="#cacaca" stroke-width="1"/><line x1="606.00" y1="442.90" x2="606.00" y2="517.80" stroke="#cacaca" stroke-width="1"/><line x1="617.00" y1="442.90" x2="617.00" y2="517.80" stroke="#7a7a7a" stroke-width="1"/><line x1="628.00" y1="442.90" x2="628.00" y2="517.80" stroke="#cacaca" stroke-width="1"/><line x1="639.00" y1="442.90" x2="639.00" y2="517.80" stroke="#cacaca" stroke-width="1"/><line x1="650.00" y1="442.90" x2="650.00" y2="517.80" stroke="#7a7a7a" stroke-width="1"/><line x1="661.00" y1="442.90" x2="661.00" y2="517.80" stroke="#cacaca" stroke-width="1"/><line x1="672.00" y1="442.90" x2="672.00" y2="517.80" stroke="#cacaca" stroke-width="1"/><line x1="683.00" y1="442.90" x2="683.00" y2="517.80" stroke="#7a7a7a" stroke-width="1"/><line x1="694.00" y1="442.90" x2="694.00" y2="517.80" stroke="#cacaca" stroke-width="1"/><line x1="705.00" y1="442.90" x2="705.00" y2="517.80" stroke="#cacaca" stroke-width="1"/><line x1="716.00" y1="442.90" x2="716.00" y2="517.80" stroke="#7a7a7a" stroke-width="1"/><text x="193.30" y="450.65" font-size="6.8" fill="#222" text-anchor="middle" font-weight="normal" stroke="#222" stroke-width="0.08">1</text><text x="193.30" y="472.05" font-size="6.8" fill="#222" text-anchor="middle" font-weight="normal" stroke="#222" stroke-width="0.08">1</text><text x="204.30" y="450.65" font-size="6.8" fill="#222" text-anchor="middle" font-weight="normal" stroke="#222" stroke-width="0.08">2</text><text x="204.30" y="472.05" font-size="6.8" fill="#222" text-anchor="middle" font-weight="normal" stroke="#222" stroke-width="0.08">2</text><text x="215.30" y="450.65" font-size="6.8" fill="#222" text-anchor="middle" font-weight="normal" stroke="#222" stroke-width="0.08">1</text><text x="215.30" y="472.05" font-size="6.8" fill="#222" text-anchor="middle" font-weight="normal" stroke="#222" stroke-width="0.08">1</text><text x="226.30" y="450.65" font-size="6.8" fill="#222" text-anchor="middle" font-weight="normal" stroke="#222" stroke-width="0.08">1</text><text x="226.30" y="472.05" font-size="6.8" fill="#222" text-anchor="middle" font-weight="normal" stroke="#222" stroke-width="0.08">1</text><text x="237.30" y="450.65" font-size="6.8" fill="#222" text-anchor="middle" font-weight="normal" stroke="#222" stroke-width="0.08">2</text><text x="237.30" y="472.05" font-size="6.8" fill="#222" text-anchor="middle" font-weight="normal" stroke="#222" stroke-width="0.08">2</text><text x="248.30" y="450.65" font-size="6.8" fill="#222" text-anchor="middle" font-weight="normal" stroke="#222" stroke-width="0.08">1</text><text x="248.30" y="472.05" font-size="6.8" fill="#222" text-anchor="middle" font-weight="normal" stroke="#222" stroke-width="0.08">1</text><text x="259.30" y="450.65" font-size="6.8" fill="#222" text-anchor="middle" font-weight="normal" stroke="#222" stroke-width="0.08">2</text><text x="259.30" y="472.05" font-size="6.8" fill="#222" text-anchor="middle" font-weight="normal" stroke="#222" stroke-width="0.08">2</text><text x="270.30" y="450.65" font-size="6.8" fill="#222" text-anchor="middle" font-weight="normal" stroke="#222" stroke-width="0.08">1</text><text x="270.30" y="472.05" font-size="6.8" fill="#222" text-anchor="middle" font-weight="normal" stroke="#222" stroke-width="0.08">1</text><text x="281.30" y="450.65" font-size="6.8" fill="#222" text-anchor="middle" font-weight="normal" stroke="#222" stroke-width="0.08">2</text><text x="281.30" y="472.05" font-size="6.8" fill="#222" text-anchor="middle" font-weight="normal" stroke="#222" stroke-width="0.08">2</text><text x="292.30" y="450.65" font-size="6.8" fill="#222" text-anchor="middle" font-weight="normal" stroke="#222" stroke-width="0.08">1</text><text x="292.30" y="472.05" font-size="6.8" fill="#222" text-anchor="middle" font-weight="normal" stroke="#222" stroke-width="0.08">1</text><text x="303.30" y="450.65" font-size="6.8" fill="#222" text-anchor="middle" font-weight="normal" stroke="#222" stroke-width="0.08">2</text><text x="303.30" y="472.05" font-size="6.8" fill="#222" text-anchor="middle" font-weight="normal" stroke="#222" stroke-width="0.08">2</text><text x="314.30" y="450.65" font-size="6.8" fill="#222" text-anchor="middle" font-weight="normal" stroke="#222" stroke-width="0.08">1</text><text x="314.30" y="472.05" font-size="6.8" fill="#222" text-anchor="middle" font-weight="normal" stroke="#222" stroke-width="0.08">1</text><text x="325.30" y="450.65" font-size="6.8" fill="#222" text-anchor="middle" font-weight="normal" stroke="#222" stroke-width="0.08">2</text><text x="325.30" y="472.05" font-size="6.8" fill="#222" text-anchor="middle" font-weight="normal" stroke="#222" stroke-width="0.08">2</text><text x="336.30" y="450.65" font-size="6.8" fill="#222" text-anchor="middle" font-weight="normal" stroke="#222" stroke-width="0.08">1</text><text x="336.30" y="472.05" font-size="6.8" fill="#222" text-anchor="middle" font-weight="normal" stroke="#222" stroke-width="0.08">1</text><text x="347.30" y="450.65" font-size="6.8" fill="#222" text-anchor="middle" font-weight="normal" stroke="#222" stroke-width="0.08">2</text><text x="347.30" y="472.05" font-size="6.8" fill="#222" text-anchor="middle" font-weight="normal" stroke="#222" stroke-width="0.08">2</text><text x="358.30" y="450.65" font-size="6.8" fill="#222" text-anchor="middle" font-weight="normal" stroke="#222" stroke-width="0.08">1</text><text x="358.30" y="472.05" font-size="6.8" fill="#222" text-anchor="middle" font-weight="normal" stroke="#222" stroke-width="0.08">1</text><text x="369.30" y="450.65" font-size="6.8" fill="#222" text-anchor="middle" font-weight="normal" stroke="#222" stroke-width="0.08">2</text><text x="369.30" y="472.05" font-size="6.8" fill="#222" text-anchor="middle" font-weight="normal" stroke="#222" stroke-width="0.08">2</text><text x="380.30" y="450.65" font-size="6.8" fill="#222" text-anchor="middle" font-weight="normal" stroke="#222" stroke-width="0.08">1</text><text x="380.30" y="472.05" font-size="6.8" fill="#222" text-anchor="middle" font-weight="normal" stroke="#222" stroke-width="0.08">1</text><text x="391.30" y="450.65" font-size="6.8" fill="#222" text-anchor="middle" font-weight="normal" stroke="#222" stroke-width="0.08">2</text><text x="391.30" y="472.05" font-size="6.8" fill="#222" text-anchor="middle" font-weight="normal" stroke="#222" stroke-width="0.08">2</text><text x="402.30" y="450.65" font-size="6.8" fill="#222" text-anchor="middle" font-weight="normal" stroke="#222" stroke-width="0.08">1</text><text x="402.30" y="472.05" font-size="6.8" fill="#222" text-anchor="middle" font-weight="normal" stroke="#222" stroke-width="0.08">1</text><text x="413.30" y="450.65" font-size="6.8" fill="#222" text-anchor="middle" font-weight="normal" stroke="#222" stroke-width="0.08">2</text><text x="413.30" y="472.05" font-size="6.8" fill="#222" text-anchor="middle" font-weight="normal" stroke="#222" stroke-width="0.08">2</text><text x="424.30" y="450.65" font-size="6.8" fill="#222" text-anchor="middle" font-weight="normal" stroke="#222" stroke-width="0.08">1</text><text x="424.30" y="472.05" font-size="6.8" fill="#222" text-anchor="middle" font-weight="normal" stroke="#222" stroke-width="0.08">1</text><text x="435.30" y="450.65" font-size="6.8" fill="#222" text-anchor="middle" font-weight="normal" stroke="#222" stroke-width="0.08">2</text><text x="435.30" y="472.05" font-size="6.8" fill="#222" text-anchor="middle" font-weight="normal" stroke="#222" stroke-width="0.08">2</text><text x="446.30" y="450.65" font-size="6.8" fill="#222" text-anchor="middle" font-weight="normal" stroke="#222" stroke-width="0.08">1</text><text x="446.30" y="472.05" font-size="6.8" fill="#222" text-anchor="middle" font-weight="normal" stroke="#222" stroke-width="0.08">1</text><text x="457.30" y="450.65" font-size="6.8" fill="#222" text-anchor="middle" font-weight="normal" stroke="#222" stroke-width="0.08">2</text><text x="457.30" y="472.05" font-size="6.8" fill="#222" text-anchor="middle" font-weight="normal" stroke="#222" stroke-width="0.08">2</text><text x="468.30" y="450.65" font-size="6.8" fill="#222" text-anchor="middle" font-weight="normal" stroke="#222" stroke-width="0.08">1</text><text x="468.30" y="472.05" font-size="6.8" fill="#222" text-anchor="middle" font-weight="normal" stroke="#222" stroke-width="0.08">1</text><text x="479.30" y="450.65" font-size="6.8" fill="#222" text-anchor="middle" font-weight="normal" stroke="#222" stroke-width="0.08">2</text><text x="479.30" y="472.05" font-size="6.8" fill="#222" text-anchor="middle" font-weight="normal" stroke="#222" stroke-width="0.08">2</text><text x="490.30" y="450.65" font-size="6.8" fill="#222" text-anchor="middle" font-weight="normal" stroke="#222" stroke-width="0.08">1</text><text x="490.30" y="472.05" font-size="6.8" fill="#222" text-anchor="middle" font-weight="normal" stroke="#222" stroke-width="0.08">1</text><text x="501.30" y="450.65" font-size="6.8" fill="#222" text-anchor="middle" font-weight="normal" stroke="#222" stroke-width="0.08">2</text><text x="501.30" y="472.05" font-size="6.8" fill="#222" text-anchor="middle" font-weight="normal" stroke="#222" stroke-width="0.08">2</text><text x="512.30" y="450.65" font-size="6.8" fill="#222" text-anchor="middle" font-weight="normal" stroke="#222" stroke-width="0.08">1</text><text x="512.30" y="472.05" font-size="6.8" fill="#222" text-anchor="middle" font-weight="normal" stroke="#222" stroke-width="0.08">1</text><text x="523.30" y="450.65" font-size="6.8" fill="#222" text-anchor="middle" font-weight="normal" stroke="#222" stroke-width="0.08">5</text><text x="523.30" y="472.05" font-size="6.8" fill="#222" text-anchor="middle" font-weight="normal" stroke="#222" stroke-width="0.08">5</text><text x="534.30" y="450.65" font-size="6.8" fill="#222" text-anchor="middle" font-weight="normal" stroke="#222" stroke-width="0.08">2</text><text x="534.30" y="472.05" font-size="6.8" fill="#222" text-anchor="middle" font-weight="normal" stroke="#222" stroke-width="0.08">2</text><text x="545.30" y="450.65" font-size="6.8" fill="#222" text-anchor="middle" font-weight="normal" stroke="#222" stroke-width="0.08">3</text><text x="545.30" y="472.05" font-size="6.8" fill="#222" text-anchor="middle" font-weight="normal" stroke="#222" stroke-width="0.08">3</text><text x="556.30" y="450.65" font-size="6.8" fill="#222" text-anchor="middle" font-weight="normal" stroke="#222" stroke-width="0.08">3</text><text x="556.30" y="472.05" font-size="6.8" fill="#222" text-anchor="middle" font-weight="normal" stroke="#222" stroke-width="0.08">3</text><text x="567.30" y="450.65" font-size="6.8" fill="#222" text-anchor="middle" font-weight="normal" stroke="#222" stroke-width="0.08">1</text><text x="567.30" y="472.05" font-size="6.8" fill="#222" text-anchor="middle" font-weight="normal" stroke="#222" stroke-width="0.08">1</text><text x="578.30" y="450.65" font-size="6.8" fill="#222" text-anchor="middle" font-weight="normal" stroke="#222" stroke-width="0.08">2</text><text x="578.30" y="472.05" font-size="6.8" fill="#222" text-anchor="middle" font-weight="normal" stroke="#222" stroke-width="0.08">2</text><text x="589.30" y="450.65" font-size="6.8" fill="#222" text-anchor="middle" font-weight="normal" stroke="#222" stroke-width="0.08">1</text><text x="589.30" y="472.05" font-size="6.8" fill="#222" text-anchor="middle" font-weight="normal" stroke="#222" stroke-width="0.08">1</text><text x="600.30" y="450.65" font-size="6.8" fill="#222" text-anchor="middle" font-weight="normal" stroke="#222" stroke-width="0.08">1</text><text x="600.30" y="472.05" font-size="6.8" fill="#222" text-anchor="middle" font-weight="normal" stroke="#222" stroke-width="0.08">1</text><text x="611.30" y="450.65" font-size="6.8" fill="#222" text-anchor="middle" font-weight="normal" stroke="#222" stroke-width="0.08">3</text><text x="611.30" y="472.05" font-size="6.8" fill="#222" text-anchor="middle" font-weight="normal" stroke="#222" stroke-width="0.08">3</text><text x="622.30" y="450.65" font-size="6.8" fill="#222" text-anchor="middle" font-weight="normal" stroke="#222" stroke-width="0.08">2</text><text x="622.30" y="472.05" font-size="6.8" fill="#222" text-anchor="middle" font-weight="normal" stroke="#222" stroke-width="0.08">2</text><text x="633.30" y="450.65" font-size="6.8" fill="#222" text-anchor="middle" font-weight="normal" stroke="#222" stroke-width="0.08">1</text><text x="633.30" y="472.05" font-size="6.8" fill="#222" text-anchor="middle" font-weight="normal" stroke="#222" stroke-width="0.08">1</text><text x="644.30" y="450.65" font-size="6.8" fill="#222" text-anchor="middle" font-weight="normal" stroke="#222" stroke-width="0.08">2</text><text x="644.30" y="472.05" font-size="6.8" fill="#222" text-anchor="middle" font-weight="normal" stroke="#222" stroke-width="0.08">2</text><text x="655.30" y="450.65" font-size="6.8" fill="#222" text-anchor="middle" font-weight="normal" stroke="#222" stroke-width="0.08">1</text><text x="655.30" y="472.05" font-size="6.8" fill="#222" text-anchor="middle" font-weight="normal" stroke="#222" stroke-width="0.08">1</text><text x="666.30" y="450.65" font-size="6.8" fill="#222" text-anchor="middle" font-weight="normal" stroke="#222" stroke-width="0.08">2</text><text x="666.30" y="472.05" font-size="6.8" fill="#222" text-anchor="middle" font-weight="normal" stroke="#222" stroke-width="0.08">2</text><text x="677.30" y="450.65" font-size="6.8" fill="#222" text-anchor="middle" font-weight="normal" stroke="#222" stroke-width="0.08">1</text><text x="677.30" y="472.05" font-size="6.8" fill="#222" text-anchor="middle" font-weight="normal" stroke="#222" stroke-width="0.08">1</text><text x="688.30" y="450.65" font-size="6.8" fill="#222" text-anchor="middle" font-weight="normal" stroke="#222" stroke-width="0.08">1</text><text x="688.30" y="472.05" font-size="6.8" fill="#222" text-anchor="middle" font-weight="normal" stroke="#222" stroke-width="0.08">1</text><text x="699.30" y="450.65" font-size="6.8" fill="#222" text-anchor="middle" font-weight="normal" stroke="#222" stroke-width="0.08">1</text><text x="699.30" y="472.05" font-size="6.8" fill="#222" text-anchor="middle" font-weight="normal" stroke="#222" stroke-width="0.08">1</text><text x="710.30" y="450.65" font-size="6.8" fill="#222" text-anchor="middle" font-weight="normal" stroke="#222" stroke-width="0.08">1</text><text x="710.30" y="472.05" font-size="6.8" fill="#222" text-anchor="middle" font-weight="normal" stroke="#222" stroke-width="0.08">1</text><text x="183.90" y="451.05" font-size="5.3" fill="#333" text-anchor="end" font-weight="normal" stroke="#333" stroke-width="0.15">PD</text><text x="183.90" y="461.75" font-size="5.3" fill="#333" text-anchor="end" font-weight="normal" stroke="#333" stroke-width="0.15">GM</text><text x="183.90" y="472.45" font-size="5.3" fill="#333" text-anchor="end" font-weight="normal" stroke="#333" stroke-width="0.15">CAL</text><text x="183.90" y="483.15" font-size="5.3" fill="#333" text-anchor="end" font-weight="normal" stroke="#333" stroke-width="0.15">Furc</text><text x="183.90" y="493.85" font-size="5.3" fill="#333" text-anchor="end" font-weight="normal" stroke="#333" stroke-width="0.15">Bleed</text><text x="183.90" y="504.55" font-size="5.3" fill="#333" text-anchor="end" font-weight="normal" stroke="#333" stroke-width="0.15">Sup</text><text x="183.90" y="515.25" font-size="5.3" fill="#333" text-anchor="end" font-weight="normal" stroke="#333" stroke-width="0.15">Mob</text><text x="193.10" y="525.40" font-size="5.2" fill="#b4b4b4" text-anchor="middle" font-weight="normal" >D</text><text x="204.10" y="525.40" font-size="5.2" fill="#b4b4b4" text-anchor="middle" font-weight="normal" >F</text><text x="215.10" y="525.40" font-size="5.2" fill="#b4b4b4" text-anchor="middle" font-weight="normal" >M</text><text x="226.10" y="525.40" font-size="5.2" fill="#b4b4b4" text-anchor="middle" font-weight="normal" >D</text><text x="237.10" y="525.40" font-size="5.2" fill="#b4b4b4" text-anchor="middle" font-weight="normal" >F</text><text x="248.10" y="525.40" font-size="5.2" fill="#b4b4b4" text-anchor="middle" font-weight="normal" >M</text><text x="259.10" y="525.40" font-size="5.2" fill="#b4b4b4" text-anchor="middle" font-weight="normal" >D</text><text x="270.10" y="525.40" font-size="5.2" fill="#b4b4b4" text-anchor="middle" font-weight="normal" >F</text><text x="281.10" y="525.40" font-size="5.2" fill="#b4b4b4" text-anchor="middle" font-weight="normal" >M</text><text x="292.10" y="525.40" font-size="5.2" fill="#b4b4b4" text-anchor="middle" font-weight="normal" >D</text><text x="303.10" y="525.40" font-size="5.2" fill="#b4b4b4" text-anchor="middle" font-weight="normal" >F</text><text x="314.10" y="525.40" font-size="5.2" fill="#b4b4b4" text-anchor="middle" font-weight="normal" >M</text><text x="325.10" y="525.40" font-size="5.2" fill="#b4b4b4" text-anchor="middle" font-weight="normal" >D</text><text x="336.10" y="525.40" font-size="5.2" fill="#b4b4b4" text-anchor="middle" font-weight="normal" >F</text><text x="347.10" y="525.40" font-size="5.2" fill="#b4b4b4" text-anchor="middle" font-weight="normal" >M</text><text x="358.10" y="525.40" font-size="5.2" fill="#b4b4b4" text-anchor="middle" font-weight="normal" >D</text><text x="369.10" y="525.40" font-size="5.2" fill="#b4b4b4" text-anchor="middle" font-weight="normal" >F</text><text x="380.10" y="525.40" font-size="5.2" fill="#b4b4b4" text-anchor="middle" font-weight="normal" >M</text><text x="391.10" y="525.40" font-size="5.2" fill="#b4b4b4" text-anchor="middle" font-weight="normal" >D</text><text x="402.10" y="525.40" font-size="5.2" fill="#b4b4b4" text-anchor="middle" font-weight="normal" >F</text><text x="413.10" y="525.40" font-size="5.2" fill="#b4b4b4" text-anchor="middle" font-weight="normal" >M</text><text x="424.10" y="525.40" font-size="5.2" fill="#b4b4b4" text-anchor="middle" font-weight="normal" >D</text><text x="435.10" y="525.40" font-size="5.2" fill="#b4b4b4" text-anchor="middle" font-weight="normal" >F</text><text x="446.10" y="525.40" font-size="5.2" fill="#b4b4b4" text-anchor="middle" font-weight="normal" >M</text><text x="457.10" y="525.40" font-size="5.2" fill="#b4b4b4" text-anchor="middle" font-weight="normal" >M</text><text x="468.10" y="525.40" font-size="5.2" fill="#b4b4b4" text-anchor="middle" font-weight="normal" >F</text><text x="479.10" y="525.40" font-size="5.2" fill="#b4b4b4" text-anchor="middle" font-weight="normal" >D</text><text x="490.10" y="525.40" font-size="5.2" fill="#b4b4b4" text-anchor="middle" font-weight="normal" >M</text><text x="501.10" y="525.40" font-size="5.2" fill="#b4b4b4" text-anchor="middle" font-weight="normal" >F</text><text x="512.10" y="525.40" font-size="5.2" fill="#b4b4b4" text-anchor="middle" font-weight="normal" >D</text><text x="523.10" y="525.40" font-size="5.2" fill="#b4b4b4" text-anchor="middle" font-weight="normal" >M</text><text x="534.10" y="525.40" font-size="5.2" fill="#b4b4b4" text-anchor="middle" font-weight="normal" >F</text><text x="545.10" y="525.40" font-size="5.2" fill="#b4b4b4" text-anchor="middle" font-weight="normal" >D</text><text x="556.10" y="525.40" font-size="5.2" fill="#b4b4b4" text-anchor="middle" font-weight="normal" >M</text><text x="567.10" y="525.40" font-size="5.2" fill="#b4b4b4" text-anchor="middle" font-weight="normal" >F</text><text x="578.10" y="525.40" font-size="5.2" fill="#b4b4b4" text-anchor="middle" font-weight="normal" >D</text><text x="589.10" y="525.40" font-size="5.2" fill="#b4b4b4" text-anchor="middle" font-weight="normal" >M</text><text x="600.10" y="525.40" font-size="5.2" fill="#b4b4b4" text-anchor="middle" font-weight="normal" >F</text><text x="611.10" y="525.40" font-size="5.2" fill="#b4b4b4" text-anchor="middle" font-weight="normal" >D</text><text x="622.10" y="525.40" font-size="5.2" fill="#b4b4b4" text-anchor="middle" font-weight="normal" >M</text><text x="633.10" y="525.40" font-size="5.2" fill="#b4b4b4" text-anchor="middle" font-weight="normal" >F</text><text x="644.10" y="525.40" font-size="5.2" fill="#b4b4b4" text-anchor="middle" font-weight="normal" >D</text><text x="655.10" y="525.40" font-size="5.2" fill="#b4b4b4" text-anchor="middle" font-weight="normal" >M</text><text x="666.10" y="525.40" font-size="5.2" fill="#b4b4b4" text-anchor="middle" font-weight="normal" >F</text><text x="677.10" y="525.40" font-size="5.2" fill="#b4b4b4" text-anchor="middle" font-weight="normal" >D</text><text x="688.10" y="525.40" font-size="5.2" fill="#b4b4b4" text-anchor="middle" font-weight="normal" >M</text><text x="699.10" y="525.40" font-size="5.2" fill="#b4b4b4" text-anchor="middle" font-weight="normal" >F</text><text x="710.10" y="525.40" font-size="5.2" fill="#b4b4b4" text-anchor="middle" font-weight="normal" >D</text><circle cx="490.50" cy="217.35" r="2.1" fill="#e0202a"/><circle cx="501.50" cy="217.35" r="2.1" fill="#e0202a"/><circle cx="501.50" cy="228.05" r="2.1" fill="#c8c832"/><text x="501.50" y="241.35" font-size="7.4" fill="#222" text-anchor="middle" font-weight="normal" >3</text><text x="468.50" y="241.35" font-size="7.4" fill="#222" text-anchor="middle" font-weight="normal" >1</text><text x="0" y="0" font-size="7.12" fill="#222" text-anchor="middle" transform="translate(165.6 208.5) rotate(-90)">Facial</text><text x="0" y="0" font-size="7.61" fill="#222" text-anchor="middle" transform="translate(165.6 297.2) rotate(-90)">Lingual</text><text x="0" y="0" font-size="7.61" fill="#222" text-anchor="middle" transform="translate(165.6 385.4) rotate(-90)">Lingual</text><text x="0" y="0" font-size="7.12" fill="#222" text-anchor="middle" transform="translate(165.6 479.3) rotate(-90)">Facial</text></svg>
<div class="t" style="left:40.2px;top:64px;font-size:3.4px;letter-spacing:1.25px;color:#8a8a8a;font-weight:bold">DENTAL</div>
<div class="t" style="left:65.20px;top:10.39px;font-size:7.01px;color:#333;-webkit-text-stroke:0.2px #333;transform:scaleY(1.2)">Carestream Dental - Web DPMS</div>
<div class="t" style="left:81.80px;top:30.82px;font-size:8.34px;color:#202124;-webkit-text-stroke:0.2px #202124;transform:scaleY(1.1)">phoenix.carestreamdental.com</div>
<div class="t" style="left:195.80px;top:30.59px;font-size:8.77px;color:#6f7378;-webkit-text-stroke:0.2px #6f7378;transform:scaleY(1.1)">/patient/clinical-perioChart/d944500c-f148-783c-3610-23be78ca5bdd</div>
<div class="t" style="left:11.50px;top:52.70px;font-size:8.90px;color:#111;font-weight:bold;transform:scaleY(1.15)">Carestream</div>
<div class="t" style="left:70.60px;top:54.08px;font-size:7.51px;color:#333;-webkit-text-stroke:0.2px #333;transform:scaleY(1.15)">Checkout Queue (0):</div>
<div class="t" style="left:813.80px;top:55.41px;font-size:7.47px;color:#b0b0b0;transform:scaleY(1.15)">Search Patients</div>
<div class="t" style="left:934.80px;top:55.50px;font-size:6.76px;color:#222;font-weight:bold;transform:scaleY(1.15)">Jeff Telford</div>
<div class="t" style="left:8.10px;top:78.24px;font-size:9.19px;color:#222;-webkit-text-stroke:0.2px #222;transform:scaleY(1.15)">Smiley Dental Surgery</div>
<div class="t" style="left:120.90px;top:78.31px;font-size:9.06px;color:#222;-webkit-text-stroke:0.2px #222;transform:scaleY(1.15)">Power Ranch Practice</div>
<div class="t" style="left:232.30px;top:78.12px;font-size:9.41px;color:#222;-webkit-text-stroke:0.2px #222;transform:scaleY(1.15)">Terrence Windsor</div>
<div class="t" style="left:327.80px;top:78.26px;font-size:9.15px;color:#2868ab;-webkit-text-stroke:0.2px #2868ab;transform:scaleY(1.15)">Carey Windsor</div>
<div class="t" style="left:409.90px;top:78.23px;font-size:9.20px;color:#222;-webkit-text-stroke:0.2px #222;transform:scaleY(1.15)">Jeff Townsend</div>
<div class="t" style="left:490.40px;top:78.13px;font-size:9.38px;color:#222;-webkit-text-stroke:0.2px #222;transform:scaleY(1.15)">Springboard</div>
<div class="t" style="left:8.10px;top:97.92px;font-size:7.80px;color:#f2f2f2;-webkit-text-stroke:0.2px #f2f2f2;transform:scaleY(1.15)">Home</div>
<div class="t" style="left:40.00px;top:97.99px;font-size:7.68px;color:#f2f2f2;-webkit-text-stroke:0.2px #f2f2f2;transform:scaleY(1.15)">Patient Record</div>
<div class="t" style="left:101.90px;top:97.94px;font-size:7.77px;color:#f2f2f2;-webkit-text-stroke:0.2px #f2f2f2;transform:scaleY(1.15)">Medical History</div>
<div class="t" style="left:165.90px;top:97.87px;font-size:7.88px;color:#f2f2f2;-webkit-text-stroke:0.2px #f2f2f2;transform:scaleY(1.15)">Insurance</div>
<div class="t" style="left:219.60px;top:97.87px;font-size:7.88px;color:#4d93cc;-webkit-text-stroke:0.2px #4d93cc;transform:scaleY(1.15)">Clinical</div>
<div class="t" style="left:263.60px;top:97.76px;font-size:8.09px;color:#f2f2f2;-webkit-text-stroke:0.2px #f2f2f2;transform:scaleY(1.15)">Financials</div>
<div class="t" style="left:316.60px;top:97.89px;font-size:7.85px;color:#f2f2f2;-webkit-text-stroke:0.2px #f2f2f2;transform:scaleY(1.15)">Treatment Plan</div>
<div class="t" style="left:381.00px;top:98.07px;font-size:7.52px;color:#f2f2f2;-webkit-text-stroke:0.2px #f2f2f2;transform:scaleY(1.15)">Patient Files</div>
<div class="t" style="left:32.30px;top:116.51px;font-size:7.46px;color:#2868ab;-webkit-text-stroke:0.2px #2868ab;transform:scaleY(1.15)">Carey Windsor</div>
<div class="t" style="left:32.30px;top:129.42px;font-size:7.44px;color:#222;-webkit-text-stroke:0.2px #222;transform:scaleY(1.15)">(826) 555-7707</div>
<div class="t" style="left:32.30px;top:138.99px;font-size:7.67px;color:#222;-webkit-text-stroke:0.2px #222;transform:scaleY(1.15)">Terrence Windsor (Spouse)</div>
<div class="t" style="left:8.10px;top:140.98px;font-size:5.91px;color:#333;-webkit-text-stroke:0.2px #333;transform:scaleY(1.15)">34 yrs</div>
<div class="t" style="left:134.10px;top:129.91px;font-size:7.28px;color:#2868ab;-webkit-text-stroke:0.2px #2868ab;transform:scaleY(1.15)">(6)</div>
<div class="t" style="left:162.80px;top:113.85px;font-size:7.74px;color:#222;-webkit-text-stroke:0.2px #222;transform:scaleY(1.15)">Display Exam from</div>
<div class="t" style="left:162.80px;top:136.74px;font-size:7.57px;color:#222;-webkit-text-stroke:0.2px #222;transform:scaleY(1.15)">Last Perio Exam on</div>
<div class="t" style="left:282.30px;top:118.63px;font-size:7.60px;color:#222;-webkit-text-stroke:0.2px #222;transform:scaleY(1.15)">Nov 21, 2019</div>
<div class="t" style="left:277.10px;top:136.94px;font-size:7.23px;color:#222;-webkit-text-stroke:0.2px #222;transform:scaleY(1.15)">Jan 21, 2020</div>
<div class="t" style="left:381.80px;top:113.67px;font-size:7.88px;color:#222;-webkit-text-stroke:0.2px #222;transform:scaleY(1.15)">Tools</div>
<div class="t" style="left:383.60px;top:124.27px;font-size:7.70px;color:#2868ab;-webkit-text-stroke:0.2px #2868ab;transform:scaleY(1.15)">Acquire New Image</div>
<div class="t" style="left:383.60px;top:136.28px;font-size:7.86px;color:#2868ab;-webkit-text-stroke:0.2px #2868ab;transform:scaleY(1.15)">Plan Treatment</div>
<div class="t" style="left:503.30px;top:124.21px;font-size:7.82px;color:#2868ab;-webkit-text-stroke:0.2px #2868ab;transform:scaleY(1.15)">Add Note</div>
<div class="t" style="left:503.30px;top:136.23px;font-size:7.95px;color:#2868ab;-webkit-text-stroke:0.2px #2868ab;transform:scaleY(1.15)">Add Templated Note</div>
<div class="t" style="left:626.10px;top:113.87px;font-size:7.53px;color:#222;-webkit-text-stroke:0.2px #222;transform:scaleY(1.15)">Region Selection</div>
<div class="t" style="left:671.10px;top:124.74px;font-size:6.16px;color:#bdbdbd;-webkit-text-stroke:0.2px #bdbdbd;transform:scaleY(1.15)">UR</div>
<div class="t" style="left:708.20px;top:124.12px;font-size:7.27px;color:#bdbdbd;-webkit-text-stroke:0.2px #bdbdbd;transform:scaleY(1.15)">UA</div>
<div class="t" style="left:746.20px;top:124.46px;font-size:6.65px;color:#bdbdbd;-webkit-text-stroke:0.2px #bdbdbd;transform:scaleY(1.15)">UL</div>
<div class="t" style="left:672.10px;top:137.53px;font-size:6.18px;color:#bdbdbd;-webkit-text-stroke:0.2px #bdbdbd;transform:scaleY(1.15)">LR</div>
<div class="t" style="left:708.80px;top:137.10px;font-size:6.95px;color:#bdbdbd;-webkit-text-stroke:0.2px #bdbdbd;transform:scaleY(1.15)">LA</div>
<div class="t" style="left:746.20px;top:137.11px;font-size:6.92px;color:#bdbdbd;-webkit-text-stroke:0.2px #bdbdbd;transform:scaleY(1.15)">LL</div>
<div class="t" style="left:811.90px;top:114.24px;font-size:7.58px;color:#222;-webkit-text-stroke:0.2px #222;transform:scaleY(1.15)">Bleeding</div>
<div class="t" style="left:811.90px;top:125.39px;font-size:7.68px;color:#222;-webkit-text-stroke:0.2px #222;transform:scaleY(1.15)">Furcation</div>
<div class="t" style="left:811.90px;top:136.43px;font-size:8.14px;color:#222;-webkit-text-stroke:0.2px #222;transform:scaleY(1.15)">Mobility</div>
<div class="t" style="left:886.80px;top:114.06px;font-size:7.91px;color:#222;-webkit-text-stroke:0.2px #222;transform:scaleY(1.15)">1</div>
<div class="t" style="left:886.80px;top:125.26px;font-size:7.91px;color:#222;-webkit-text-stroke:0.2px #222;transform:scaleY(1.15)">0</div>
<div class="t" style="left:886.80px;top:136.56px;font-size:7.91px;color:#222;-webkit-text-stroke:0.2px #222;transform:scaleY(1.15)">2</div>
<div class="t" style="left:933.90px;top:114.50px;font-size:7.12px;color:#222;-webkit-text-stroke:0.2px #222;transform:scaleY(1.15)">UL</div>
<div class="t" style="left:933.90px;top:137.00px;font-size:7.12px;color:#222;-webkit-text-stroke:0.2px #222;transform:scaleY(1.15)">UL</div>
<div class="t" style="left:21.10px;top:163.53px;font-size:7.42px;color:#222;font-weight:bold;transform:scaleY(1.15)">Actions</div>
<div class="t" style="left:21.10px;top:182.47px;font-size:7.53px;color:#2868ab;-webkit-text-stroke:0.2px #2868ab;transform:scaleY(1.15)">Record New Exam</div>
<div class="t" style="left:21.10px;top:198.28px;font-size:7.51px;color:#2868ab;-webkit-text-stroke:0.2px #2868ab;transform:scaleY(1.15)">Delete Exam</div>
<div class="t" style="left:21.10px;top:214.09px;font-size:7.67px;color:#2868ab;-webkit-text-stroke:0.2px #2868ab;transform:scaleY(1.15)">Print Exam</div>
<div class="t" style="left:21.10px;top:229.99px;font-size:7.50px;color:#2868ab;-webkit-text-stroke:0.2px #2868ab;transform:scaleY(1.15)">Show Last Exam Values</div>
<div class="t" style="left:21.10px;top:246.05px;font-size:7.56px;color:#2868ab;-webkit-text-stroke:0.2px #2868ab;transform:scaleY(1.15)">Edit Exam Settings</div>
<div class="t" style="left:21.10px;top:261.77px;font-size:7.71px;color:#2868ab;-webkit-text-stroke:0.2px #2868ab;transform:scaleY(1.15)">Set Problem Thresholds</div>
<div class="t" style="left:21.10px;top:278.31px;font-size:7.46px;color:#2868ab;-webkit-text-stroke:0.2px #2868ab;transform:scaleY(1.15)">View Legend</div>
<div class="t" style="left:186.30px;top:559.09px;font-size:11.95px;color:#222;transform:scaleY(1.15)">Perio Exam Notes</div>
<div class="t" style="left:186.30px;top:577.03px;font-size:7.77px;color:#2868ab;-webkit-text-stroke:0.2px #2868ab;transform:scaleY(1.15)">Add Note</div>
<div class="t" style="left:266.00px;top:576.95px;font-size:7.93px;color:#2868ab;-webkit-text-stroke:0.2px #2868ab;transform:scaleY(1.15)">Add Templated Note</div>
<div class="t" style="left:187.20px;top:591.50px;font-size:7.48px;color:#111;-webkit-text-stroke:0.2px #111;transform:scaleY(1.15)">Follow up Full Perio Exam</div>
<div class="t" style="left:187.20px;top:604.84px;font-size:6.52px;color:#c0c0c0;-webkit-text-stroke:0.2px #c0c0c0;transform:scaleY(1.15)">Thu Nov 21, 2019 3:52 AM - Dr. Harry Li (HL)</div>
<svg class="a" style="left:981px;top:594px" width="8" height="8" viewBox="0 0 8 8"><path d="M6.5 1.5L1.5 6.5M6.5 4.5L4.5 6.5" stroke="#666" stroke-width="1"/></svg>
</body></html>
